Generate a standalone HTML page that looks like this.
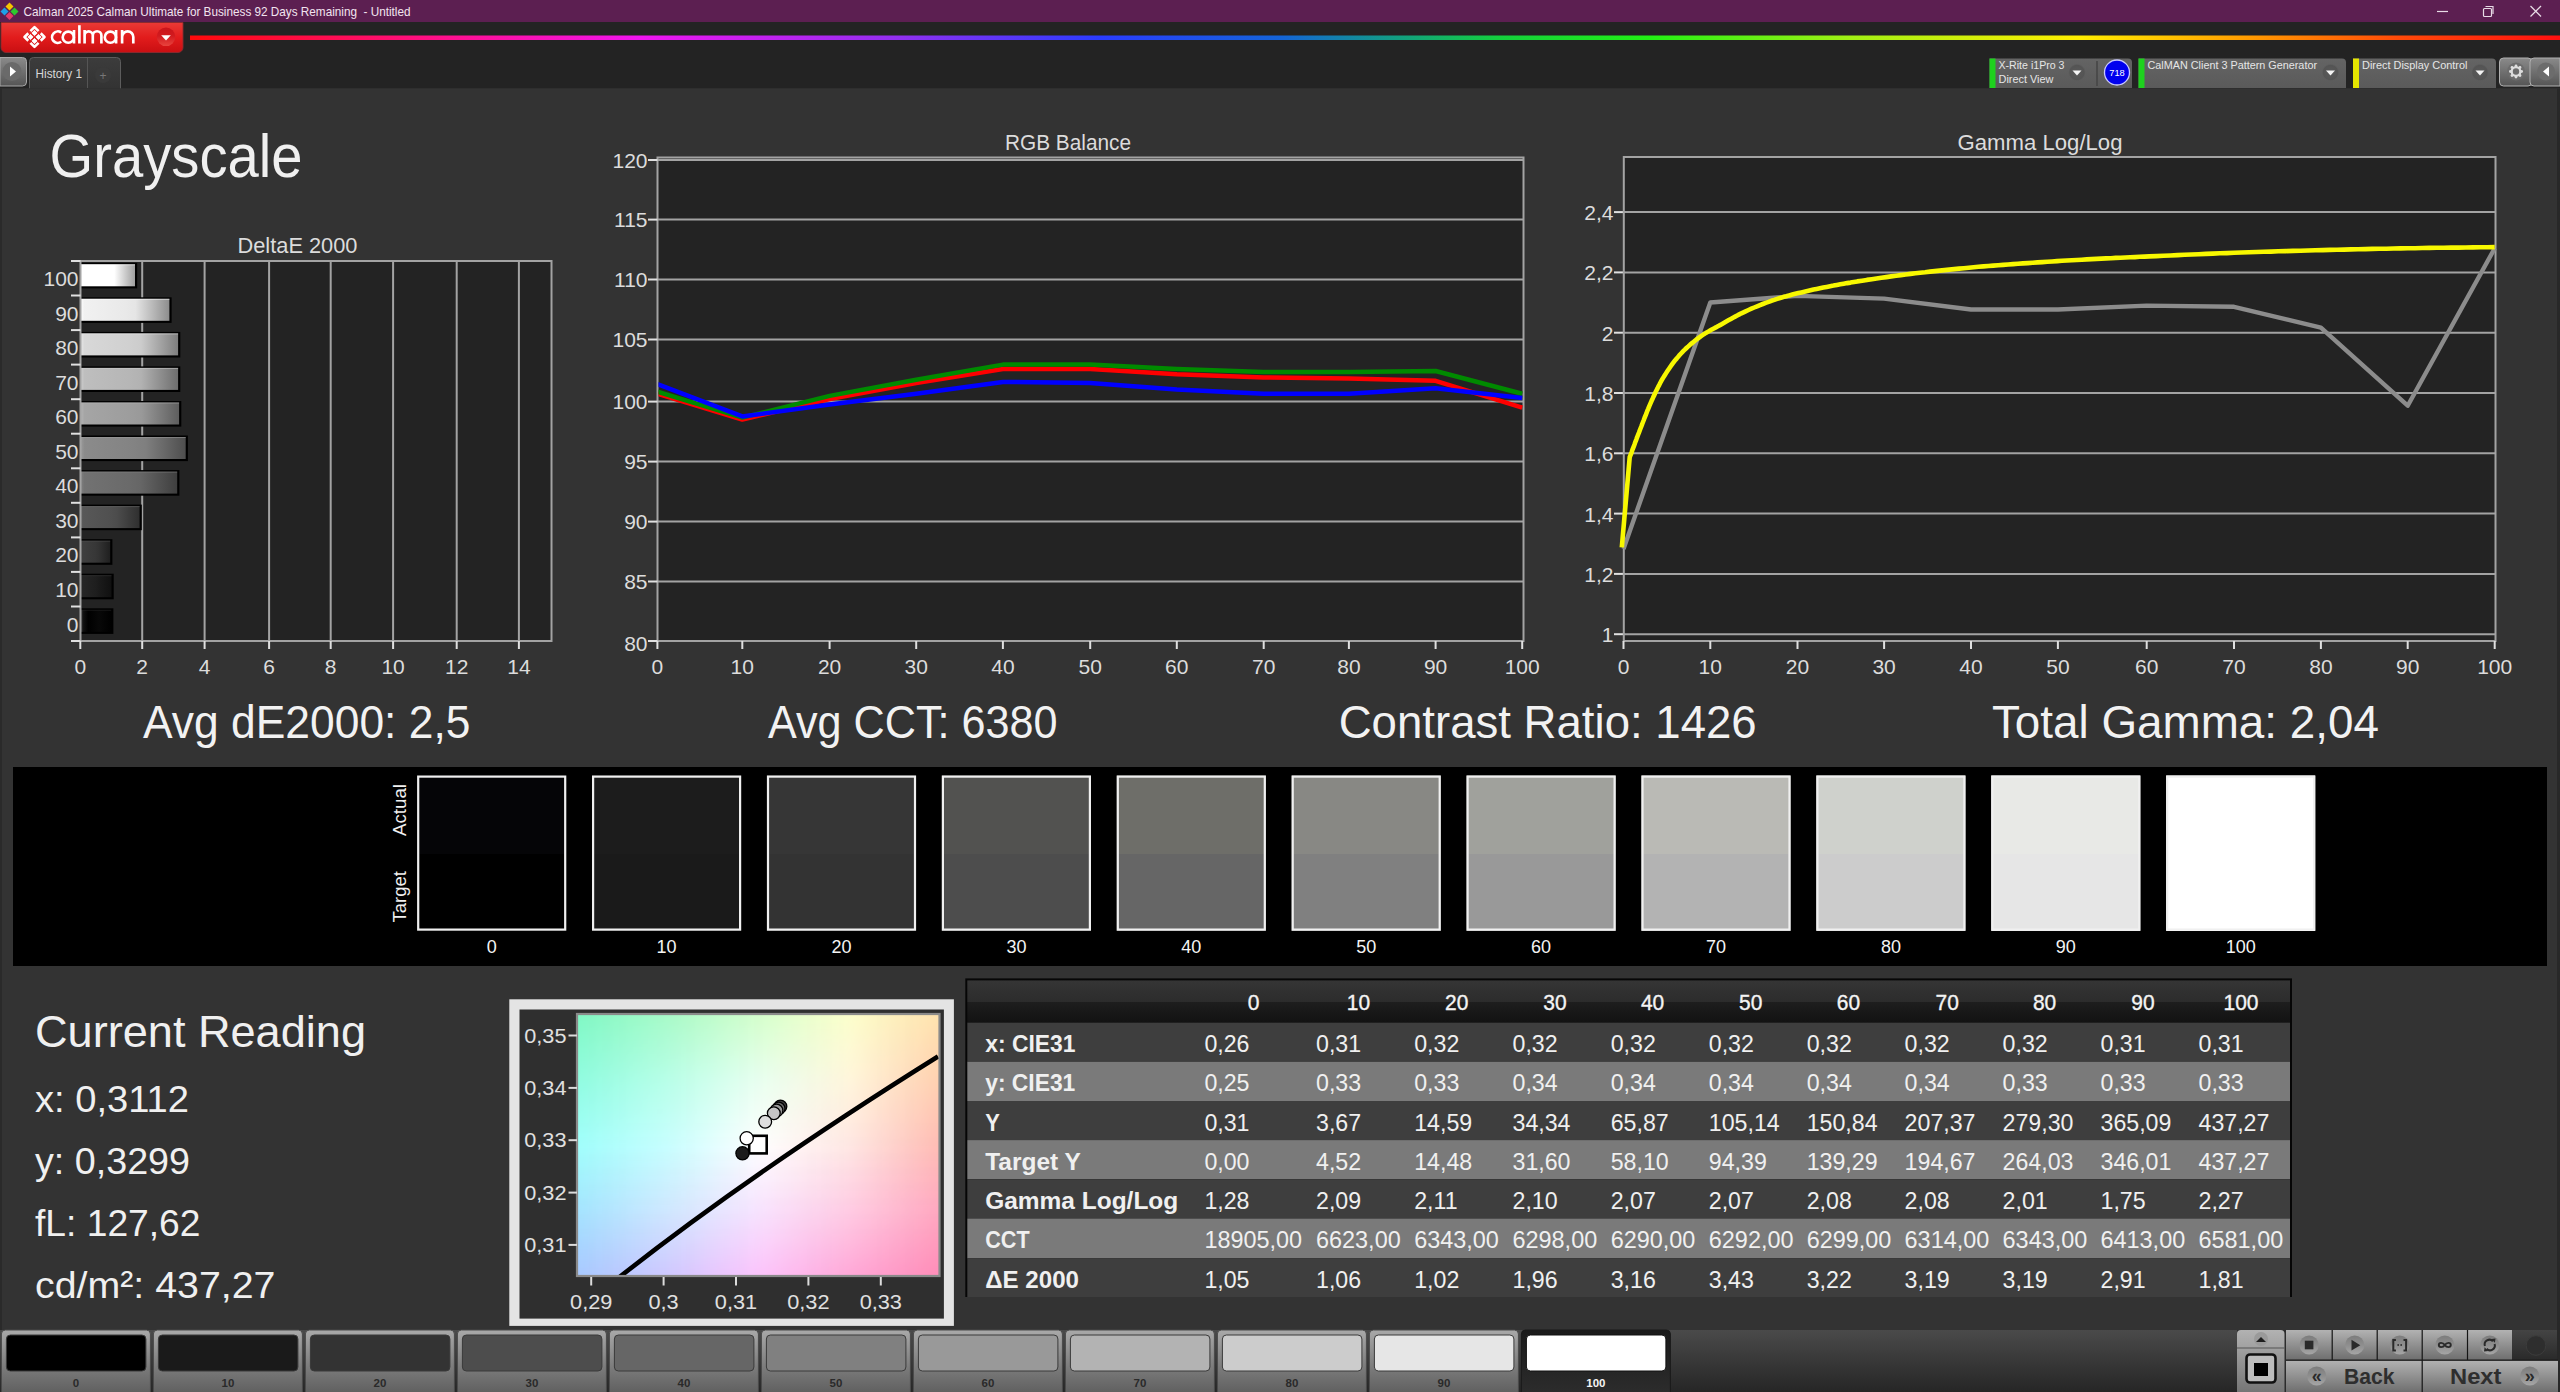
<!DOCTYPE html>
<html><head><meta charset="utf-8"><title>Calman Grayscale</title>
<style>
html,body{margin:0;padding:0;background:#333;overflow:hidden;}
body{width:2560px;height:1392px;position:relative;}
svg{position:absolute;left:0;top:0;display:block;font-family:"Liberation Sans", sans-serif;}
</style></head><body>
<svg width="2560" height="1392" viewBox="0 0 2560 1392">
<defs>
<linearGradient id="rainbow" x1="190" y1="0" x2="2560" y2="0" gradientUnits="userSpaceOnUse">
<stop offset="0" stop-color="#ff0a0a"/>
<stop offset="0.11" stop-color="#ff1090"/>
<stop offset="0.19" stop-color="#f015f0"/>
<stop offset="0.30" stop-color="#9030f0"/>
<stop offset="0.384" stop-color="#2a3cff"/>
<stop offset="0.46" stop-color="#1464d8"/>
<stop offset="0.51" stop-color="#12a080"/>
<stop offset="0.553" stop-color="#14d03c"/>
<stop offset="0.616" stop-color="#22f014"/>
<stop offset="0.70" stop-color="#a0f014"/>
<stop offset="0.797" stop-color="#ffee00"/>
<stop offset="0.87" stop-color="#ff9a00"/>
<stop offset="0.932" stop-color="#ff4a08"/>
<stop offset="1" stop-color="#ff1010"/>
</linearGradient>
<linearGradient id="redbtn" x1="0" y1="0" x2="0" y2="1">
<stop offset="0" stop-color="#ea3a36"/><stop offset="0.5" stop-color="#e21c1c"/><stop offset="1" stop-color="#c90f12"/>
</linearGradient>
<linearGradient id="rdrop" x1="0" y1="0" x2="0" y2="1"><stop offset="0" stop-color="#c8141a"/><stop offset="0.45" stop-color="#d21a1e"/><stop offset="1" stop-color="#e8443e"/></linearGradient>
<linearGradient id="gbtn" x1="0" y1="0" x2="0" y2="1">
<stop offset="0" stop-color="#8a8a8a"/><stop offset="1" stop-color="#555"/></linearGradient>
<linearGradient id="tab" x1="0" y1="0" x2="0" y2="1">
<stop offset="0" stop-color="#3c3c3c"/><stop offset="1" stop-color="#333"/></linearGradient>
<linearGradient id="dev" x1="0" y1="0" x2="0" y2="1">
<stop offset="0" stop-color="#646464"/><stop offset="1" stop-color="#5a5a5a"/></linearGradient>
<radialGradient id="drop" cx="0.5" cy="0.5" r="0.5">
<stop offset="0" stop-color="#5a5a5a"/><stop offset="0.8" stop-color="#545454"/><stop offset="1" stop-color="#5e5e5e" stop-opacity="0"/></radialGradient>
<linearGradient id="bar100" x1="0" y1="0" x2="1" y2="0"><stop offset="0.00" stop-color="#ffffff"/><stop offset="0.04" stop-color="#ffffff"/><stop offset="0.50" stop-color="#ffffff"/><stop offset="0.62" stop-color="#ffffff"/><stop offset="1.00" stop-color="#9e9e9e"/></linearGradient>
<linearGradient id="bar90" x1="0" y1="0" x2="1" y2="0"><stop offset="0.00" stop-color="#ffffff"/><stop offset="0.04" stop-color="#f1f1f1"/><stop offset="0.50" stop-color="#e9e9e9"/><stop offset="0.62" stop-color="#e5e5e5"/><stop offset="1.00" stop-color="#8d8d8d"/></linearGradient>
<linearGradient id="bar80" x1="0" y1="0" x2="1" y2="0"><stop offset="0.00" stop-color="#e8e8e8"/><stop offset="0.04" stop-color="#d8d8d8"/><stop offset="0.50" stop-color="#d0d0d0"/><stop offset="0.62" stop-color="#cccccc"/><stop offset="1.00" stop-color="#7e7e7e"/></linearGradient>
<linearGradient id="bar70" x1="0" y1="0" x2="1" y2="0"><stop offset="0.00" stop-color="#cecece"/><stop offset="0.04" stop-color="#bebebe"/><stop offset="0.50" stop-color="#b6b6b6"/><stop offset="0.62" stop-color="#b2b2b2"/><stop offset="1.00" stop-color="#6e6e6e"/></linearGradient>
<linearGradient id="bar60" x1="0" y1="0" x2="1" y2="0"><stop offset="0.00" stop-color="#b5b5b5"/><stop offset="0.04" stop-color="#a5a5a5"/><stop offset="0.50" stop-color="#9d9d9d"/><stop offset="0.62" stop-color="#999999"/><stop offset="1.00" stop-color="#5e5e5e"/></linearGradient>
<linearGradient id="bar50" x1="0" y1="0" x2="1" y2="0"><stop offset="0.00" stop-color="#9b9b9b"/><stop offset="0.04" stop-color="#8b8b8b"/><stop offset="0.50" stop-color="#838383"/><stop offset="0.62" stop-color="#7f7f7f"/><stop offset="1.00" stop-color="#4e4e4e"/></linearGradient>
<linearGradient id="bar40" x1="0" y1="0" x2="1" y2="0"><stop offset="0.00" stop-color="#828282"/><stop offset="0.04" stop-color="#727272"/><stop offset="0.50" stop-color="#6a6a6a"/><stop offset="0.62" stop-color="#666666"/><stop offset="1.00" stop-color="#3f3f3f"/></linearGradient>
<linearGradient id="bar30" x1="0" y1="0" x2="1" y2="0"><stop offset="0.00" stop-color="#686868"/><stop offset="0.04" stop-color="#585858"/><stop offset="0.50" stop-color="#505050"/><stop offset="0.62" stop-color="#4c4c4c"/><stop offset="1.00" stop-color="#2f2f2f"/></linearGradient>
<linearGradient id="bar20" x1="0" y1="0" x2="1" y2="0"><stop offset="0.00" stop-color="#4f4f4f"/><stop offset="0.04" stop-color="#3f3f3f"/><stop offset="0.50" stop-color="#373737"/><stop offset="0.62" stop-color="#333333"/><stop offset="1.00" stop-color="#1f1f1f"/></linearGradient>
<linearGradient id="bar10" x1="0" y1="0" x2="1" y2="0"><stop offset="0.00" stop-color="#363636"/><stop offset="0.04" stop-color="#262626"/><stop offset="0.50" stop-color="#1e1e1e"/><stop offset="0.62" stop-color="#1a1a1a"/><stop offset="1.00" stop-color="#101010"/></linearGradient>
<linearGradient id="bar0" x1="0" y1="0" x2="1" y2="0"><stop offset="0.00" stop-color="#3a3a3a"/><stop offset="0.10" stop-color="#101010"/><stop offset="0.25" stop-color="#000000"/><stop offset="0.60" stop-color="#080808"/><stop offset="1.00" stop-color="#000000"/></linearGradient>
<clipPath id="qclip"><rect x="658.5" y="157.5" width="865.0" height="483.5"/></clipPath>
<clipPath id="cieclip"><rect x="577.0" y="1014.0" width="362.5" height="262.0"/></clipPath>
<filter id="cblur" x="-5%" y="-5%" width="110%" height="110%"><feGaussianBlur stdDeviation="4"/></filter>
<linearGradient id="thead" x1="0" y1="0" x2="0" y2="1"><stop offset="0" stop-color="#353535"/><stop offset="0.5" stop-color="#2c2c2c"/><stop offset="0.5" stop-color="#1e1e1e"/><stop offset="1" stop-color="#121212"/></linearGradient>
<linearGradient id="bbar" x1="0" y1="0" x2="0" y2="1"><stop offset="0" stop-color="#4a4a4a"/><stop offset="1" stop-color="#262626"/></linearGradient>
<linearGradient id="bbtn" x1="0" y1="0" x2="0" y2="1"><stop offset="0" stop-color="#a9a9a9"/><stop offset="0.55" stop-color="#7a7a7a"/><stop offset="1" stop-color="#585858"/></linearGradient>
<linearGradient id="bsel" x1="0" y1="0" x2="0" y2="1"><stop offset="0" stop-color="#1a1a1a"/><stop offset="1" stop-color="#2e2e2e"/></linearGradient>
<linearGradient id="cbtn" x1="0" y1="0" x2="0" y2="1"><stop offset="0" stop-color="#b2b2b2"/><stop offset="1" stop-color="#6e6e6e"/></linearGradient>
<linearGradient id="bub" x1="0" y1="0" x2="0" y2="1"><stop offset="0" stop-color="#7c7c7c"/><stop offset="0.5" stop-color="#8e8e8e"/><stop offset="1" stop-color="#a6a6a6"/></linearGradient>
<linearGradient id="dkbar" x1="0" y1="0" x2="0" y2="1"><stop offset="0" stop-color="#444"/><stop offset="1" stop-color="#2a2a2a"/></linearGradient>
</defs>
<rect x="0.0" y="0.0" width="2560.0" height="22.0" fill="#5c1f51"/>
<path d="M9.5 2.5l4 4l-4 4l-4 -4z" fill="#f5c400"/>
<path d="M4.5 7.5l4 4l-4 4l-4 -4z" fill="#1ea0e6"/>
<path d="M14.5 7.5l4 4l-4 4l-4 -4z" fill="#2ec82e"/>
<path d="M9.5 12.0l4 4l-4 4l-4 -4z" fill="#e23a6a"/>
<text x="23.5" y="16.0" font-size="12.2" fill="#f2e4ef" textLength="387.0" lengthAdjust="spacingAndGlyphs">Calman 2025 Calman Ultimate for Business 92 Days Remaining  - Untitled</text>
<line x1="2437.0" y1="11.5" x2="2448.0" y2="11.5" stroke="#e8dce6" stroke-width="1.2"/>
<rect x="2483.5" y="8.5" width="8" height="8" fill="none" stroke="#e8dce6" stroke-width="1.2" rx="1"/>
<path d="M2485.5 6.5h7.5v7.5" fill="none" stroke="#e8dce6" stroke-width="1.2"/>
<line x1="2530.5" y1="6.0" x2="2541.0" y2="16.5" stroke="#e8dce6" stroke-width="1.3"/>
<line x1="2541.0" y1="6.0" x2="2530.5" y2="16.5" stroke="#e8dce6" stroke-width="1.3"/>
<rect x="0.0" y="22.0" width="2560.0" height="66.5" fill="#232323"/>
<rect x="190.0" y="35.5" width="2370.0" height="4.5" fill="url(#rainbow)"/>
<path d="M1 22.5h182v25a5 5 0 0 1 -5 5h-172a5 5 0 0 1 -5 -5z" fill="url(#redbtn)" stroke="#8a2a30" stroke-width="0.9"/>
<g><path d="M30.4 31.1L34.5 27.1L38.6 31.1" stroke="#fff" stroke-width="2.6" fill="none" stroke-linecap="butt" stroke-linejoin="round"/><path d="M28.3 33.3L24.5 37L28.3 40.7" stroke="#fff" stroke-width="2.6" fill="none" stroke-linecap="butt" stroke-linejoin="round"/><path d="M40.7 33.3L44.5 37L40.7 40.7" stroke="#fff" stroke-width="2.6" fill="none" stroke-linecap="butt" stroke-linejoin="round"/><path d="M30.4 42.9L34.5 46.9L38.6 42.9" stroke="#fff" stroke-width="2.6" fill="none" stroke-linecap="butt" stroke-linejoin="round"/><path d="M34.5 30.4l2.6 2.6l-2.6 2.6l-2.6 -2.6z" fill="#fff" stroke="#fff" stroke-width="0.9" stroke-linejoin="round"/><path d="M30.5 34.4l2.6 2.6l-2.6 2.6l-2.6 -2.6z" fill="#fff" stroke="#fff" stroke-width="0.9" stroke-linejoin="round"/><path d="M38.5 34.4l2.6 2.6l-2.6 2.6l-2.6 -2.6z" fill="#fff" stroke="#fff" stroke-width="0.9" stroke-linejoin="round"/><path d="M34.5 38.4l2.6 2.6l-2.6 2.6l-2.6 -2.6z" fill="#fff" stroke="#fff" stroke-width="0.9" stroke-linejoin="round"/></g>
<g><path d="M61.2 32.6A5.7 5.7 0 1 0 61.2 41.7" stroke="#fff" stroke-width="2.65" fill="none"/><circle cx="68.3" cy="37.15" r="5.6" stroke="#fff" stroke-width="2.65" fill="none"/><path d="M74 30V43.5" stroke="#fff" stroke-width="2.65" fill="none"/><path d="M79.4 25.2V43.5" stroke="#fff" stroke-width="2.65" fill="none"/><path d="M84.6 30V43.5M84.6 35.5A4.1 4.1 0 0 1 92.8 35.5V43.5M92.8 35.5A4.3 4.3 0 0 1 101.4 35.5V43.5" stroke="#fff" stroke-width="2.65" fill="none"/><circle cx="110.4" cy="37.15" r="5.6" stroke="#fff" stroke-width="2.65" fill="none"/><path d="M116.1 30V43.5" stroke="#fff" stroke-width="2.65" fill="none"/><path d="M122.1 30V43.5M122.1 37A5.6 5.6 0 0 1 133.3 37V43.5" stroke="#fff" stroke-width="2.65" fill="none"/></g>
<circle cx="166" cy="36.8" r="9.3" fill="url(#rdrop)"/>
<path d="M161.2 35.2h9.6l-4.8 5.2z" fill="#fff"/>
<path d="M0 57.5h22.5a4 4 0 0 1 4 4v20.5a4 4 0 0 1 -4 4h-22.5z" fill="url(#gbtn)" stroke="#a8a8a8" stroke-width="1"/>
<circle cx="12" cy="71.5" r="9.5" fill="#6a6a6a"/>
<path d="M10 66.5l6 5l-6 5z" fill="#fff"/>
<path d="M29.5 88.5v-27a4 4 0 0 1 4 -4h83a4 4 0 0 1 4 4v27" fill="url(#tab)" stroke="#5c5c5c" stroke-width="1"/>
<line x1="87.5" y1="58.0" x2="87.5" y2="88.0" stroke="#555" stroke-width="1.0"/>
<text x="35.5" y="78.3" font-size="12.3" fill="#d8d8d8" textLength="46.5" lengthAdjust="spacingAndGlyphs">History 1</text>
<circle cx="103" cy="75" r="8" fill="#3a3a3a"/>
<text x="103.0" y="79.5" font-size="12.0" fill="#777" text-anchor="middle">+</text>
<path d="M1989.5 88h142.5v-25.5a4 4 0 0 0 -4 -4h-138.5z" fill="url(#dev)"/>
<rect x="1989.5" y="58.5" width="6.0" height="29.5" fill="#1ed21e"/>
<text x="1998.5" y="69.2" font-size="11.3" fill="#e6e6e6" textLength="66.0" lengthAdjust="spacingAndGlyphs">X-Rite i1Pro 3</text>
<text x="1998.5" y="83.4" font-size="11.3" fill="#e6e6e6" textLength="55.0" lengthAdjust="spacingAndGlyphs">Direct View</text>
<circle cx="2077.0" cy="72.5" r="9" fill="url(#drop)"/>
<path d="M2072.5 70.5h9l-4.5 5z" fill="#f4f4f4"/>
<line x1="2097.0" y1="61.0" x2="2097.0" y2="86.0" stroke="#444" stroke-width="1.5"/>
<circle cx="2117" cy="72.5" r="12.5" fill="#0000ee" stroke="#c8c8ff" stroke-width="1.3"/>
<text x="2117.0" y="76.2" font-size="9.5" fill="#ffffff" text-anchor="middle" textLength="15.5" lengthAdjust="spacingAndGlyphs">718</text>
<path d="M2138.5 88h207.5v-25.5a4 4 0 0 0 -4 -4h-203.5z" fill="url(#dev)"/>
<rect x="2138.5" y="58.5" width="6.0" height="29.5" fill="#1ed21e"/>
<text x="2147.5" y="69.2" font-size="11.3" fill="#e6e6e6" textLength="169.5" lengthAdjust="spacingAndGlyphs">CalMAN Client 3 Pattern Generator</text>
<circle cx="2330.5" cy="72.5" r="9" fill="url(#drop)"/>
<path d="M2326.0 70.5h9l-4.5 5z" fill="#f4f4f4"/>
<path d="M2353.0 88h143.0v-25.5a4 4 0 0 0 -4 -4h-139.0z" fill="url(#dev)"/>
<rect x="2353.0" y="58.5" width="6.0" height="29.5" fill="#e6e600"/>
<text x="2362.0" y="69.2" font-size="11.3" fill="#e6e6e6" textLength="105.5" lengthAdjust="spacingAndGlyphs">Direct Display Control</text>
<circle cx="2480.0" cy="72.5" r="9" fill="url(#drop)"/>
<path d="M2475.5 70.5h9l-4.5 5z" fill="#f4f4f4"/>
<rect x="2499.5" y="58" width="32.5" height="28" rx="4" fill="url(#gbtn)" stroke="#b0b0b0" stroke-width="1"/>
<circle cx="2516" cy="71.5" r="9" fill="#6c6c6c"/>
<circle cx="2521.6" cy="71.5" r="1.4" fill="#ddd"/><circle cx="2520.0" cy="75.5" r="1.4" fill="#ddd"/><circle cx="2516.0" cy="77.1" r="1.4" fill="#ddd"/><circle cx="2512.0" cy="75.5" r="1.4" fill="#ddd"/><circle cx="2510.4" cy="71.5" r="1.4" fill="#ddd"/><circle cx="2512.0" cy="67.5" r="1.4" fill="#ddd"/><circle cx="2516.0" cy="65.9" r="1.4" fill="#ddd"/><circle cx="2520.0" cy="67.5" r="1.4" fill="#ddd"/>
<circle cx="2516" cy="71.5" r="4.3" fill="none" stroke="#ddd" stroke-width="2.2"/>
<path d="M2534 58h26v28h-26a4 4 0 0 1 -4 -4v-20a4 4 0 0 1 4 -4z" fill="url(#gbtn)" stroke="#b0b0b0" stroke-width="1"/>
<circle cx="2546" cy="71.5" r="9" fill="#6c6c6c"/>
<path d="M2549 66.5l-6 5l6 5z" fill="#fff"/>
<rect x="0.0" y="88.5" width="2560.0" height="1303.5" fill="#333333"/>
<rect x="0.0" y="88.5" width="2.0" height="1303.5" fill="#2a2a2a"/>
<rect x="2557.0" y="88.5" width="3.0" height="1303.5" fill="#282828"/>
<text x="49.5" y="177.0" font-size="62.0" fill="#f0f0f0" textLength="253.0" lengthAdjust="spacingAndGlyphs">Grayscale</text>
<text x="237.5" y="253.0" font-size="22.0" fill="#dcdcdc" textLength="120.0" lengthAdjust="spacingAndGlyphs">DeltaE 2000</text>
<rect x="80.5" y="261.0" width="471.0" height="380.0" fill="#232323"/>
<line x1="142.2" y1="261.0" x2="142.2" y2="641.0" stroke="#a3a3a3" stroke-width="2.0"/>
<line x1="204.6" y1="261.0" x2="204.6" y2="641.0" stroke="#a3a3a3" stroke-width="2.0"/>
<line x1="269.1" y1="261.0" x2="269.1" y2="641.0" stroke="#a3a3a3" stroke-width="2.0"/>
<line x1="330.7" y1="261.0" x2="330.7" y2="641.0" stroke="#a3a3a3" stroke-width="2.0"/>
<line x1="393.1" y1="261.0" x2="393.1" y2="641.0" stroke="#a3a3a3" stroke-width="2.0"/>
<line x1="456.7" y1="261.0" x2="456.7" y2="641.0" stroke="#a3a3a3" stroke-width="2.0"/>
<line x1="518.9" y1="261.0" x2="518.9" y2="641.0" stroke="#a3a3a3" stroke-width="2.0"/>
<rect x="80.5" y="262.8" width="56.7" height="25.6" fill="#000000"/>
<rect x="80.5" y="264.3" width="54.5" height="22.0" fill="url(#bar100)"/>
<rect x="80.5" y="264.3" width="54.5" height="1.0" fill="#ffffff" opacity="0.55"/>
<rect x="80.5" y="297.3" width="91.1" height="25.6" fill="#000000"/>
<rect x="80.5" y="298.8" width="88.9" height="22.0" fill="url(#bar90)"/>
<rect x="80.5" y="298.8" width="88.9" height="1.0" fill="#ffffff" opacity="0.55"/>
<rect x="80.5" y="331.9" width="99.8" height="25.6" fill="#000000"/>
<rect x="80.5" y="333.4" width="97.6" height="22.0" fill="url(#bar80)"/>
<rect x="80.5" y="333.4" width="97.6" height="1.0" fill="#eaeaea" opacity="0.55"/>
<rect x="80.5" y="366.4" width="99.8" height="25.6" fill="#000000"/>
<rect x="80.5" y="367.9" width="97.6" height="22.0" fill="url(#bar70)"/>
<rect x="80.5" y="367.9" width="97.6" height="1.0" fill="#d0d0d0" opacity="0.55"/>
<rect x="80.5" y="401.0" width="100.8" height="25.6" fill="#000000"/>
<rect x="80.5" y="402.5" width="98.6" height="22.0" fill="url(#bar60)"/>
<rect x="80.5" y="402.5" width="98.6" height="1.0" fill="#b7b7b7" opacity="0.55"/>
<rect x="80.5" y="435.5" width="107.4" height="25.6" fill="#000000"/>
<rect x="80.5" y="437.0" width="105.2" height="22.0" fill="url(#bar50)"/>
<rect x="80.5" y="437.0" width="105.2" height="1.0" fill="#9d9d9d" opacity="0.55"/>
<rect x="80.5" y="470.1" width="98.9" height="25.6" fill="#000000"/>
<rect x="80.5" y="471.6" width="96.7" height="22.0" fill="url(#bar40)"/>
<rect x="80.5" y="471.6" width="96.7" height="1.0" fill="#848484" opacity="0.55"/>
<rect x="80.5" y="504.6" width="61.3" height="25.6" fill="#000000"/>
<rect x="80.5" y="506.1" width="59.1" height="22.0" fill="url(#bar30)"/>
<rect x="80.5" y="506.1" width="59.1" height="1.0" fill="#6a6a6a" opacity="0.55"/>
<rect x="80.5" y="539.2" width="31.9" height="25.6" fill="#000000"/>
<rect x="80.5" y="540.7" width="29.7" height="22.0" fill="url(#bar20)"/>
<rect x="80.5" y="540.7" width="29.7" height="1.0" fill="#515151" opacity="0.55"/>
<rect x="80.5" y="573.7" width="33.2" height="25.6" fill="#000000"/>
<rect x="80.5" y="575.2" width="31.0" height="22.0" fill="url(#bar10)"/>
<rect x="80.5" y="575.2" width="31.0" height="1.0" fill="#383838" opacity="0.55"/>
<rect x="80.5" y="608.3" width="32.9" height="25.6" fill="#000000"/>
<rect x="80.5" y="609.8" width="30.7" height="22.0" fill="url(#bar0)"/>
<rect x="80.5" y="609.8" width="30.7" height="1.0" fill="#282828" opacity="0.55"/>
<rect x="80.5" y="261.0" width="471.0" height="380.0" fill="none" stroke="#a3a3a3" stroke-width="2"/>
<line x1="71.0" y1="261.0" x2="80.5" y2="261.0" stroke="#e0e0e0" stroke-width="2.0"/>
<line x1="71.0" y1="295.5" x2="80.5" y2="295.5" stroke="#e0e0e0" stroke-width="2.0"/>
<line x1="71.0" y1="330.1" x2="80.5" y2="330.1" stroke="#e0e0e0" stroke-width="2.0"/>
<line x1="71.0" y1="364.6" x2="80.5" y2="364.6" stroke="#e0e0e0" stroke-width="2.0"/>
<line x1="71.0" y1="399.2" x2="80.5" y2="399.2" stroke="#e0e0e0" stroke-width="2.0"/>
<line x1="71.0" y1="433.7" x2="80.5" y2="433.7" stroke="#e0e0e0" stroke-width="2.0"/>
<line x1="71.0" y1="468.3" x2="80.5" y2="468.3" stroke="#e0e0e0" stroke-width="2.0"/>
<line x1="71.0" y1="502.8" x2="80.5" y2="502.8" stroke="#e0e0e0" stroke-width="2.0"/>
<line x1="71.0" y1="537.4" x2="80.5" y2="537.4" stroke="#e0e0e0" stroke-width="2.0"/>
<line x1="71.0" y1="571.9" x2="80.5" y2="571.9" stroke="#e0e0e0" stroke-width="2.0"/>
<line x1="71.0" y1="606.5" x2="80.5" y2="606.5" stroke="#e0e0e0" stroke-width="2.0"/>
<line x1="71.0" y1="641.0" x2="80.5" y2="641.0" stroke="#e0e0e0" stroke-width="2.0"/>
<text x="78.5" y="286.1" font-size="21.0" fill="#dcdcdc" text-anchor="end">100</text>
<text x="78.5" y="320.6" font-size="21.0" fill="#dcdcdc" text-anchor="end">90</text>
<text x="78.5" y="355.2" font-size="21.0" fill="#dcdcdc" text-anchor="end">80</text>
<text x="78.5" y="389.7" font-size="21.0" fill="#dcdcdc" text-anchor="end">70</text>
<text x="78.5" y="424.3" font-size="21.0" fill="#dcdcdc" text-anchor="end">60</text>
<text x="78.5" y="458.8" font-size="21.0" fill="#dcdcdc" text-anchor="end">50</text>
<text x="78.5" y="493.3" font-size="21.0" fill="#dcdcdc" text-anchor="end">40</text>
<text x="78.5" y="527.9" font-size="21.0" fill="#dcdcdc" text-anchor="end">30</text>
<text x="78.5" y="562.4" font-size="21.0" fill="#dcdcdc" text-anchor="end">20</text>
<text x="78.5" y="597.0" font-size="21.0" fill="#dcdcdc" text-anchor="end">10</text>
<text x="78.5" y="631.5" font-size="21.0" fill="#dcdcdc" text-anchor="end">0</text>
<line x1="80.3" y1="641.0" x2="80.3" y2="649.0" stroke="#e0e0e0" stroke-width="2.0"/>
<text x="80.3" y="674.0" font-size="21.0" fill="#dcdcdc" text-anchor="middle">0</text>
<line x1="142.2" y1="641.0" x2="142.2" y2="649.0" stroke="#e0e0e0" stroke-width="2.0"/>
<text x="142.2" y="674.0" font-size="21.0" fill="#dcdcdc" text-anchor="middle">2</text>
<line x1="204.6" y1="641.0" x2="204.6" y2="649.0" stroke="#e0e0e0" stroke-width="2.0"/>
<text x="204.6" y="674.0" font-size="21.0" fill="#dcdcdc" text-anchor="middle">4</text>
<line x1="269.1" y1="641.0" x2="269.1" y2="649.0" stroke="#e0e0e0" stroke-width="2.0"/>
<text x="269.1" y="674.0" font-size="21.0" fill="#dcdcdc" text-anchor="middle">6</text>
<line x1="330.7" y1="641.0" x2="330.7" y2="649.0" stroke="#e0e0e0" stroke-width="2.0"/>
<text x="330.7" y="674.0" font-size="21.0" fill="#dcdcdc" text-anchor="middle">8</text>
<line x1="393.1" y1="641.0" x2="393.1" y2="649.0" stroke="#e0e0e0" stroke-width="2.0"/>
<text x="393.1" y="674.0" font-size="21.0" fill="#dcdcdc" text-anchor="middle">10</text>
<line x1="456.7" y1="641.0" x2="456.7" y2="649.0" stroke="#e0e0e0" stroke-width="2.0"/>
<text x="456.7" y="674.0" font-size="21.0" fill="#dcdcdc" text-anchor="middle">12</text>
<line x1="518.9" y1="641.0" x2="518.9" y2="649.0" stroke="#e0e0e0" stroke-width="2.0"/>
<text x="518.9" y="674.0" font-size="21.0" fill="#dcdcdc" text-anchor="middle">14</text>
<text x="1005.0" y="149.5" font-size="22.0" fill="#dcdcdc" textLength="126.0" lengthAdjust="spacingAndGlyphs">RGB Balance</text>
<rect x="657.5" y="157.5" width="866.0" height="483.5" fill="#232323"/>
<line x1="657.5" y1="581.5" x2="1523.5" y2="581.5" stroke="#a3a3a3" stroke-width="2.0"/>
<line x1="657.5" y1="521.6" x2="1523.5" y2="521.6" stroke="#a3a3a3" stroke-width="2.0"/>
<line x1="657.5" y1="461.6" x2="1523.5" y2="461.6" stroke="#a3a3a3" stroke-width="2.0"/>
<line x1="657.5" y1="401.6" x2="1523.5" y2="401.6" stroke="#a3a3a3" stroke-width="2.0"/>
<line x1="657.5" y1="339.5" x2="1523.5" y2="339.5" stroke="#a3a3a3" stroke-width="2.0"/>
<line x1="657.5" y1="279.5" x2="1523.5" y2="279.5" stroke="#a3a3a3" stroke-width="2.0"/>
<line x1="657.5" y1="219.6" x2="1523.5" y2="219.6" stroke="#a3a3a3" stroke-width="2.0"/>
<line x1="657.5" y1="160.0" x2="1523.5" y2="160.0" stroke="#a3a3a3" stroke-width="2.0"/>
<rect x="657.5" y="157.5" width="866.0" height="483.5" fill="none" stroke="#a3a3a3" stroke-width="2"/>
<line x1="648.0" y1="641.0" x2="657.5" y2="641.0" stroke="#e0e0e0" stroke-width="2.0"/>
<text x="647.5" y="650.5" font-size="21.0" fill="#dcdcdc" text-anchor="end">80</text>
<line x1="648.0" y1="581.5" x2="657.5" y2="581.5" stroke="#e0e0e0" stroke-width="2.0"/>
<text x="647.5" y="589.0" font-size="21.0" fill="#dcdcdc" text-anchor="end">85</text>
<line x1="648.0" y1="521.6" x2="657.5" y2="521.6" stroke="#e0e0e0" stroke-width="2.0"/>
<text x="647.5" y="529.1" font-size="21.0" fill="#dcdcdc" text-anchor="end">90</text>
<line x1="648.0" y1="461.6" x2="657.5" y2="461.6" stroke="#e0e0e0" stroke-width="2.0"/>
<text x="647.5" y="469.1" font-size="21.0" fill="#dcdcdc" text-anchor="end">95</text>
<line x1="648.0" y1="401.6" x2="657.5" y2="401.6" stroke="#e0e0e0" stroke-width="2.0"/>
<text x="647.5" y="409.1" font-size="21.0" fill="#dcdcdc" text-anchor="end">100</text>
<line x1="648.0" y1="339.5" x2="657.5" y2="339.5" stroke="#e0e0e0" stroke-width="2.0"/>
<text x="647.5" y="347.0" font-size="21.0" fill="#dcdcdc" text-anchor="end">105</text>
<line x1="648.0" y1="279.5" x2="657.5" y2="279.5" stroke="#e0e0e0" stroke-width="2.0"/>
<text x="647.5" y="287.0" font-size="21.0" fill="#dcdcdc" text-anchor="end">110</text>
<line x1="648.0" y1="219.6" x2="657.5" y2="219.6" stroke="#e0e0e0" stroke-width="2.0"/>
<text x="647.5" y="227.1" font-size="21.0" fill="#dcdcdc" text-anchor="end">115</text>
<line x1="648.0" y1="160.0" x2="657.5" y2="160.0" stroke="#e0e0e0" stroke-width="2.0"/>
<text x="647.5" y="167.5" font-size="21.0" fill="#dcdcdc" text-anchor="end">120</text>
<line x1="657.4" y1="641.0" x2="657.4" y2="649.0" stroke="#e0e0e0" stroke-width="2.0"/>
<text x="657.4" y="674.0" font-size="21.0" fill="#dcdcdc" text-anchor="middle">0</text>
<line x1="742.3" y1="641.0" x2="742.3" y2="649.0" stroke="#e0e0e0" stroke-width="2.0"/>
<text x="742.3" y="674.0" font-size="21.0" fill="#dcdcdc" text-anchor="middle">10</text>
<line x1="829.6" y1="641.0" x2="829.6" y2="649.0" stroke="#e0e0e0" stroke-width="2.0"/>
<text x="829.6" y="674.0" font-size="21.0" fill="#dcdcdc" text-anchor="middle">20</text>
<line x1="916.2" y1="641.0" x2="916.2" y2="649.0" stroke="#e0e0e0" stroke-width="2.0"/>
<text x="916.2" y="674.0" font-size="21.0" fill="#dcdcdc" text-anchor="middle">30</text>
<line x1="1002.9" y1="641.0" x2="1002.9" y2="649.0" stroke="#e0e0e0" stroke-width="2.0"/>
<text x="1002.9" y="674.0" font-size="21.0" fill="#dcdcdc" text-anchor="middle">40</text>
<line x1="1090.2" y1="641.0" x2="1090.2" y2="649.0" stroke="#e0e0e0" stroke-width="2.0"/>
<text x="1090.2" y="674.0" font-size="21.0" fill="#dcdcdc" text-anchor="middle">50</text>
<line x1="1176.8" y1="641.0" x2="1176.8" y2="649.0" stroke="#e0e0e0" stroke-width="2.0"/>
<text x="1176.8" y="674.0" font-size="21.0" fill="#dcdcdc" text-anchor="middle">60</text>
<line x1="1263.7" y1="641.0" x2="1263.7" y2="649.0" stroke="#e0e0e0" stroke-width="2.0"/>
<text x="1263.7" y="674.0" font-size="21.0" fill="#dcdcdc" text-anchor="middle">70</text>
<line x1="1348.9" y1="641.0" x2="1348.9" y2="649.0" stroke="#e0e0e0" stroke-width="2.0"/>
<text x="1348.9" y="674.0" font-size="21.0" fill="#dcdcdc" text-anchor="middle">80</text>
<line x1="1435.6" y1="641.0" x2="1435.6" y2="649.0" stroke="#e0e0e0" stroke-width="2.0"/>
<text x="1435.6" y="674.0" font-size="21.0" fill="#dcdcdc" text-anchor="middle">90</text>
<line x1="1522.2" y1="641.0" x2="1522.2" y2="649.0" stroke="#e0e0e0" stroke-width="2.0"/>
<text x="1522.2" y="674.0" font-size="21.0" fill="#dcdcdc" text-anchor="middle">100</text>
<g clip-path="url(#qclip)">
<polyline points="657.4,393.7 742.3,419.5 829.6,399.0 916.2,383.0 1002.9,369.0 1090.2,368.9 1176.8,374.3 1263.7,377.5 1348.9,378.6 1435.6,380.8 1522.2,407.7" fill="none" stroke="#ff0000" stroke-width="4.5" stroke-linejoin="round"/>
<polyline points="657.4,391.6 742.3,417.6 829.6,395.9 916.2,379.7 1002.9,364.6 1090.2,364.6 1176.8,368.9 1263.7,372.0 1348.9,372.0 1435.6,371.0 1522.2,393.7" fill="none" stroke="#008a00" stroke-width="4.5" stroke-linejoin="round"/>
<polyline points="657.4,384.2 742.3,416.4 829.6,404.5 916.2,393.7 1002.9,381.9 1090.2,382.9 1176.8,389.4 1263.7,393.7 1348.9,393.7 1435.6,388.3 1522.2,398.0" fill="none" stroke="#0000ff" stroke-width="4.5" stroke-linejoin="round"/>
</g>
<text x="1957.5" y="149.5" font-size="22.0" fill="#dcdcdc" textLength="165.0" lengthAdjust="spacingAndGlyphs">Gamma Log/Log</text>
<rect x="1623.8" y="157.0" width="871.7" height="484.0" fill="#232323"/>
<line x1="1623.8" y1="634.2" x2="2495.5" y2="634.2" stroke="#a3a3a3" stroke-width="2.0"/>
<line x1="1614.0" y1="634.2" x2="1623.8" y2="634.2" stroke="#e0e0e0" stroke-width="2.0"/>
<text x="1613.5" y="642.2" font-size="21.0" fill="#dcdcdc" text-anchor="end">1</text>
<line x1="1623.8" y1="573.9" x2="2495.5" y2="573.9" stroke="#a3a3a3" stroke-width="2.0"/>
<line x1="1614.0" y1="573.9" x2="1623.8" y2="573.9" stroke="#e0e0e0" stroke-width="2.0"/>
<text x="1613.5" y="581.9" font-size="21.0" fill="#dcdcdc" text-anchor="end">1,2</text>
<line x1="1623.8" y1="513.6" x2="2495.5" y2="513.6" stroke="#a3a3a3" stroke-width="2.0"/>
<line x1="1614.0" y1="513.6" x2="1623.8" y2="513.6" stroke="#e0e0e0" stroke-width="2.0"/>
<text x="1613.5" y="521.6" font-size="21.0" fill="#dcdcdc" text-anchor="end">1,4</text>
<line x1="1623.8" y1="453.3" x2="2495.5" y2="453.3" stroke="#a3a3a3" stroke-width="2.0"/>
<line x1="1614.0" y1="453.3" x2="1623.8" y2="453.3" stroke="#e0e0e0" stroke-width="2.0"/>
<text x="1613.5" y="461.3" font-size="21.0" fill="#dcdcdc" text-anchor="end">1,6</text>
<line x1="1623.8" y1="393.0" x2="2495.5" y2="393.0" stroke="#a3a3a3" stroke-width="2.0"/>
<line x1="1614.0" y1="393.0" x2="1623.8" y2="393.0" stroke="#e0e0e0" stroke-width="2.0"/>
<text x="1613.5" y="401.0" font-size="21.0" fill="#dcdcdc" text-anchor="end">1,8</text>
<line x1="1623.8" y1="332.7" x2="2495.5" y2="332.7" stroke="#a3a3a3" stroke-width="2.0"/>
<line x1="1614.0" y1="332.7" x2="1623.8" y2="332.7" stroke="#e0e0e0" stroke-width="2.0"/>
<text x="1613.5" y="340.7" font-size="21.0" fill="#dcdcdc" text-anchor="end">2</text>
<line x1="1623.8" y1="272.4" x2="2495.5" y2="272.4" stroke="#a3a3a3" stroke-width="2.0"/>
<line x1="1614.0" y1="272.4" x2="1623.8" y2="272.4" stroke="#e0e0e0" stroke-width="2.0"/>
<text x="1613.5" y="280.4" font-size="21.0" fill="#dcdcdc" text-anchor="end">2,2</text>
<line x1="1623.8" y1="212.1" x2="2495.5" y2="212.1" stroke="#a3a3a3" stroke-width="2.0"/>
<line x1="1614.0" y1="212.1" x2="1623.8" y2="212.1" stroke="#e0e0e0" stroke-width="2.0"/>
<text x="1613.5" y="220.1" font-size="21.0" fill="#dcdcdc" text-anchor="end">2,4</text>
<rect x="1623.8" y="157.0" width="871.7" height="484.0" fill="none" stroke="#a3a3a3" stroke-width="2"/>
<line x1="1623.5" y1="641.0" x2="1623.5" y2="649.0" stroke="#e0e0e0" stroke-width="2.0"/>
<text x="1623.5" y="674.0" font-size="21.0" fill="#dcdcdc" text-anchor="middle">0</text>
<line x1="1710.3" y1="641.0" x2="1710.3" y2="649.0" stroke="#e0e0e0" stroke-width="2.0"/>
<text x="1710.3" y="674.0" font-size="21.0" fill="#dcdcdc" text-anchor="middle">10</text>
<line x1="1797.5" y1="641.0" x2="1797.5" y2="649.0" stroke="#e0e0e0" stroke-width="2.0"/>
<text x="1797.5" y="674.0" font-size="21.0" fill="#dcdcdc" text-anchor="middle">20</text>
<line x1="1884.1" y1="641.0" x2="1884.1" y2="649.0" stroke="#e0e0e0" stroke-width="2.0"/>
<text x="1884.1" y="674.0" font-size="21.0" fill="#dcdcdc" text-anchor="middle">30</text>
<line x1="1971.0" y1="641.0" x2="1971.0" y2="649.0" stroke="#e0e0e0" stroke-width="2.0"/>
<text x="1971.0" y="674.0" font-size="21.0" fill="#dcdcdc" text-anchor="middle">40</text>
<line x1="2057.9" y1="641.0" x2="2057.9" y2="649.0" stroke="#e0e0e0" stroke-width="2.0"/>
<text x="2057.9" y="674.0" font-size="21.0" fill="#dcdcdc" text-anchor="middle">50</text>
<line x1="2146.7" y1="641.0" x2="2146.7" y2="649.0" stroke="#e0e0e0" stroke-width="2.0"/>
<text x="2146.7" y="674.0" font-size="21.0" fill="#dcdcdc" text-anchor="middle">60</text>
<line x1="2234.0" y1="641.0" x2="2234.0" y2="649.0" stroke="#e0e0e0" stroke-width="2.0"/>
<text x="2234.0" y="674.0" font-size="21.0" fill="#dcdcdc" text-anchor="middle">70</text>
<line x1="2320.9" y1="641.0" x2="2320.9" y2="649.0" stroke="#e0e0e0" stroke-width="2.0"/>
<text x="2320.9" y="674.0" font-size="21.0" fill="#dcdcdc" text-anchor="middle">80</text>
<line x1="2407.7" y1="641.0" x2="2407.7" y2="649.0" stroke="#e0e0e0" stroke-width="2.0"/>
<text x="2407.7" y="674.0" font-size="21.0" fill="#dcdcdc" text-anchor="middle">90</text>
<line x1="2494.7" y1="641.0" x2="2494.7" y2="649.0" stroke="#e0e0e0" stroke-width="2.0"/>
<text x="2494.7" y="674.0" font-size="21.0" fill="#dcdcdc" text-anchor="middle">100</text>
<polyline points="1623.5,548.9 1710.3,302.5 1797.5,295.9 1884.1,298.6 1971.0,309.5 2057.9,309.5 2146.7,305.6 2234.0,306.8 2320.9,327.6 2407.7,405.7 2494.7,248.3" fill="none" stroke="#8c8c8c" stroke-width="4.4" stroke-linejoin="round"/>
<polyline points="1621.8,547.4 1629.7,457.2 1630.4,455.4 1631.1,453.6 1631.8,451.8 1632.4,449.9 1633.1,448.1 1633.8,446.3 1634.5,444.5 1635.1,442.6 1635.8,440.8 1636.5,439.1 1637.1,437.3 1637.8,435.5 1639.0,432.5 1640.1,429.5 1641.3,426.5 1642.4,423.5 1643.6,420.5 1644.7,417.5 1645.9,414.6 1647.0,411.7 1648.2,408.9 1649.3,406.1 1650.5,403.4 1651.6,400.8 1652.6,398.7 1653.5,396.6 1654.5,394.6 1655.4,392.5 1656.4,390.5 1657.4,388.6 1658.3,386.6 1659.3,384.8 1660.2,383.0 1661.2,381.2 1662.1,379.5 1663.1,377.9 1664.6,375.5 1666.1,373.1 1667.6,370.8 1669.2,368.5 1670.7,366.3 1672.2,364.2 1673.7,362.2 1675.2,360.2 1676.8,358.4 1678.3,356.6 1679.8,354.8 1681.3,353.2 1683.0,351.4 1684.8,349.7 1686.5,348.0 1688.3,346.4 1690.0,344.8 1691.7,343.4 1693.5,341.9 1695.2,340.5 1696.9,339.2 1698.7,337.9 1700.4,336.6 1702.1,335.4 1703.7,334.4 1705.2,333.4 1706.7,332.5 1708.2,331.6 1709.7,330.7 1711.3,329.8 1712.8,329.0 1714.3,328.2 1715.8,327.4 1717.4,326.5 1718.9,325.7 1720.4,324.9 1722.5,323.7 1724.6,322.5 1726.7,321.3 1728.8,320.1 1730.9,318.9 1733.0,317.7 1735.1,316.6 1737.2,315.5 1739.3,314.4 1741.4,313.3 1743.5,312.3 1745.6,311.3 1748.5,310.0 1751.4,308.7 1754.2,307.5 1757.1,306.3 1760.0,305.1 1762.8,304.0 1765.7,302.9 1768.6,301.9 1771.4,300.8 1774.3,299.9 1777.2,298.9 1780.1,298.0 1783.1,297.1 1786.2,296.3 1789.2,295.4 1792.3,294.6 1795.3,293.8 1798.4,293.1 1801.4,292.4 1804.4,291.7 1807.5,291.0 1810.5,290.3 1813.5,289.6 1816.6,289.0 1819.9,288.3 1823.3,287.6 1826.7,286.9 1830.1,286.2 1833.5,285.6 1836.9,284.9 1840.3,284.3 1843.7,283.7 1847.1,283.1 1850.5,282.6 1853.9,282.0 1857.3,281.4 1862.1,280.7 1866.9,279.9 1871.8,279.2 1876.6,278.5 1881.4,277.8 1886.3,277.1 1891.1,276.4 1896.0,275.7 1900.8,275.1 1905.7,274.5 1910.5,273.9 1915.4,273.3 1920.2,272.7 1925.1,272.2 1929.9,271.6 1934.8,271.1 1939.6,270.6 1944.5,270.1 1949.3,269.6 1954.2,269.1 1959.1,268.6 1963.9,268.2 1968.8,267.7 1973.6,267.3 1978.5,266.8 1983.5,266.4 1988.4,266.0 1993.3,265.6 1998.2,265.2 2003.2,264.9 2008.1,264.5 2013.0,264.1 2017.9,263.8 2022.9,263.4 2027.8,263.1 2032.7,262.8 2037.6,262.4 2042.4,262.1 2047.3,261.8 2052.1,261.5 2057.0,261.1 2061.9,260.8 2066.9,260.5 2071.8,260.2 2076.8,260.0 2081.7,259.7 2086.7,259.4 2091.6,259.1 2096.5,258.9 2101.3,258.6 2106.1,258.4 2110.9,258.2 2115.7,257.9 2120.5,257.7 2125.3,257.5 2130.1,257.3 2134.9,257.1 2139.7,256.8 2144.6,256.6 2149.3,256.4 2156.4,256.1 2163.4,255.8 2170.5,255.5 2177.5,255.1 2184.6,254.8 2191.7,254.5 2198.7,254.2 2205.8,253.9 2212.8,253.6 2219.9,253.3 2226.9,253.1 2234.0,252.8 2241.4,252.5 2248.8,252.3 2256.2,252.0 2263.5,251.8 2270.9,251.6 2278.3,251.3 2285.7,251.1 2293.1,250.9 2300.5,250.7 2307.9,250.5 2315.3,250.3 2322.6,250.1 2329.7,249.9 2336.8,249.7 2343.9,249.6 2351.0,249.4 2358.1,249.3 2365.2,249.1 2372.3,248.9 2379.3,248.8 2386.4,248.7 2393.5,248.5 2400.6,248.4 2407.7,248.3 2414.9,248.2 2422.2,248.0 2429.4,247.9 2436.7,247.8 2443.9,247.7 2451.2,247.6 2458.4,247.6 2465.7,247.5 2472.9,247.4 2480.2,247.3 2487.4,247.2 2494.7,247.1" fill="none" stroke="#f8f800" stroke-width="4.6" stroke-linejoin="round"/>
<text x="143.0" y="737.8" font-size="47.0" fill="#f2f2f2" textLength="327.5" lengthAdjust="spacingAndGlyphs">Avg dE2000: 2,5</text>
<text x="768.0" y="737.8" font-size="47.0" fill="#f2f2f2" textLength="289.5" lengthAdjust="spacingAndGlyphs">Avg CCT: 6380</text>
<text x="1338.7" y="737.8" font-size="47.0" fill="#f2f2f2" textLength="418.0" lengthAdjust="spacingAndGlyphs">Contrast Ratio: 1426</text>
<text x="1991.9" y="737.8" font-size="47.0" fill="#f2f2f2" textLength="387.0" lengthAdjust="spacingAndGlyphs">Total Gamma: 2,04</text>
<rect x="13.0" y="767.0" width="2534.0" height="199.0" fill="#000000"/>
<rect x="417.2" y="775.5" width="149.0" height="78.5" fill="#050507"/>
<rect x="417.2" y="854.0" width="149.0" height="77.0" fill="#000000"/>
<rect x="418.2" y="776.6" width="147.0" height="153.0" fill="none" stroke="#f0f0f0" stroke-width="2.2"/>
<text x="491.7" y="953.0" font-size="18.0" fill="#f4f4f4" text-anchor="middle">0</text>
<rect x="592.1" y="775.5" width="149.0" height="78.5" fill="#1c1c1c"/>
<rect x="592.1" y="854.0" width="149.0" height="77.0" fill="#1a1a1a"/>
<rect x="593.1" y="776.6" width="147.0" height="153.0" fill="none" stroke="#f0f0f0" stroke-width="2.2"/>
<text x="666.6" y="953.0" font-size="18.0" fill="#f4f4f4" text-anchor="middle">10</text>
<rect x="767.0" y="775.5" width="149.0" height="78.5" fill="#363636"/>
<rect x="767.0" y="854.0" width="149.0" height="77.0" fill="#333333"/>
<rect x="768.0" y="776.6" width="147.0" height="153.0" fill="none" stroke="#f0f0f0" stroke-width="2.2"/>
<text x="841.5" y="953.0" font-size="18.0" fill="#f4f4f4" text-anchor="middle">20</text>
<rect x="941.9" y="775.5" width="149.0" height="78.5" fill="#525250"/>
<rect x="941.9" y="854.0" width="149.0" height="77.0" fill="#4d4d4d"/>
<rect x="942.9" y="776.6" width="147.0" height="153.0" fill="none" stroke="#f0f0f0" stroke-width="2.2"/>
<text x="1016.4" y="953.0" font-size="18.0" fill="#f4f4f4" text-anchor="middle">30</text>
<rect x="1116.8" y="775.5" width="149.0" height="78.5" fill="#6e6e69"/>
<rect x="1116.8" y="854.0" width="149.0" height="77.0" fill="#666666"/>
<rect x="1117.8" y="776.6" width="147.0" height="153.0" fill="none" stroke="#f0f0f0" stroke-width="2.2"/>
<text x="1191.3" y="953.0" font-size="18.0" fill="#f4f4f4" text-anchor="middle">40</text>
<rect x="1291.7" y="775.5" width="149.0" height="78.5" fill="#888884"/>
<rect x="1291.7" y="854.0" width="149.0" height="77.0" fill="#808080"/>
<rect x="1292.7" y="776.6" width="147.0" height="153.0" fill="none" stroke="#f0f0f0" stroke-width="2.2"/>
<text x="1366.2" y="953.0" font-size="18.0" fill="#f4f4f4" text-anchor="middle">50</text>
<rect x="1466.6" y="775.5" width="149.0" height="78.5" fill="#a0a19c"/>
<rect x="1466.6" y="854.0" width="149.0" height="77.0" fill="#999999"/>
<rect x="1467.6" y="776.6" width="147.0" height="153.0" fill="none" stroke="#f0f0f0" stroke-width="2.2"/>
<text x="1541.1" y="953.0" font-size="18.0" fill="#f4f4f4" text-anchor="middle">60</text>
<rect x="1641.5" y="775.5" width="149.0" height="78.5" fill="#babab5"/>
<rect x="1641.5" y="854.0" width="149.0" height="77.0" fill="#b3b3b3"/>
<rect x="1642.5" y="776.6" width="147.0" height="153.0" fill="none" stroke="#f0f0f0" stroke-width="2.2"/>
<text x="1716.0" y="953.0" font-size="18.0" fill="#f4f4f4" text-anchor="middle">70</text>
<rect x="1816.4" y="775.5" width="149.0" height="78.5" fill="#cfd1cc"/>
<rect x="1816.4" y="854.0" width="149.0" height="77.0" fill="#cccccc"/>
<rect x="1817.4" y="776.6" width="147.0" height="153.0" fill="none" stroke="#f0f0f0" stroke-width="2.2"/>
<text x="1890.9" y="953.0" font-size="18.0" fill="#f4f4f4" text-anchor="middle">80</text>
<rect x="1991.3" y="775.5" width="149.0" height="78.5" fill="#e8e9e6"/>
<rect x="1991.3" y="854.0" width="149.0" height="77.0" fill="#e6e6e6"/>
<rect x="1992.3" y="776.6" width="147.0" height="153.0" fill="none" stroke="#f0f0f0" stroke-width="2.2"/>
<text x="2065.8" y="953.0" font-size="18.0" fill="#f4f4f4" text-anchor="middle">90</text>
<rect x="2166.2" y="775.5" width="149.0" height="78.5" fill="#ffffff"/>
<rect x="2166.2" y="854.0" width="149.0" height="77.0" fill="#ffffff"/>
<rect x="2167.2" y="776.6" width="147.0" height="153.0" fill="none" stroke="#f0f0f0" stroke-width="2.2"/>
<text x="2240.7" y="953.0" font-size="18.0" fill="#f4f4f4" text-anchor="middle">100</text>
<text transform="translate(406 836) rotate(-90)" font-size="18.5" fill="#f0f0f0" textLength="52" lengthAdjust="spacingAndGlyphs">Actual</text>
<text transform="translate(406 922.5) rotate(-90)" font-size="18.5" fill="#f0f0f0" textLength="51.5" lengthAdjust="spacingAndGlyphs">Target</text>
<text x="35.0" y="1047.0" font-size="45.0" fill="#f0f0f0" textLength="331.0" lengthAdjust="spacingAndGlyphs">Current Reading</text>
<text x="35.0" y="1111.7" font-size="37.8" fill="#f0f0f0" textLength="154.0" lengthAdjust="spacingAndGlyphs">x: 0,3112</text>
<text x="35.0" y="1173.8" font-size="37.8" fill="#f0f0f0" textLength="155.0" lengthAdjust="spacingAndGlyphs">y: 0,3299</text>
<text x="35.0" y="1236.0" font-size="37.8" fill="#f0f0f0" textLength="165.5" lengthAdjust="spacingAndGlyphs">fL: 127,62</text>
<text x="35.0" y="1298.0" font-size="37.8" fill="#f0f0f0" textLength="240.5" lengthAdjust="spacingAndGlyphs">cd/m²: 437,27</text>
<rect x="509.3" y="999.3" width="444.6" height="326.6" fill="#e4e4e4"/>
<rect x="519.5" y="1009.5" width="424.4" height="309.1" fill="#2f2f2f"/>
<g clip-path="url(#cieclip)"><g filter="url(#cblur)"><rect x="569.45" y="1006.51" width="8.15" height="8.09" fill="#80f8c4"/><rect x="577.00" y="1006.51" width="8.15" height="8.09" fill="#82f8c4"/><rect x="584.55" y="1006.51" width="8.15" height="8.09" fill="#85f8c4"/><rect x="592.10" y="1006.51" width="8.15" height="8.09" fill="#88f8c5"/><rect x="599.66" y="1006.51" width="8.15" height="8.09" fill="#8cf9c5"/><rect x="607.21" y="1006.51" width="8.15" height="8.09" fill="#8ff9c6"/><rect x="614.76" y="1006.51" width="8.15" height="8.09" fill="#92f9c6"/><rect x="622.31" y="1006.51" width="8.15" height="8.09" fill="#96f9c6"/><rect x="629.86" y="1006.51" width="8.15" height="8.09" fill="#99f9c6"/><rect x="637.42" y="1006.51" width="8.15" height="8.09" fill="#9cf9c7"/><rect x="644.97" y="1006.51" width="8.15" height="8.09" fill="#a0fac7"/><rect x="652.52" y="1006.51" width="8.15" height="8.09" fill="#a3fac8"/><rect x="660.07" y="1006.51" width="8.15" height="8.09" fill="#a6fac8"/><rect x="667.62" y="1006.51" width="8.15" height="8.09" fill="#aafac8"/><rect x="675.18" y="1006.51" width="8.15" height="8.09" fill="#aefbc8"/><rect x="682.73" y="1006.51" width="8.15" height="8.09" fill="#b1fbc9"/><rect x="690.28" y="1006.51" width="8.15" height="8.09" fill="#b5fbc9"/><rect x="697.83" y="1006.51" width="8.15" height="8.09" fill="#b8fcca"/><rect x="705.39" y="1006.51" width="8.15" height="8.09" fill="#bcfcca"/><rect x="712.94" y="1006.51" width="8.15" height="8.09" fill="#c0fdca"/><rect x="720.49" y="1006.51" width="8.15" height="8.09" fill="#c4fdca"/><rect x="728.04" y="1006.51" width="8.15" height="8.09" fill="#c7fecb"/><rect x="735.59" y="1006.51" width="8.15" height="8.09" fill="#cbfecb"/><rect x="743.15" y="1006.51" width="8.15" height="8.09" fill="#cefecc"/><rect x="750.70" y="1006.51" width="8.15" height="8.09" fill="#d2ffcc"/><rect x="758.25" y="1006.51" width="8.15" height="8.09" fill="#d6ffcc"/><rect x="765.80" y="1006.51" width="8.15" height="8.09" fill="#d9ffcc"/><rect x="773.35" y="1006.51" width="8.15" height="8.09" fill="#dcffcc"/><rect x="780.91" y="1006.51" width="8.15" height="8.09" fill="#e0ffcc"/><rect x="788.46" y="1006.51" width="8.15" height="8.09" fill="#e3ffcc"/><rect x="796.01" y="1006.51" width="8.15" height="8.09" fill="#e6ffcc"/><rect x="803.56" y="1006.51" width="8.15" height="8.09" fill="#eaffcc"/><rect x="811.11" y="1006.51" width="8.15" height="8.09" fill="#edffcc"/><rect x="818.67" y="1006.51" width="8.15" height="8.09" fill="#f0ffcc"/><rect x="826.22" y="1006.51" width="8.15" height="8.09" fill="#f4ffcc"/><rect x="833.77" y="1006.51" width="8.15" height="8.09" fill="#f7ffcc"/><rect x="841.32" y="1006.51" width="8.15" height="8.09" fill="#faffcc"/><rect x="848.88" y="1006.51" width="8.15" height="8.09" fill="#fcfecb"/><rect x="856.43" y="1006.51" width="8.15" height="8.09" fill="#fcfbc8"/><rect x="863.98" y="1006.51" width="8.15" height="8.09" fill="#fdf9c6"/><rect x="871.53" y="1006.51" width="8.15" height="8.09" fill="#fdf7c3"/><rect x="879.08" y="1006.51" width="8.15" height="8.09" fill="#fdf4c1"/><rect x="886.64" y="1006.51" width="8.15" height="8.09" fill="#fdf2be"/><rect x="894.19" y="1006.51" width="8.15" height="8.09" fill="#feefbc"/><rect x="901.74" y="1006.51" width="8.15" height="8.09" fill="#feedb9"/><rect x="909.29" y="1006.51" width="8.15" height="8.09" fill="#feeab7"/><rect x="916.84" y="1006.51" width="8.15" height="8.09" fill="#fee8b4"/><rect x="924.40" y="1006.51" width="8.15" height="8.09" fill="#ffe6b2"/><rect x="931.95" y="1006.51" width="8.15" height="8.09" fill="#ffe3af"/><rect x="939.50" y="1006.51" width="8.15" height="8.09" fill="#ffe2ae"/><rect x="569.45" y="1014.00" width="8.15" height="8.09" fill="#81f8c6"/><rect x="577.00" y="1014.00" width="8.15" height="8.09" fill="#83f8c6"/><rect x="584.55" y="1014.00" width="8.15" height="8.09" fill="#86f8c6"/><rect x="592.10" y="1014.00" width="8.15" height="8.09" fill="#89f9c6"/><rect x="599.66" y="1014.00" width="8.15" height="8.09" fill="#8df9c7"/><rect x="607.21" y="1014.00" width="8.15" height="8.09" fill="#90f9c7"/><rect x="614.76" y="1014.00" width="8.15" height="8.09" fill="#93f9c8"/><rect x="622.31" y="1014.00" width="8.15" height="8.09" fill="#97f9c8"/><rect x="629.86" y="1014.00" width="8.15" height="8.09" fill="#9afac8"/><rect x="637.42" y="1014.00" width="8.15" height="8.09" fill="#9dfac9"/><rect x="644.97" y="1014.00" width="8.15" height="8.09" fill="#a1fac9"/><rect x="652.52" y="1014.00" width="8.15" height="8.09" fill="#a4fac9"/><rect x="660.07" y="1014.00" width="8.15" height="8.09" fill="#a7faca"/><rect x="667.62" y="1014.00" width="8.15" height="8.09" fill="#abfaca"/><rect x="675.18" y="1014.00" width="8.15" height="8.09" fill="#aefbca"/><rect x="682.73" y="1014.00" width="8.15" height="8.09" fill="#b2fbcb"/><rect x="690.28" y="1014.00" width="8.15" height="8.09" fill="#b6fccb"/><rect x="697.83" y="1014.00" width="8.15" height="8.09" fill="#bafccb"/><rect x="705.39" y="1014.00" width="8.15" height="8.09" fill="#bdfccc"/><rect x="712.94" y="1014.00" width="8.15" height="8.09" fill="#c1fdcc"/><rect x="720.49" y="1014.00" width="8.15" height="8.09" fill="#c5fdcc"/><rect x="728.04" y="1014.00" width="8.15" height="8.09" fill="#c8fecd"/><rect x="735.59" y="1014.00" width="8.15" height="8.09" fill="#ccfecd"/><rect x="743.15" y="1014.00" width="8.15" height="8.09" fill="#d0fece"/><rect x="750.70" y="1014.00" width="8.15" height="8.09" fill="#d3ffce"/><rect x="758.25" y="1014.00" width="8.15" height="8.09" fill="#d7ffce"/><rect x="765.80" y="1014.00" width="8.15" height="8.09" fill="#daffce"/><rect x="773.35" y="1014.00" width="8.15" height="8.09" fill="#ddffce"/><rect x="780.91" y="1014.00" width="8.15" height="8.09" fill="#e1ffce"/><rect x="788.46" y="1014.00" width="8.15" height="8.09" fill="#e4ffce"/><rect x="796.01" y="1014.00" width="8.15" height="8.09" fill="#e7ffce"/><rect x="803.56" y="1014.00" width="8.15" height="8.09" fill="#eaffcd"/><rect x="811.11" y="1014.00" width="8.15" height="8.09" fill="#eeffcd"/><rect x="818.67" y="1014.00" width="8.15" height="8.09" fill="#f1ffcd"/><rect x="826.22" y="1014.00" width="8.15" height="8.09" fill="#f4ffcd"/><rect x="833.77" y="1014.00" width="8.15" height="8.09" fill="#f7ffcd"/><rect x="841.32" y="1014.00" width="8.15" height="8.09" fill="#fbffcd"/><rect x="848.88" y="1014.00" width="8.15" height="8.09" fill="#fcfdcc"/><rect x="856.43" y="1014.00" width="8.15" height="8.09" fill="#fdfbc9"/><rect x="863.98" y="1014.00" width="8.15" height="8.09" fill="#fdf8c6"/><rect x="871.53" y="1014.00" width="8.15" height="8.09" fill="#fdf6c4"/><rect x="879.08" y="1014.00" width="8.15" height="8.09" fill="#fdf3c1"/><rect x="886.64" y="1014.00" width="8.15" height="8.09" fill="#fdf1bf"/><rect x="894.19" y="1014.00" width="8.15" height="8.09" fill="#feeebc"/><rect x="901.74" y="1014.00" width="8.15" height="8.09" fill="#feecba"/><rect x="909.29" y="1014.00" width="8.15" height="8.09" fill="#feeab7"/><rect x="916.84" y="1014.00" width="8.15" height="8.09" fill="#fee7b5"/><rect x="924.40" y="1014.00" width="8.15" height="8.09" fill="#ffe5b2"/><rect x="931.95" y="1014.00" width="8.15" height="8.09" fill="#ffe2af"/><rect x="939.50" y="1014.00" width="8.15" height="8.09" fill="#ffe1ae"/><rect x="569.45" y="1021.49" width="8.15" height="8.09" fill="#83f9c9"/><rect x="577.00" y="1021.49" width="8.15" height="8.09" fill="#84f9c9"/><rect x="584.55" y="1021.49" width="8.15" height="8.09" fill="#88f9c9"/><rect x="592.10" y="1021.49" width="8.15" height="8.09" fill="#8bf9ca"/><rect x="599.66" y="1021.49" width="8.15" height="8.09" fill="#8ef9ca"/><rect x="607.21" y="1021.49" width="8.15" height="8.09" fill="#92f9cb"/><rect x="614.76" y="1021.49" width="8.15" height="8.09" fill="#95facb"/><rect x="622.31" y="1021.49" width="8.15" height="8.09" fill="#98facb"/><rect x="629.86" y="1021.49" width="8.15" height="8.09" fill="#9cfacc"/><rect x="637.42" y="1021.49" width="8.15" height="8.09" fill="#9ffacc"/><rect x="644.97" y="1021.49" width="8.15" height="8.09" fill="#a2facd"/><rect x="652.52" y="1021.49" width="8.15" height="8.09" fill="#a6fbcd"/><rect x="660.07" y="1021.49" width="8.15" height="8.09" fill="#a9fbcd"/><rect x="667.62" y="1021.49" width="8.15" height="8.09" fill="#adfbce"/><rect x="675.18" y="1021.49" width="8.15" height="8.09" fill="#b0fbce"/><rect x="682.73" y="1021.49" width="8.15" height="8.09" fill="#b4fcce"/><rect x="690.28" y="1021.49" width="8.15" height="8.09" fill="#b8fccf"/><rect x="697.83" y="1021.49" width="8.15" height="8.09" fill="#bcfccf"/><rect x="705.39" y="1021.49" width="8.15" height="8.09" fill="#bffdd0"/><rect x="712.94" y="1021.49" width="8.15" height="8.09" fill="#c3fdd0"/><rect x="720.49" y="1021.49" width="8.15" height="8.09" fill="#c7fdd0"/><rect x="728.04" y="1021.49" width="8.15" height="8.09" fill="#cafed1"/><rect x="735.59" y="1021.49" width="8.15" height="8.09" fill="#cefed1"/><rect x="743.15" y="1021.49" width="8.15" height="8.09" fill="#d2fed2"/><rect x="750.70" y="1021.49" width="8.15" height="8.09" fill="#d6ffd2"/><rect x="758.25" y="1021.49" width="8.15" height="8.09" fill="#d9ffd2"/><rect x="765.80" y="1021.49" width="8.15" height="8.09" fill="#dcffd2"/><rect x="773.35" y="1021.49" width="8.15" height="8.09" fill="#dfffd1"/><rect x="780.91" y="1021.49" width="8.15" height="8.09" fill="#e2ffd1"/><rect x="788.46" y="1021.49" width="8.15" height="8.09" fill="#e5fed1"/><rect x="796.01" y="1021.49" width="8.15" height="8.09" fill="#e8fed1"/><rect x="803.56" y="1021.49" width="8.15" height="8.09" fill="#ecfed0"/><rect x="811.11" y="1021.49" width="8.15" height="8.09" fill="#effed0"/><rect x="818.67" y="1021.49" width="8.15" height="8.09" fill="#f2fed0"/><rect x="826.22" y="1021.49" width="8.15" height="8.09" fill="#f5fecf"/><rect x="833.77" y="1021.49" width="8.15" height="8.09" fill="#f8fecf"/><rect x="841.32" y="1021.49" width="8.15" height="8.09" fill="#fbfecf"/><rect x="848.88" y="1021.49" width="8.15" height="8.09" fill="#fdfccd"/><rect x="856.43" y="1021.49" width="8.15" height="8.09" fill="#fdfacb"/><rect x="863.98" y="1021.49" width="8.15" height="8.09" fill="#fdf7c8"/><rect x="871.53" y="1021.49" width="8.15" height="8.09" fill="#fdf5c5"/><rect x="879.08" y="1021.49" width="8.15" height="8.09" fill="#fdf2c3"/><rect x="886.64" y="1021.49" width="8.15" height="8.09" fill="#feefc0"/><rect x="894.19" y="1021.49" width="8.15" height="8.09" fill="#feedbd"/><rect x="901.74" y="1021.49" width="8.15" height="8.09" fill="#feeaba"/><rect x="909.29" y="1021.49" width="8.15" height="8.09" fill="#fee8b8"/><rect x="916.84" y="1021.49" width="8.15" height="8.09" fill="#fee5b5"/><rect x="924.40" y="1021.49" width="8.15" height="8.09" fill="#ffe3b2"/><rect x="931.95" y="1021.49" width="8.15" height="8.09" fill="#ffe0b0"/><rect x="939.50" y="1021.49" width="8.15" height="8.09" fill="#ffdfae"/><rect x="569.45" y="1028.97" width="8.15" height="8.09" fill="#85f9cc"/><rect x="577.00" y="1028.97" width="8.15" height="8.09" fill="#86f9cc"/><rect x="584.55" y="1028.97" width="8.15" height="8.09" fill="#8af9cd"/><rect x="592.10" y="1028.97" width="8.15" height="8.09" fill="#8dfacd"/><rect x="599.66" y="1028.97" width="8.15" height="8.09" fill="#90face"/><rect x="607.21" y="1028.97" width="8.15" height="8.09" fill="#94face"/><rect x="614.76" y="1028.97" width="8.15" height="8.09" fill="#97face"/><rect x="622.31" y="1028.97" width="8.15" height="8.09" fill="#9afacf"/><rect x="629.86" y="1028.97" width="8.15" height="8.09" fill="#9efbcf"/><rect x="637.42" y="1028.97" width="8.15" height="8.09" fill="#a1fbd0"/><rect x="644.97" y="1028.97" width="8.15" height="8.09" fill="#a4fbd0"/><rect x="652.52" y="1028.97" width="8.15" height="8.09" fill="#a8fbd0"/><rect x="660.07" y="1028.97" width="8.15" height="8.09" fill="#abfbd1"/><rect x="667.62" y="1028.97" width="8.15" height="8.09" fill="#aefcd1"/><rect x="675.18" y="1028.97" width="8.15" height="8.09" fill="#b2fcd2"/><rect x="682.73" y="1028.97" width="8.15" height="8.09" fill="#b6fcd2"/><rect x="690.28" y="1028.97" width="8.15" height="8.09" fill="#bafcd3"/><rect x="697.83" y="1028.97" width="8.15" height="8.09" fill="#befdd3"/><rect x="705.39" y="1028.97" width="8.15" height="8.09" fill="#c1fdd4"/><rect x="712.94" y="1028.97" width="8.15" height="8.09" fill="#c5fdd4"/><rect x="720.49" y="1028.97" width="8.15" height="8.09" fill="#c9fed4"/><rect x="728.04" y="1028.97" width="8.15" height="8.09" fill="#cdfed5"/><rect x="735.59" y="1028.97" width="8.15" height="8.09" fill="#d0fed5"/><rect x="743.15" y="1028.97" width="8.15" height="8.09" fill="#d4ffd6"/><rect x="750.70" y="1028.97" width="8.15" height="8.09" fill="#d8ffd6"/><rect x="758.25" y="1028.97" width="8.15" height="8.09" fill="#dbffd6"/><rect x="765.80" y="1028.97" width="8.15" height="8.09" fill="#deffd6"/><rect x="773.35" y="1028.97" width="8.15" height="8.09" fill="#e1fed5"/><rect x="780.91" y="1028.97" width="8.15" height="8.09" fill="#e4fed5"/><rect x="788.46" y="1028.97" width="8.15" height="8.09" fill="#e7fed4"/><rect x="796.01" y="1028.97" width="8.15" height="8.09" fill="#eafed4"/><rect x="803.56" y="1028.97" width="8.15" height="8.09" fill="#edfed3"/><rect x="811.11" y="1028.97" width="8.15" height="8.09" fill="#f0fdd3"/><rect x="818.67" y="1028.97" width="8.15" height="8.09" fill="#f3fdd2"/><rect x="826.22" y="1028.97" width="8.15" height="8.09" fill="#f6fdd2"/><rect x="833.77" y="1028.97" width="8.15" height="8.09" fill="#f8fdd1"/><rect x="841.32" y="1028.97" width="8.15" height="8.09" fill="#fbfdd1"/><rect x="848.88" y="1028.97" width="8.15" height="8.09" fill="#fdfbcf"/><rect x="856.43" y="1028.97" width="8.15" height="8.09" fill="#fdf8cc"/><rect x="863.98" y="1028.97" width="8.15" height="8.09" fill="#fdf6c9"/><rect x="871.53" y="1028.97" width="8.15" height="8.09" fill="#fdf3c7"/><rect x="879.08" y="1028.97" width="8.15" height="8.09" fill="#fef1c4"/><rect x="886.64" y="1028.97" width="8.15" height="8.09" fill="#feeec1"/><rect x="894.19" y="1028.97" width="8.15" height="8.09" fill="#feebbe"/><rect x="901.74" y="1028.97" width="8.15" height="8.09" fill="#fee9bb"/><rect x="909.29" y="1028.97" width="8.15" height="8.09" fill="#fee6b8"/><rect x="916.84" y="1028.97" width="8.15" height="8.09" fill="#ffe3b6"/><rect x="924.40" y="1028.97" width="8.15" height="8.09" fill="#ffe1b3"/><rect x="931.95" y="1028.97" width="8.15" height="8.09" fill="#ffdeb0"/><rect x="939.50" y="1028.97" width="8.15" height="8.09" fill="#ffddaf"/><rect x="569.45" y="1036.46" width="8.15" height="8.09" fill="#86facf"/><rect x="577.00" y="1036.46" width="8.15" height="8.09" fill="#88facf"/><rect x="584.55" y="1036.46" width="8.15" height="8.09" fill="#8bfad0"/><rect x="592.10" y="1036.46" width="8.15" height="8.09" fill="#8ffad0"/><rect x="599.66" y="1036.46" width="8.15" height="8.09" fill="#92fad1"/><rect x="607.21" y="1036.46" width="8.15" height="8.09" fill="#95fad1"/><rect x="614.76" y="1036.46" width="8.15" height="8.09" fill="#99fbd2"/><rect x="622.31" y="1036.46" width="8.15" height="8.09" fill="#9cfbd2"/><rect x="629.86" y="1036.46" width="8.15" height="8.09" fill="#9ffbd3"/><rect x="637.42" y="1036.46" width="8.15" height="8.09" fill="#a3fbd3"/><rect x="644.97" y="1036.46" width="8.15" height="8.09" fill="#a6fcd4"/><rect x="652.52" y="1036.46" width="8.15" height="8.09" fill="#a9fcd4"/><rect x="660.07" y="1036.46" width="8.15" height="8.09" fill="#adfcd5"/><rect x="667.62" y="1036.46" width="8.15" height="8.09" fill="#b0fcd5"/><rect x="675.18" y="1036.46" width="8.15" height="8.09" fill="#b4fcd6"/><rect x="682.73" y="1036.46" width="8.15" height="8.09" fill="#b8fdd6"/><rect x="690.28" y="1036.46" width="8.15" height="8.09" fill="#bcfdd6"/><rect x="697.83" y="1036.46" width="8.15" height="8.09" fill="#c0fdd7"/><rect x="705.39" y="1036.46" width="8.15" height="8.09" fill="#c3fdd7"/><rect x="712.94" y="1036.46" width="8.15" height="8.09" fill="#c7fed8"/><rect x="720.49" y="1036.46" width="8.15" height="8.09" fill="#cbfed8"/><rect x="728.04" y="1036.46" width="8.15" height="8.09" fill="#cffed9"/><rect x="735.59" y="1036.46" width="8.15" height="8.09" fill="#d2fed9"/><rect x="743.15" y="1036.46" width="8.15" height="8.09" fill="#d6ffda"/><rect x="750.70" y="1036.46" width="8.15" height="8.09" fill="#daffda"/><rect x="758.25" y="1036.46" width="8.15" height="8.09" fill="#ddffda"/><rect x="765.80" y="1036.46" width="8.15" height="8.09" fill="#e0ffd9"/><rect x="773.35" y="1036.46" width="8.15" height="8.09" fill="#e3fed9"/><rect x="780.91" y="1036.46" width="8.15" height="8.09" fill="#e6fed8"/><rect x="788.46" y="1036.46" width="8.15" height="8.09" fill="#e8fed7"/><rect x="796.01" y="1036.46" width="8.15" height="8.09" fill="#ebfdd7"/><rect x="803.56" y="1036.46" width="8.15" height="8.09" fill="#eefdd6"/><rect x="811.11" y="1036.46" width="8.15" height="8.09" fill="#f1fdd5"/><rect x="818.67" y="1036.46" width="8.15" height="8.09" fill="#f4fcd5"/><rect x="826.22" y="1036.46" width="8.15" height="8.09" fill="#f6fcd4"/><rect x="833.77" y="1036.46" width="8.15" height="8.09" fill="#f9fcd3"/><rect x="841.32" y="1036.46" width="8.15" height="8.09" fill="#fcfcd3"/><rect x="848.88" y="1036.46" width="8.15" height="8.09" fill="#fdfad1"/><rect x="856.43" y="1036.46" width="8.15" height="8.09" fill="#fdf7ce"/><rect x="863.98" y="1036.46" width="8.15" height="8.09" fill="#fef5cb"/><rect x="871.53" y="1036.46" width="8.15" height="8.09" fill="#fef2c8"/><rect x="879.08" y="1036.46" width="8.15" height="8.09" fill="#feefc5"/><rect x="886.64" y="1036.46" width="8.15" height="8.09" fill="#feecc2"/><rect x="894.19" y="1036.46" width="8.15" height="8.09" fill="#feeabf"/><rect x="901.74" y="1036.46" width="8.15" height="8.09" fill="#fee7bc"/><rect x="909.29" y="1036.46" width="8.15" height="8.09" fill="#fee4b9"/><rect x="916.84" y="1036.46" width="8.15" height="8.09" fill="#ffe2b6"/><rect x="924.40" y="1036.46" width="8.15" height="8.09" fill="#ffdfb3"/><rect x="931.95" y="1036.46" width="8.15" height="8.09" fill="#ffdcb0"/><rect x="939.50" y="1036.46" width="8.15" height="8.09" fill="#ffdbaf"/><rect x="569.45" y="1043.94" width="8.15" height="8.09" fill="#88fad2"/><rect x="577.00" y="1043.94" width="8.15" height="8.09" fill="#8afad3"/><rect x="584.55" y="1043.94" width="8.15" height="8.09" fill="#8dfad3"/><rect x="592.10" y="1043.94" width="8.15" height="8.09" fill="#91fbd4"/><rect x="599.66" y="1043.94" width="8.15" height="8.09" fill="#94fbd4"/><rect x="607.21" y="1043.94" width="8.15" height="8.09" fill="#97fbd5"/><rect x="614.76" y="1043.94" width="8.15" height="8.09" fill="#9bfbd5"/><rect x="622.31" y="1043.94" width="8.15" height="8.09" fill="#9efbd6"/><rect x="629.86" y="1043.94" width="8.15" height="8.09" fill="#a1fcd6"/><rect x="637.42" y="1043.94" width="8.15" height="8.09" fill="#a5fcd7"/><rect x="644.97" y="1043.94" width="8.15" height="8.09" fill="#a8fcd7"/><rect x="652.52" y="1043.94" width="8.15" height="8.09" fill="#abfcd8"/><rect x="660.07" y="1043.94" width="8.15" height="8.09" fill="#affcd8"/><rect x="667.62" y="1043.94" width="8.15" height="8.09" fill="#b2fdd9"/><rect x="675.18" y="1043.94" width="8.15" height="8.09" fill="#b6fdd9"/><rect x="682.73" y="1043.94" width="8.15" height="8.09" fill="#bafdda"/><rect x="690.28" y="1043.94" width="8.15" height="8.09" fill="#befdda"/><rect x="697.83" y="1043.94" width="8.15" height="8.09" fill="#c2fddb"/><rect x="705.39" y="1043.94" width="8.15" height="8.09" fill="#c5fedb"/><rect x="712.94" y="1043.94" width="8.15" height="8.09" fill="#c9fedc"/><rect x="720.49" y="1043.94" width="8.15" height="8.09" fill="#cdfedc"/><rect x="728.04" y="1043.94" width="8.15" height="8.09" fill="#d1fedd"/><rect x="735.59" y="1043.94" width="8.15" height="8.09" fill="#d5fedd"/><rect x="743.15" y="1043.94" width="8.15" height="8.09" fill="#d9ffde"/><rect x="750.70" y="1043.94" width="8.15" height="8.09" fill="#dcffde"/><rect x="758.25" y="1043.94" width="8.15" height="8.09" fill="#e0ffde"/><rect x="765.80" y="1043.94" width="8.15" height="8.09" fill="#e2fedd"/><rect x="773.35" y="1043.94" width="8.15" height="8.09" fill="#e5fedc"/><rect x="780.91" y="1043.94" width="8.15" height="8.09" fill="#e7fedc"/><rect x="788.46" y="1043.94" width="8.15" height="8.09" fill="#eafddb"/><rect x="796.01" y="1043.94" width="8.15" height="8.09" fill="#edfdda"/><rect x="803.56" y="1043.94" width="8.15" height="8.09" fill="#effcd9"/><rect x="811.11" y="1043.94" width="8.15" height="8.09" fill="#f2fcd8"/><rect x="818.67" y="1043.94" width="8.15" height="8.09" fill="#f4fcd7"/><rect x="826.22" y="1043.94" width="8.15" height="8.09" fill="#f7fbd6"/><rect x="833.77" y="1043.94" width="8.15" height="8.09" fill="#fafbd6"/><rect x="841.32" y="1043.94" width="8.15" height="8.09" fill="#fcfbd5"/><rect x="848.88" y="1043.94" width="8.15" height="8.09" fill="#fef9d3"/><rect x="856.43" y="1043.94" width="8.15" height="8.09" fill="#fef6d0"/><rect x="863.98" y="1043.94" width="8.15" height="8.09" fill="#fef3cc"/><rect x="871.53" y="1043.94" width="8.15" height="8.09" fill="#fef1c9"/><rect x="879.08" y="1043.94" width="8.15" height="8.09" fill="#feeec6"/><rect x="886.64" y="1043.94" width="8.15" height="8.09" fill="#feebc3"/><rect x="894.19" y="1043.94" width="8.15" height="8.09" fill="#fee8c0"/><rect x="901.74" y="1043.94" width="8.15" height="8.09" fill="#fee5bd"/><rect x="909.29" y="1043.94" width="8.15" height="8.09" fill="#ffe3ba"/><rect x="916.84" y="1043.94" width="8.15" height="8.09" fill="#ffe0b7"/><rect x="924.40" y="1043.94" width="8.15" height="8.09" fill="#ffddb4"/><rect x="931.95" y="1043.94" width="8.15" height="8.09" fill="#ffdab1"/><rect x="939.50" y="1043.94" width="8.15" height="8.09" fill="#ffd9af"/><rect x="569.45" y="1051.43" width="8.15" height="8.09" fill="#8afbd6"/><rect x="577.00" y="1051.43" width="8.15" height="8.09" fill="#8cfbd6"/><rect x="584.55" y="1051.43" width="8.15" height="8.09" fill="#8ffbd6"/><rect x="592.10" y="1051.43" width="8.15" height="8.09" fill="#92fbd7"/><rect x="599.66" y="1051.43" width="8.15" height="8.09" fill="#96fbd8"/><rect x="607.21" y="1051.43" width="8.15" height="8.09" fill="#99fcd8"/><rect x="614.76" y="1051.43" width="8.15" height="8.09" fill="#9cfcd9"/><rect x="622.31" y="1051.43" width="8.15" height="8.09" fill="#a0fcd9"/><rect x="629.86" y="1051.43" width="8.15" height="8.09" fill="#a3fcda"/><rect x="637.42" y="1051.43" width="8.15" height="8.09" fill="#a6fcda"/><rect x="644.97" y="1051.43" width="8.15" height="8.09" fill="#aafddb"/><rect x="652.52" y="1051.43" width="8.15" height="8.09" fill="#adfddb"/><rect x="660.07" y="1051.43" width="8.15" height="8.09" fill="#b0fddc"/><rect x="667.62" y="1051.43" width="8.15" height="8.09" fill="#b4fddc"/><rect x="675.18" y="1051.43" width="8.15" height="8.09" fill="#b8fddd"/><rect x="682.73" y="1051.43" width="8.15" height="8.09" fill="#bcfedd"/><rect x="690.28" y="1051.43" width="8.15" height="8.09" fill="#c0fede"/><rect x="697.83" y="1051.43" width="8.15" height="8.09" fill="#c4fedf"/><rect x="705.39" y="1051.43" width="8.15" height="8.09" fill="#c7fedf"/><rect x="712.94" y="1051.43" width="8.15" height="8.09" fill="#cbfee0"/><rect x="720.49" y="1051.43" width="8.15" height="8.09" fill="#cffee0"/><rect x="728.04" y="1051.43" width="8.15" height="8.09" fill="#d3fee1"/><rect x="735.59" y="1051.43" width="8.15" height="8.09" fill="#d7ffe1"/><rect x="743.15" y="1051.43" width="8.15" height="8.09" fill="#dbffe2"/><rect x="750.70" y="1051.43" width="8.15" height="8.09" fill="#dfffe2"/><rect x="758.25" y="1051.43" width="8.15" height="8.09" fill="#e2ffe2"/><rect x="765.80" y="1051.43" width="8.15" height="8.09" fill="#e4fee1"/><rect x="773.35" y="1051.43" width="8.15" height="8.09" fill="#e7fee0"/><rect x="780.91" y="1051.43" width="8.15" height="8.09" fill="#e9fddf"/><rect x="788.46" y="1051.43" width="8.15" height="8.09" fill="#ecfdde"/><rect x="796.01" y="1051.43" width="8.15" height="8.09" fill="#eefcdd"/><rect x="803.56" y="1051.43" width="8.15" height="8.09" fill="#f0fcdc"/><rect x="811.11" y="1051.43" width="8.15" height="8.09" fill="#f3fbdb"/><rect x="818.67" y="1051.43" width="8.15" height="8.09" fill="#f5fbda"/><rect x="826.22" y="1051.43" width="8.15" height="8.09" fill="#f8fbd9"/><rect x="833.77" y="1051.43" width="8.15" height="8.09" fill="#fafad8"/><rect x="841.32" y="1051.43" width="8.15" height="8.09" fill="#fdfad7"/><rect x="848.88" y="1051.43" width="8.15" height="8.09" fill="#fef8d4"/><rect x="856.43" y="1051.43" width="8.15" height="8.09" fill="#fef5d1"/><rect x="863.98" y="1051.43" width="8.15" height="8.09" fill="#fef2ce"/><rect x="871.53" y="1051.43" width="8.15" height="8.09" fill="#feefcb"/><rect x="879.08" y="1051.43" width="8.15" height="8.09" fill="#feecc8"/><rect x="886.64" y="1051.43" width="8.15" height="8.09" fill="#fee9c4"/><rect x="894.19" y="1051.43" width="8.15" height="8.09" fill="#fee7c1"/><rect x="901.74" y="1051.43" width="8.15" height="8.09" fill="#ffe4be"/><rect x="909.29" y="1051.43" width="8.15" height="8.09" fill="#ffe1bb"/><rect x="916.84" y="1051.43" width="8.15" height="8.09" fill="#ffdeb7"/><rect x="924.40" y="1051.43" width="8.15" height="8.09" fill="#ffdbb4"/><rect x="931.95" y="1051.43" width="8.15" height="8.09" fill="#ffd8b1"/><rect x="939.50" y="1051.43" width="8.15" height="8.09" fill="#ffd7af"/><rect x="569.45" y="1058.91" width="8.15" height="8.09" fill="#8cfbd9"/><rect x="577.00" y="1058.91" width="8.15" height="8.09" fill="#8efbd9"/><rect x="584.55" y="1058.91" width="8.15" height="8.09" fill="#91fbda"/><rect x="592.10" y="1058.91" width="8.15" height="8.09" fill="#94fcda"/><rect x="599.66" y="1058.91" width="8.15" height="8.09" fill="#98fcdb"/><rect x="607.21" y="1058.91" width="8.15" height="8.09" fill="#9bfcdb"/><rect x="614.76" y="1058.91" width="8.15" height="8.09" fill="#9efcdc"/><rect x="622.31" y="1058.91" width="8.15" height="8.09" fill="#a2fcdd"/><rect x="629.86" y="1058.91" width="8.15" height="8.09" fill="#a5fddd"/><rect x="637.42" y="1058.91" width="8.15" height="8.09" fill="#a8fdde"/><rect x="644.97" y="1058.91" width="8.15" height="8.09" fill="#acfdde"/><rect x="652.52" y="1058.91" width="8.15" height="8.09" fill="#affddf"/><rect x="660.07" y="1058.91" width="8.15" height="8.09" fill="#b2fedf"/><rect x="667.62" y="1058.91" width="8.15" height="8.09" fill="#b6fee0"/><rect x="675.18" y="1058.91" width="8.15" height="8.09" fill="#bafee1"/><rect x="682.73" y="1058.91" width="8.15" height="8.09" fill="#befee1"/><rect x="690.28" y="1058.91" width="8.15" height="8.09" fill="#c2fee2"/><rect x="697.83" y="1058.91" width="8.15" height="8.09" fill="#c6fee2"/><rect x="705.39" y="1058.91" width="8.15" height="8.09" fill="#c9fee3"/><rect x="712.94" y="1058.91" width="8.15" height="8.09" fill="#cdfee4"/><rect x="720.49" y="1058.91" width="8.15" height="8.09" fill="#d1ffe4"/><rect x="728.04" y="1058.91" width="8.15" height="8.09" fill="#d5ffe5"/><rect x="735.59" y="1058.91" width="8.15" height="8.09" fill="#d9ffe5"/><rect x="743.15" y="1058.91" width="8.15" height="8.09" fill="#ddffe6"/><rect x="750.70" y="1058.91" width="8.15" height="8.09" fill="#e1ffe6"/><rect x="758.25" y="1058.91" width="8.15" height="8.09" fill="#e4ffe6"/><rect x="765.80" y="1058.91" width="8.15" height="8.09" fill="#e6fee5"/><rect x="773.35" y="1058.91" width="8.15" height="8.09" fill="#e9fee4"/><rect x="780.91" y="1058.91" width="8.15" height="8.09" fill="#ebfde2"/><rect x="788.46" y="1058.91" width="8.15" height="8.09" fill="#edfce1"/><rect x="796.01" y="1058.91" width="8.15" height="8.09" fill="#effce0"/><rect x="803.56" y="1058.91" width="8.15" height="8.09" fill="#f2fbdf"/><rect x="811.11" y="1058.91" width="8.15" height="8.09" fill="#f4fbdd"/><rect x="818.67" y="1058.91" width="8.15" height="8.09" fill="#f6fadc"/><rect x="826.22" y="1058.91" width="8.15" height="8.09" fill="#f9fadb"/><rect x="833.77" y="1058.91" width="8.15" height="8.09" fill="#fbf9da"/><rect x="841.32" y="1058.91" width="8.15" height="8.09" fill="#fdf9d9"/><rect x="848.88" y="1058.91" width="8.15" height="8.09" fill="#fef7d6"/><rect x="856.43" y="1058.91" width="8.15" height="8.09" fill="#fef4d3"/><rect x="863.98" y="1058.91" width="8.15" height="8.09" fill="#fef1cf"/><rect x="871.53" y="1058.91" width="8.15" height="8.09" fill="#feeecc"/><rect x="879.08" y="1058.91" width="8.15" height="8.09" fill="#ffebc9"/><rect x="886.64" y="1058.91" width="8.15" height="8.09" fill="#ffe8c5"/><rect x="894.19" y="1058.91" width="8.15" height="8.09" fill="#ffe5c2"/><rect x="901.74" y="1058.91" width="8.15" height="8.09" fill="#ffe2bf"/><rect x="909.29" y="1058.91" width="8.15" height="8.09" fill="#ffdfbb"/><rect x="916.84" y="1058.91" width="8.15" height="8.09" fill="#ffdcb8"/><rect x="924.40" y="1058.91" width="8.15" height="8.09" fill="#ffd9b5"/><rect x="931.95" y="1058.91" width="8.15" height="8.09" fill="#ffd6b1"/><rect x="939.50" y="1058.91" width="8.15" height="8.09" fill="#ffd5af"/><rect x="569.45" y="1066.40" width="8.15" height="8.09" fill="#8efbdc"/><rect x="577.00" y="1066.40" width="8.15" height="8.09" fill="#8ffcdc"/><rect x="584.55" y="1066.40" width="8.15" height="8.09" fill="#93fcdd"/><rect x="592.10" y="1066.40" width="8.15" height="8.09" fill="#96fcde"/><rect x="599.66" y="1066.40" width="8.15" height="8.09" fill="#99fcde"/><rect x="607.21" y="1066.40" width="8.15" height="8.09" fill="#9dfcdf"/><rect x="614.76" y="1066.40" width="8.15" height="8.09" fill="#a0fddf"/><rect x="622.31" y="1066.40" width="8.15" height="8.09" fill="#a3fde0"/><rect x="629.86" y="1066.40" width="8.15" height="8.09" fill="#a7fde1"/><rect x="637.42" y="1066.40" width="8.15" height="8.09" fill="#aafde1"/><rect x="644.97" y="1066.40" width="8.15" height="8.09" fill="#adfee2"/><rect x="652.52" y="1066.40" width="8.15" height="8.09" fill="#b1fee2"/><rect x="660.07" y="1066.40" width="8.15" height="8.09" fill="#b4fee3"/><rect x="667.62" y="1066.40" width="8.15" height="8.09" fill="#b8fee4"/><rect x="675.18" y="1066.40" width="8.15" height="8.09" fill="#bcfee4"/><rect x="682.73" y="1066.40" width="8.15" height="8.09" fill="#c0fee5"/><rect x="690.28" y="1066.40" width="8.15" height="8.09" fill="#c4fee6"/><rect x="697.83" y="1066.40" width="8.15" height="8.09" fill="#c8ffe6"/><rect x="705.39" y="1066.40" width="8.15" height="8.09" fill="#cbffe7"/><rect x="712.94" y="1066.40" width="8.15" height="8.09" fill="#cfffe7"/><rect x="720.49" y="1066.40" width="8.15" height="8.09" fill="#d3ffe8"/><rect x="728.04" y="1066.40" width="8.15" height="8.09" fill="#d7ffe9"/><rect x="735.59" y="1066.40" width="8.15" height="8.09" fill="#dbffe9"/><rect x="743.15" y="1066.40" width="8.15" height="8.09" fill="#dfffea"/><rect x="750.70" y="1066.40" width="8.15" height="8.09" fill="#e3ffeb"/><rect x="758.25" y="1066.40" width="8.15" height="8.09" fill="#e6ffea"/><rect x="765.80" y="1066.40" width="8.15" height="8.09" fill="#e8fee9"/><rect x="773.35" y="1066.40" width="8.15" height="8.09" fill="#eafde7"/><rect x="780.91" y="1066.40" width="8.15" height="8.09" fill="#edfde6"/><rect x="788.46" y="1066.40" width="8.15" height="8.09" fill="#effce4"/><rect x="796.01" y="1066.40" width="8.15" height="8.09" fill="#f1fbe3"/><rect x="803.56" y="1066.40" width="8.15" height="8.09" fill="#f3fbe2"/><rect x="811.11" y="1066.40" width="8.15" height="8.09" fill="#f5fae0"/><rect x="818.67" y="1066.40" width="8.15" height="8.09" fill="#f7fadf"/><rect x="826.22" y="1066.40" width="8.15" height="8.09" fill="#f9f9dd"/><rect x="833.77" y="1066.40" width="8.15" height="8.09" fill="#fbf8dc"/><rect x="841.32" y="1066.40" width="8.15" height="8.09" fill="#fef8da"/><rect x="848.88" y="1066.40" width="8.15" height="8.09" fill="#fff6d8"/><rect x="856.43" y="1066.40" width="8.15" height="8.09" fill="#fff3d4"/><rect x="863.98" y="1066.40" width="8.15" height="8.09" fill="#fff0d1"/><rect x="871.53" y="1066.40" width="8.15" height="8.09" fill="#ffedcd"/><rect x="879.08" y="1066.40" width="8.15" height="8.09" fill="#ffeaca"/><rect x="886.64" y="1066.40" width="8.15" height="8.09" fill="#ffe6c6"/><rect x="894.19" y="1066.40" width="8.15" height="8.09" fill="#ffe3c3"/><rect x="901.74" y="1066.40" width="8.15" height="8.09" fill="#ffe0bf"/><rect x="909.29" y="1066.40" width="8.15" height="8.09" fill="#ffddbc"/><rect x="916.84" y="1066.40" width="8.15" height="8.09" fill="#ffdab8"/><rect x="924.40" y="1066.40" width="8.15" height="8.09" fill="#ffd7b5"/><rect x="931.95" y="1066.40" width="8.15" height="8.09" fill="#ffd4b1"/><rect x="939.50" y="1066.40" width="8.15" height="8.09" fill="#ffd3b0"/><rect x="569.45" y="1073.89" width="8.15" height="8.09" fill="#90fcdf"/><rect x="577.00" y="1073.89" width="8.15" height="8.09" fill="#91fce0"/><rect x="584.55" y="1073.89" width="8.15" height="8.09" fill="#95fce0"/><rect x="592.10" y="1073.89" width="8.15" height="8.09" fill="#98fde1"/><rect x="599.66" y="1073.89" width="8.15" height="8.09" fill="#9bfde1"/><rect x="607.21" y="1073.89" width="8.15" height="8.09" fill="#9ffde2"/><rect x="614.76" y="1073.89" width="8.15" height="8.09" fill="#a2fde3"/><rect x="622.31" y="1073.89" width="8.15" height="8.09" fill="#a5fde3"/><rect x="629.86" y="1073.89" width="8.15" height="8.09" fill="#a9fee4"/><rect x="637.42" y="1073.89" width="8.15" height="8.09" fill="#acfee5"/><rect x="644.97" y="1073.89" width="8.15" height="8.09" fill="#affee5"/><rect x="652.52" y="1073.89" width="8.15" height="8.09" fill="#b3fee6"/><rect x="660.07" y="1073.89" width="8.15" height="8.09" fill="#b6ffe7"/><rect x="667.62" y="1073.89" width="8.15" height="8.09" fill="#baffe7"/><rect x="675.18" y="1073.89" width="8.15" height="8.09" fill="#beffe8"/><rect x="682.73" y="1073.89" width="8.15" height="8.09" fill="#c2ffe9"/><rect x="690.28" y="1073.89" width="8.15" height="8.09" fill="#c6ffe9"/><rect x="697.83" y="1073.89" width="8.15" height="8.09" fill="#caffea"/><rect x="705.39" y="1073.89" width="8.15" height="8.09" fill="#cdffeb"/><rect x="712.94" y="1073.89" width="8.15" height="8.09" fill="#d1ffeb"/><rect x="720.49" y="1073.89" width="8.15" height="8.09" fill="#d5ffec"/><rect x="728.04" y="1073.89" width="8.15" height="8.09" fill="#d9ffed"/><rect x="735.59" y="1073.89" width="8.15" height="8.09" fill="#ddffed"/><rect x="743.15" y="1073.89" width="8.15" height="8.09" fill="#e1ffee"/><rect x="750.70" y="1073.89" width="8.15" height="8.09" fill="#e5ffef"/><rect x="758.25" y="1073.89" width="8.15" height="8.09" fill="#e8ffee"/><rect x="765.80" y="1073.89" width="8.15" height="8.09" fill="#eafeed"/><rect x="773.35" y="1073.89" width="8.15" height="8.09" fill="#ecfdeb"/><rect x="780.91" y="1073.89" width="8.15" height="8.09" fill="#eefce9"/><rect x="788.46" y="1073.89" width="8.15" height="8.09" fill="#f0fce8"/><rect x="796.01" y="1073.89" width="8.15" height="8.09" fill="#f2fbe6"/><rect x="803.56" y="1073.89" width="8.15" height="8.09" fill="#f4fae4"/><rect x="811.11" y="1073.89" width="8.15" height="8.09" fill="#f6fae3"/><rect x="818.67" y="1073.89" width="8.15" height="8.09" fill="#f8f9e1"/><rect x="826.22" y="1073.89" width="8.15" height="8.09" fill="#faf8e0"/><rect x="833.77" y="1073.89" width="8.15" height="8.09" fill="#fcf7de"/><rect x="841.32" y="1073.89" width="8.15" height="8.09" fill="#fef7dc"/><rect x="848.88" y="1073.89" width="8.15" height="8.09" fill="#fff5da"/><rect x="856.43" y="1073.89" width="8.15" height="8.09" fill="#fff2d6"/><rect x="863.98" y="1073.89" width="8.15" height="8.09" fill="#ffeed2"/><rect x="871.53" y="1073.89" width="8.15" height="8.09" fill="#ffebcf"/><rect x="879.08" y="1073.89" width="8.15" height="8.09" fill="#ffe8cb"/><rect x="886.64" y="1073.89" width="8.15" height="8.09" fill="#ffe5c8"/><rect x="894.19" y="1073.89" width="8.15" height="8.09" fill="#ffe2c4"/><rect x="901.74" y="1073.89" width="8.15" height="8.09" fill="#ffdfc0"/><rect x="909.29" y="1073.89" width="8.15" height="8.09" fill="#ffdcbd"/><rect x="916.84" y="1073.89" width="8.15" height="8.09" fill="#ffd8b9"/><rect x="924.40" y="1073.89" width="8.15" height="8.09" fill="#ffd5b5"/><rect x="931.95" y="1073.89" width="8.15" height="8.09" fill="#ffd2b2"/><rect x="939.50" y="1073.89" width="8.15" height="8.09" fill="#ffd1b0"/><rect x="569.45" y="1081.37" width="8.15" height="8.09" fill="#91fce2"/><rect x="577.00" y="1081.37" width="8.15" height="8.09" fill="#93fce3"/><rect x="584.55" y="1081.37" width="8.15" height="8.09" fill="#96fde3"/><rect x="592.10" y="1081.37" width="8.15" height="8.09" fill="#9afde4"/><rect x="599.66" y="1081.37" width="8.15" height="8.09" fill="#9dfde5"/><rect x="607.21" y="1081.37" width="8.15" height="8.09" fill="#a0fde5"/><rect x="614.76" y="1081.37" width="8.15" height="8.09" fill="#a4fee6"/><rect x="622.31" y="1081.37" width="8.15" height="8.09" fill="#a7fee7"/><rect x="629.86" y="1081.37" width="8.15" height="8.09" fill="#aafee7"/><rect x="637.42" y="1081.37" width="8.15" height="8.09" fill="#aefee8"/><rect x="644.97" y="1081.37" width="8.15" height="8.09" fill="#b1fee8"/><rect x="652.52" y="1081.37" width="8.15" height="8.09" fill="#b4ffe9"/><rect x="660.07" y="1081.37" width="8.15" height="8.09" fill="#b8ffea"/><rect x="667.62" y="1081.37" width="8.15" height="8.09" fill="#bbffea"/><rect x="675.18" y="1081.37" width="8.15" height="8.09" fill="#bfffeb"/><rect x="682.73" y="1081.37" width="8.15" height="8.09" fill="#c3ffeb"/><rect x="690.28" y="1081.37" width="8.15" height="8.09" fill="#c8ffec"/><rect x="697.83" y="1081.37" width="8.15" height="8.09" fill="#ccffed"/><rect x="705.39" y="1081.37" width="8.15" height="8.09" fill="#d0ffed"/><rect x="712.94" y="1081.37" width="8.15" height="8.09" fill="#d4ffee"/><rect x="720.49" y="1081.37" width="8.15" height="8.09" fill="#d8ffef"/><rect x="728.04" y="1081.37" width="8.15" height="8.09" fill="#dcffef"/><rect x="735.59" y="1081.37" width="8.15" height="8.09" fill="#e0fff0"/><rect x="743.15" y="1081.37" width="8.15" height="8.09" fill="#e4fff0"/><rect x="750.70" y="1081.37" width="8.15" height="8.09" fill="#e8fff1"/><rect x="758.25" y="1081.37" width="8.15" height="8.09" fill="#ebfff0"/><rect x="765.80" y="1081.37" width="8.15" height="8.09" fill="#edfeef"/><rect x="773.35" y="1081.37" width="8.15" height="8.09" fill="#eefded"/><rect x="780.91" y="1081.37" width="8.15" height="8.09" fill="#f0fceb"/><rect x="788.46" y="1081.37" width="8.15" height="8.09" fill="#f2fbea"/><rect x="796.01" y="1081.37" width="8.15" height="8.09" fill="#f4fae8"/><rect x="803.56" y="1081.37" width="8.15" height="8.09" fill="#f5f9e6"/><rect x="811.11" y="1081.37" width="8.15" height="8.09" fill="#f7f9e4"/><rect x="818.67" y="1081.37" width="8.15" height="8.09" fill="#f9f8e3"/><rect x="826.22" y="1081.37" width="8.15" height="8.09" fill="#fbf7e1"/><rect x="833.77" y="1081.37" width="8.15" height="8.09" fill="#fcf6df"/><rect x="841.32" y="1081.37" width="8.15" height="8.09" fill="#fef5de"/><rect x="848.88" y="1081.37" width="8.15" height="8.09" fill="#fff3db"/><rect x="856.43" y="1081.37" width="8.15" height="8.09" fill="#fff0d7"/><rect x="863.98" y="1081.37" width="8.15" height="8.09" fill="#ffedd3"/><rect x="871.53" y="1081.37" width="8.15" height="8.09" fill="#ffead0"/><rect x="879.08" y="1081.37" width="8.15" height="8.09" fill="#ffe6cc"/><rect x="886.64" y="1081.37" width="8.15" height="8.09" fill="#ffe3c8"/><rect x="894.19" y="1081.37" width="8.15" height="8.09" fill="#ffe0c5"/><rect x="901.74" y="1081.37" width="8.15" height="8.09" fill="#ffddc1"/><rect x="909.29" y="1081.37" width="8.15" height="8.09" fill="#ffdabd"/><rect x="916.84" y="1081.37" width="8.15" height="8.09" fill="#ffd6ba"/><rect x="924.40" y="1081.37" width="8.15" height="8.09" fill="#ffd3b6"/><rect x="931.95" y="1081.37" width="8.15" height="8.09" fill="#ffd0b2"/><rect x="939.50" y="1081.37" width="8.15" height="8.09" fill="#ffceb0"/><rect x="569.45" y="1088.86" width="8.15" height="8.09" fill="#93fde6"/><rect x="577.00" y="1088.86" width="8.15" height="8.09" fill="#95fde6"/><rect x="584.55" y="1088.86" width="8.15" height="8.09" fill="#98fde6"/><rect x="592.10" y="1088.86" width="8.15" height="8.09" fill="#9cfde7"/><rect x="599.66" y="1088.86" width="8.15" height="8.09" fill="#9ffde8"/><rect x="607.21" y="1088.86" width="8.15" height="8.09" fill="#a2fee8"/><rect x="614.76" y="1088.86" width="8.15" height="8.09" fill="#a6fee9"/><rect x="622.31" y="1088.86" width="8.15" height="8.09" fill="#a9fee9"/><rect x="629.86" y="1088.86" width="8.15" height="8.09" fill="#acfeea"/><rect x="637.42" y="1088.86" width="8.15" height="8.09" fill="#b0feeb"/><rect x="644.97" y="1088.86" width="8.15" height="8.09" fill="#b3feeb"/><rect x="652.52" y="1088.86" width="8.15" height="8.09" fill="#b6ffec"/><rect x="660.07" y="1088.86" width="8.15" height="8.09" fill="#baffec"/><rect x="667.62" y="1088.86" width="8.15" height="8.09" fill="#bdffed"/><rect x="675.18" y="1088.86" width="8.15" height="8.09" fill="#c1ffed"/><rect x="682.73" y="1088.86" width="8.15" height="8.09" fill="#c5ffee"/><rect x="690.28" y="1088.86" width="8.15" height="8.09" fill="#caffee"/><rect x="697.83" y="1088.86" width="8.15" height="8.09" fill="#ceffef"/><rect x="705.39" y="1088.86" width="8.15" height="8.09" fill="#d2fff0"/><rect x="712.94" y="1088.86" width="8.15" height="8.09" fill="#d6fff0"/><rect x="720.49" y="1088.86" width="8.15" height="8.09" fill="#dafff1"/><rect x="728.04" y="1088.86" width="8.15" height="8.09" fill="#defff1"/><rect x="735.59" y="1088.86" width="8.15" height="8.09" fill="#e2fff2"/><rect x="743.15" y="1088.86" width="8.15" height="8.09" fill="#e6fff2"/><rect x="750.70" y="1088.86" width="8.15" height="8.09" fill="#ebfff3"/><rect x="758.25" y="1088.86" width="8.15" height="8.09" fill="#edfff2"/><rect x="765.80" y="1088.86" width="8.15" height="8.09" fill="#effef0"/><rect x="773.35" y="1088.86" width="8.15" height="8.09" fill="#f0fdef"/><rect x="780.91" y="1088.86" width="8.15" height="8.09" fill="#f2fced"/><rect x="788.46" y="1088.86" width="8.15" height="8.09" fill="#f4fbeb"/><rect x="796.01" y="1088.86" width="8.15" height="8.09" fill="#f5fae9"/><rect x="803.56" y="1088.86" width="8.15" height="8.09" fill="#f7f9e7"/><rect x="811.11" y="1088.86" width="8.15" height="8.09" fill="#f8f8e6"/><rect x="818.67" y="1088.86" width="8.15" height="8.09" fill="#faf7e4"/><rect x="826.22" y="1088.86" width="8.15" height="8.09" fill="#fbf6e2"/><rect x="833.77" y="1088.86" width="8.15" height="8.09" fill="#fdf5e0"/><rect x="841.32" y="1088.86" width="8.15" height="8.09" fill="#fef4de"/><rect x="848.88" y="1088.86" width="8.15" height="8.09" fill="#fff2dc"/><rect x="856.43" y="1088.86" width="8.15" height="8.09" fill="#ffeed8"/><rect x="863.98" y="1088.86" width="8.15" height="8.09" fill="#ffebd4"/><rect x="871.53" y="1088.86" width="8.15" height="8.09" fill="#ffe8d1"/><rect x="879.08" y="1088.86" width="8.15" height="8.09" fill="#ffe4cd"/><rect x="886.64" y="1088.86" width="8.15" height="8.09" fill="#ffe1c9"/><rect x="894.19" y="1088.86" width="8.15" height="8.09" fill="#ffdec5"/><rect x="901.74" y="1088.86" width="8.15" height="8.09" fill="#ffdbc2"/><rect x="909.29" y="1088.86" width="8.15" height="8.09" fill="#ffd7be"/><rect x="916.84" y="1088.86" width="8.15" height="8.09" fill="#ffd4ba"/><rect x="924.40" y="1088.86" width="8.15" height="8.09" fill="#ffd1b6"/><rect x="931.95" y="1088.86" width="8.15" height="8.09" fill="#ffceb3"/><rect x="939.50" y="1088.86" width="8.15" height="8.09" fill="#ffccb1"/><rect x="569.45" y="1096.34" width="8.15" height="8.09" fill="#95fde9"/><rect x="577.00" y="1096.34" width="8.15" height="8.09" fill="#97fde9"/><rect x="584.55" y="1096.34" width="8.15" height="8.09" fill="#9afdea"/><rect x="592.10" y="1096.34" width="8.15" height="8.09" fill="#9dfdea"/><rect x="599.66" y="1096.34" width="8.15" height="8.09" fill="#a1feeb"/><rect x="607.21" y="1096.34" width="8.15" height="8.09" fill="#a4feeb"/><rect x="614.76" y="1096.34" width="8.15" height="8.09" fill="#a7feec"/><rect x="622.31" y="1096.34" width="8.15" height="8.09" fill="#abfeec"/><rect x="629.86" y="1096.34" width="8.15" height="8.09" fill="#aefeed"/><rect x="637.42" y="1096.34" width="8.15" height="8.09" fill="#b1feed"/><rect x="644.97" y="1096.34" width="8.15" height="8.09" fill="#b5ffee"/><rect x="652.52" y="1096.34" width="8.15" height="8.09" fill="#b8ffee"/><rect x="660.07" y="1096.34" width="8.15" height="8.09" fill="#bbffef"/><rect x="667.62" y="1096.34" width="8.15" height="8.09" fill="#bfffef"/><rect x="675.18" y="1096.34" width="8.15" height="8.09" fill="#c3fff0"/><rect x="682.73" y="1096.34" width="8.15" height="8.09" fill="#c7fff0"/><rect x="690.28" y="1096.34" width="8.15" height="8.09" fill="#ccfff1"/><rect x="697.83" y="1096.34" width="8.15" height="8.09" fill="#d0fff1"/><rect x="705.39" y="1096.34" width="8.15" height="8.09" fill="#d4fff2"/><rect x="712.94" y="1096.34" width="8.15" height="8.09" fill="#d8fff2"/><rect x="720.49" y="1096.34" width="8.15" height="8.09" fill="#dcfff3"/><rect x="728.04" y="1096.34" width="8.15" height="8.09" fill="#e1fff3"/><rect x="735.59" y="1096.34" width="8.15" height="8.09" fill="#e5fff4"/><rect x="743.15" y="1096.34" width="8.15" height="8.09" fill="#e9fff4"/><rect x="750.70" y="1096.34" width="8.15" height="8.09" fill="#edfff4"/><rect x="758.25" y="1096.34" width="8.15" height="8.09" fill="#f0fef4"/><rect x="765.80" y="1096.34" width="8.15" height="8.09" fill="#f1fdf2"/><rect x="773.35" y="1096.34" width="8.15" height="8.09" fill="#f3fcf0"/><rect x="780.91" y="1096.34" width="8.15" height="8.09" fill="#f4fbee"/><rect x="788.46" y="1096.34" width="8.15" height="8.09" fill="#f5faec"/><rect x="796.01" y="1096.34" width="8.15" height="8.09" fill="#f6f9eb"/><rect x="803.56" y="1096.34" width="8.15" height="8.09" fill="#f8f8e9"/><rect x="811.11" y="1096.34" width="8.15" height="8.09" fill="#f9f7e7"/><rect x="818.67" y="1096.34" width="8.15" height="8.09" fill="#faf6e5"/><rect x="826.22" y="1096.34" width="8.15" height="8.09" fill="#fcf4e3"/><rect x="833.77" y="1096.34" width="8.15" height="8.09" fill="#fdf3e1"/><rect x="841.32" y="1096.34" width="8.15" height="8.09" fill="#fef2df"/><rect x="848.88" y="1096.34" width="8.15" height="8.09" fill="#fff0dd"/><rect x="856.43" y="1096.34" width="8.15" height="8.09" fill="#ffedd9"/><rect x="863.98" y="1096.34" width="8.15" height="8.09" fill="#ffe9d5"/><rect x="871.53" y="1096.34" width="8.15" height="8.09" fill="#ffe6d1"/><rect x="879.08" y="1096.34" width="8.15" height="8.09" fill="#ffe3ce"/><rect x="886.64" y="1096.34" width="8.15" height="8.09" fill="#ffdfca"/><rect x="894.19" y="1096.34" width="8.15" height="8.09" fill="#ffdcc6"/><rect x="901.74" y="1096.34" width="8.15" height="8.09" fill="#ffd9c2"/><rect x="909.29" y="1096.34" width="8.15" height="8.09" fill="#ffd5be"/><rect x="916.84" y="1096.34" width="8.15" height="8.09" fill="#ffd2bb"/><rect x="924.40" y="1096.34" width="8.15" height="8.09" fill="#ffcfb7"/><rect x="931.95" y="1096.34" width="8.15" height="8.09" fill="#ffcbb3"/><rect x="939.50" y="1096.34" width="8.15" height="8.09" fill="#ffcab1"/><rect x="569.45" y="1103.83" width="8.15" height="8.09" fill="#97fdec"/><rect x="577.00" y="1103.83" width="8.15" height="8.09" fill="#99fdec"/><rect x="584.55" y="1103.83" width="8.15" height="8.09" fill="#9cfeed"/><rect x="592.10" y="1103.83" width="8.15" height="8.09" fill="#9ffeed"/><rect x="599.66" y="1103.83" width="8.15" height="8.09" fill="#a3feee"/><rect x="607.21" y="1103.83" width="8.15" height="8.09" fill="#a6feee"/><rect x="614.76" y="1103.83" width="8.15" height="8.09" fill="#a9feef"/><rect x="622.31" y="1103.83" width="8.15" height="8.09" fill="#adfeef"/><rect x="629.86" y="1103.83" width="8.15" height="8.09" fill="#b0fef0"/><rect x="637.42" y="1103.83" width="8.15" height="8.09" fill="#b3fef0"/><rect x="644.97" y="1103.83" width="8.15" height="8.09" fill="#b7fff1"/><rect x="652.52" y="1103.83" width="8.15" height="8.09" fill="#bafff1"/><rect x="660.07" y="1103.83" width="8.15" height="8.09" fill="#bdfff2"/><rect x="667.62" y="1103.83" width="8.15" height="8.09" fill="#c1fff2"/><rect x="675.18" y="1103.83" width="8.15" height="8.09" fill="#c5fff2"/><rect x="682.73" y="1103.83" width="8.15" height="8.09" fill="#c9fff3"/><rect x="690.28" y="1103.83" width="8.15" height="8.09" fill="#cefff3"/><rect x="697.83" y="1103.83" width="8.15" height="8.09" fill="#d2fff4"/><rect x="705.39" y="1103.83" width="8.15" height="8.09" fill="#d6fff4"/><rect x="712.94" y="1103.83" width="8.15" height="8.09" fill="#dafff4"/><rect x="720.49" y="1103.83" width="8.15" height="8.09" fill="#dffff5"/><rect x="728.04" y="1103.83" width="8.15" height="8.09" fill="#e3fff5"/><rect x="735.59" y="1103.83" width="8.15" height="8.09" fill="#e7fff5"/><rect x="743.15" y="1103.83" width="8.15" height="8.09" fill="#ebfff6"/><rect x="750.70" y="1103.83" width="8.15" height="8.09" fill="#f0fff6"/><rect x="758.25" y="1103.83" width="8.15" height="8.09" fill="#f2fef5"/><rect x="765.80" y="1103.83" width="8.15" height="8.09" fill="#f4fdf4"/><rect x="773.35" y="1103.83" width="8.15" height="8.09" fill="#f5fcf2"/><rect x="780.91" y="1103.83" width="8.15" height="8.09" fill="#f6fbf0"/><rect x="788.46" y="1103.83" width="8.15" height="8.09" fill="#f7f9ee"/><rect x="796.01" y="1103.83" width="8.15" height="8.09" fill="#f8f8ec"/><rect x="803.56" y="1103.83" width="8.15" height="8.09" fill="#f9f7ea"/><rect x="811.11" y="1103.83" width="8.15" height="8.09" fill="#faf6e8"/><rect x="818.67" y="1103.83" width="8.15" height="8.09" fill="#fbf4e6"/><rect x="826.22" y="1103.83" width="8.15" height="8.09" fill="#fcf3e4"/><rect x="833.77" y="1103.83" width="8.15" height="8.09" fill="#fdf2e2"/><rect x="841.32" y="1103.83" width="8.15" height="8.09" fill="#fef1e0"/><rect x="848.88" y="1103.83" width="8.15" height="8.09" fill="#ffeede"/><rect x="856.43" y="1103.83" width="8.15" height="8.09" fill="#ffebda"/><rect x="863.98" y="1103.83" width="8.15" height="8.09" fill="#ffe8d6"/><rect x="871.53" y="1103.83" width="8.15" height="8.09" fill="#ffe4d2"/><rect x="879.08" y="1103.83" width="8.15" height="8.09" fill="#ffe1ce"/><rect x="886.64" y="1103.83" width="8.15" height="8.09" fill="#ffddca"/><rect x="894.19" y="1103.83" width="8.15" height="8.09" fill="#ffdac7"/><rect x="901.74" y="1103.83" width="8.15" height="8.09" fill="#ffd7c3"/><rect x="909.29" y="1103.83" width="8.15" height="8.09" fill="#ffd3bf"/><rect x="916.84" y="1103.83" width="8.15" height="8.09" fill="#ffd0bb"/><rect x="924.40" y="1103.83" width="8.15" height="8.09" fill="#ffccb7"/><rect x="931.95" y="1103.83" width="8.15" height="8.09" fill="#ffc9b4"/><rect x="939.50" y="1103.83" width="8.15" height="8.09" fill="#ffc7b2"/><rect x="569.45" y="1111.31" width="8.15" height="8.09" fill="#99feef"/><rect x="577.00" y="1111.31" width="8.15" height="8.09" fill="#9afeef"/><rect x="584.55" y="1111.31" width="8.15" height="8.09" fill="#9efef0"/><rect x="592.10" y="1111.31" width="8.15" height="8.09" fill="#a1fef0"/><rect x="599.66" y="1111.31" width="8.15" height="8.09" fill="#a4fef1"/><rect x="607.21" y="1111.31" width="8.15" height="8.09" fill="#a8fef1"/><rect x="614.76" y="1111.31" width="8.15" height="8.09" fill="#abfef2"/><rect x="622.31" y="1111.31" width="8.15" height="8.09" fill="#aefef2"/><rect x="629.86" y="1111.31" width="8.15" height="8.09" fill="#b2fef3"/><rect x="637.42" y="1111.31" width="8.15" height="8.09" fill="#b5fff3"/><rect x="644.97" y="1111.31" width="8.15" height="8.09" fill="#b8fff3"/><rect x="652.52" y="1111.31" width="8.15" height="8.09" fill="#bcfff4"/><rect x="660.07" y="1111.31" width="8.15" height="8.09" fill="#bffff4"/><rect x="667.62" y="1111.31" width="8.15" height="8.09" fill="#c3fff5"/><rect x="675.18" y="1111.31" width="8.15" height="8.09" fill="#c7fff5"/><rect x="682.73" y="1111.31" width="8.15" height="8.09" fill="#cbfff5"/><rect x="690.28" y="1111.31" width="8.15" height="8.09" fill="#d0fff6"/><rect x="697.83" y="1111.31" width="8.15" height="8.09" fill="#d4fff6"/><rect x="705.39" y="1111.31" width="8.15" height="8.09" fill="#d8fff6"/><rect x="712.94" y="1111.31" width="8.15" height="8.09" fill="#ddfff6"/><rect x="720.49" y="1111.31" width="8.15" height="8.09" fill="#e1fff7"/><rect x="728.04" y="1111.31" width="8.15" height="8.09" fill="#e5fff7"/><rect x="735.59" y="1111.31" width="8.15" height="8.09" fill="#eafff7"/><rect x="743.15" y="1111.31" width="8.15" height="8.09" fill="#eefff8"/><rect x="750.70" y="1111.31" width="8.15" height="8.09" fill="#f2fff8"/><rect x="758.25" y="1111.31" width="8.15" height="8.09" fill="#f5fef7"/><rect x="765.80" y="1111.31" width="8.15" height="8.09" fill="#f6fdf5"/><rect x="773.35" y="1111.31" width="8.15" height="8.09" fill="#f7fcf3"/><rect x="780.91" y="1111.31" width="8.15" height="8.09" fill="#f8faf1"/><rect x="788.46" y="1111.31" width="8.15" height="8.09" fill="#f8f9ef"/><rect x="796.01" y="1111.31" width="8.15" height="8.09" fill="#f9f7ed"/><rect x="803.56" y="1111.31" width="8.15" height="8.09" fill="#faf6eb"/><rect x="811.11" y="1111.31" width="8.15" height="8.09" fill="#fbf5e9"/><rect x="818.67" y="1111.31" width="8.15" height="8.09" fill="#fcf3e7"/><rect x="826.22" y="1111.31" width="8.15" height="8.09" fill="#fdf2e5"/><rect x="833.77" y="1111.31" width="8.15" height="8.09" fill="#fef0e3"/><rect x="841.32" y="1111.31" width="8.15" height="8.09" fill="#ffefe1"/><rect x="848.88" y="1111.31" width="8.15" height="8.09" fill="#ffedde"/><rect x="856.43" y="1111.31" width="8.15" height="8.09" fill="#ffe9db"/><rect x="863.98" y="1111.31" width="8.15" height="8.09" fill="#ffe6d7"/><rect x="871.53" y="1111.31" width="8.15" height="8.09" fill="#ffe2d3"/><rect x="879.08" y="1111.31" width="8.15" height="8.09" fill="#ffdfcf"/><rect x="886.64" y="1111.31" width="8.15" height="8.09" fill="#ffdbcb"/><rect x="894.19" y="1111.31" width="8.15" height="8.09" fill="#ffd8c7"/><rect x="901.74" y="1111.31" width="8.15" height="8.09" fill="#ffd5c3"/><rect x="909.29" y="1111.31" width="8.15" height="8.09" fill="#ffd1c0"/><rect x="916.84" y="1111.31" width="8.15" height="8.09" fill="#ffcebc"/><rect x="924.40" y="1111.31" width="8.15" height="8.09" fill="#ffcab8"/><rect x="931.95" y="1111.31" width="8.15" height="8.09" fill="#ffc7b4"/><rect x="939.50" y="1111.31" width="8.15" height="8.09" fill="#ffc5b2"/><rect x="569.45" y="1118.80" width="8.15" height="8.09" fill="#9bfef2"/><rect x="577.00" y="1118.80" width="8.15" height="8.09" fill="#9cfef3"/><rect x="584.55" y="1118.80" width="8.15" height="8.09" fill="#a0fef3"/><rect x="592.10" y="1118.80" width="8.15" height="8.09" fill="#a3fef3"/><rect x="599.66" y="1118.80" width="8.15" height="8.09" fill="#a6fef4"/><rect x="607.21" y="1118.80" width="8.15" height="8.09" fill="#aafef4"/><rect x="614.76" y="1118.80" width="8.15" height="8.09" fill="#adfef5"/><rect x="622.31" y="1118.80" width="8.15" height="8.09" fill="#b0fff5"/><rect x="629.86" y="1118.80" width="8.15" height="8.09" fill="#b4fff5"/><rect x="637.42" y="1118.80" width="8.15" height="8.09" fill="#b7fff6"/><rect x="644.97" y="1118.80" width="8.15" height="8.09" fill="#bafff6"/><rect x="652.52" y="1118.80" width="8.15" height="8.09" fill="#befff7"/><rect x="660.07" y="1118.80" width="8.15" height="8.09" fill="#c1fff7"/><rect x="667.62" y="1118.80" width="8.15" height="8.09" fill="#c5fff7"/><rect x="675.18" y="1118.80" width="8.15" height="8.09" fill="#c9fff7"/><rect x="682.73" y="1118.80" width="8.15" height="8.09" fill="#cdfff8"/><rect x="690.28" y="1118.80" width="8.15" height="8.09" fill="#d2fff8"/><rect x="697.83" y="1118.80" width="8.15" height="8.09" fill="#d6fff8"/><rect x="705.39" y="1118.80" width="8.15" height="8.09" fill="#dbfff8"/><rect x="712.94" y="1118.80" width="8.15" height="8.09" fill="#dffff9"/><rect x="720.49" y="1118.80" width="8.15" height="8.09" fill="#e3fff9"/><rect x="728.04" y="1118.80" width="8.15" height="8.09" fill="#e8fff9"/><rect x="735.59" y="1118.80" width="8.15" height="8.09" fill="#ecfff9"/><rect x="743.15" y="1118.80" width="8.15" height="8.09" fill="#f1fffa"/><rect x="750.70" y="1118.80" width="8.15" height="8.09" fill="#f5fffa"/><rect x="758.25" y="1118.80" width="8.15" height="8.09" fill="#f7fef9"/><rect x="765.80" y="1118.80" width="8.15" height="8.09" fill="#f8fdf7"/><rect x="773.35" y="1118.80" width="8.15" height="8.09" fill="#f9fbf5"/><rect x="780.91" y="1118.80" width="8.15" height="8.09" fill="#f9faf3"/><rect x="788.46" y="1118.80" width="8.15" height="8.09" fill="#faf8f1"/><rect x="796.01" y="1118.80" width="8.15" height="8.09" fill="#fbf7ef"/><rect x="803.56" y="1118.80" width="8.15" height="8.09" fill="#fbf5ed"/><rect x="811.11" y="1118.80" width="8.15" height="8.09" fill="#fcf4ea"/><rect x="818.67" y="1118.80" width="8.15" height="8.09" fill="#fdf2e8"/><rect x="826.22" y="1118.80" width="8.15" height="8.09" fill="#fdf1e6"/><rect x="833.77" y="1118.80" width="8.15" height="8.09" fill="#feefe4"/><rect x="841.32" y="1118.80" width="8.15" height="8.09" fill="#ffeee2"/><rect x="848.88" y="1118.80" width="8.15" height="8.09" fill="#ffebdf"/><rect x="856.43" y="1118.80" width="8.15" height="8.09" fill="#ffe8db"/><rect x="863.98" y="1118.80" width="8.15" height="8.09" fill="#ffe4d8"/><rect x="871.53" y="1118.80" width="8.15" height="8.09" fill="#ffe1d4"/><rect x="879.08" y="1118.80" width="8.15" height="8.09" fill="#ffddd0"/><rect x="886.64" y="1118.80" width="8.15" height="8.09" fill="#ffdacc"/><rect x="894.19" y="1118.80" width="8.15" height="8.09" fill="#ffd6c8"/><rect x="901.74" y="1118.80" width="8.15" height="8.09" fill="#ffd3c4"/><rect x="909.29" y="1118.80" width="8.15" height="8.09" fill="#ffcfc0"/><rect x="916.84" y="1118.80" width="8.15" height="8.09" fill="#ffccbc"/><rect x="924.40" y="1118.80" width="8.15" height="8.09" fill="#ffc8b8"/><rect x="931.95" y="1118.80" width="8.15" height="8.09" fill="#ffc5b5"/><rect x="939.50" y="1118.80" width="8.15" height="8.09" fill="#ffc3b3"/><rect x="569.45" y="1126.29" width="8.15" height="8.09" fill="#9cfef6"/><rect x="577.00" y="1126.29" width="8.15" height="8.09" fill="#9efef6"/><rect x="584.55" y="1126.29" width="8.15" height="8.09" fill="#a1fef6"/><rect x="592.10" y="1126.29" width="8.15" height="8.09" fill="#a5fef6"/><rect x="599.66" y="1126.29" width="8.15" height="8.09" fill="#a8fff7"/><rect x="607.21" y="1126.29" width="8.15" height="8.09" fill="#abfff7"/><rect x="614.76" y="1126.29" width="8.15" height="8.09" fill="#affff7"/><rect x="622.31" y="1126.29" width="8.15" height="8.09" fill="#b2fff8"/><rect x="629.86" y="1126.29" width="8.15" height="8.09" fill="#b5fff8"/><rect x="637.42" y="1126.29" width="8.15" height="8.09" fill="#b9fff9"/><rect x="644.97" y="1126.29" width="8.15" height="8.09" fill="#bcfff9"/><rect x="652.52" y="1126.29" width="8.15" height="8.09" fill="#bffff9"/><rect x="660.07" y="1126.29" width="8.15" height="8.09" fill="#c3fffa"/><rect x="667.62" y="1126.29" width="8.15" height="8.09" fill="#c7fffa"/><rect x="675.18" y="1126.29" width="8.15" height="8.09" fill="#cbfffa"/><rect x="682.73" y="1126.29" width="8.15" height="8.09" fill="#cffffa"/><rect x="690.28" y="1126.29" width="8.15" height="8.09" fill="#d4fffa"/><rect x="697.83" y="1126.29" width="8.15" height="8.09" fill="#d8fffa"/><rect x="705.39" y="1126.29" width="8.15" height="8.09" fill="#ddfffb"/><rect x="712.94" y="1126.29" width="8.15" height="8.09" fill="#e1fffb"/><rect x="720.49" y="1126.29" width="8.15" height="8.09" fill="#e6fffb"/><rect x="728.04" y="1126.29" width="8.15" height="8.09" fill="#eafffb"/><rect x="735.59" y="1126.29" width="8.15" height="8.09" fill="#effffb"/><rect x="743.15" y="1126.29" width="8.15" height="8.09" fill="#f3fffb"/><rect x="750.70" y="1126.29" width="8.15" height="8.09" fill="#f8fffb"/><rect x="758.25" y="1126.29" width="8.15" height="8.09" fill="#fafefb"/><rect x="765.80" y="1126.29" width="8.15" height="8.09" fill="#fafdf8"/><rect x="773.35" y="1126.29" width="8.15" height="8.09" fill="#fbfbf6"/><rect x="780.91" y="1126.29" width="8.15" height="8.09" fill="#fbf9f4"/><rect x="788.46" y="1126.29" width="8.15" height="8.09" fill="#fcf8f2"/><rect x="796.01" y="1126.29" width="8.15" height="8.09" fill="#fcf6f0"/><rect x="803.56" y="1126.29" width="8.15" height="8.09" fill="#fdf4ee"/><rect x="811.11" y="1126.29" width="8.15" height="8.09" fill="#fdf3ec"/><rect x="818.67" y="1126.29" width="8.15" height="8.09" fill="#fdf1ea"/><rect x="826.22" y="1126.29" width="8.15" height="8.09" fill="#feefe7"/><rect x="833.77" y="1126.29" width="8.15" height="8.09" fill="#feeee5"/><rect x="841.32" y="1126.29" width="8.15" height="8.09" fill="#ffece3"/><rect x="848.88" y="1126.29" width="8.15" height="8.09" fill="#ffe9e0"/><rect x="856.43" y="1126.29" width="8.15" height="8.09" fill="#ffe6dc"/><rect x="863.98" y="1126.29" width="8.15" height="8.09" fill="#ffe2d8"/><rect x="871.53" y="1126.29" width="8.15" height="8.09" fill="#ffdfd4"/><rect x="879.08" y="1126.29" width="8.15" height="8.09" fill="#ffdbd1"/><rect x="886.64" y="1126.29" width="8.15" height="8.09" fill="#ffd8cd"/><rect x="894.19" y="1126.29" width="8.15" height="8.09" fill="#ffd4c9"/><rect x="901.74" y="1126.29" width="8.15" height="8.09" fill="#ffd1c5"/><rect x="909.29" y="1126.29" width="8.15" height="8.09" fill="#ffcdc1"/><rect x="916.84" y="1126.29" width="8.15" height="8.09" fill="#ffc9bd"/><rect x="924.40" y="1126.29" width="8.15" height="8.09" fill="#ffc6b9"/><rect x="931.95" y="1126.29" width="8.15" height="8.09" fill="#ffc2b5"/><rect x="939.50" y="1126.29" width="8.15" height="8.09" fill="#ffc1b3"/><rect x="569.45" y="1133.77" width="8.15" height="8.09" fill="#9efff9"/><rect x="577.00" y="1133.77" width="8.15" height="8.09" fill="#a0fff9"/><rect x="584.55" y="1133.77" width="8.15" height="8.09" fill="#a3fff9"/><rect x="592.10" y="1133.77" width="8.15" height="8.09" fill="#a7fffa"/><rect x="599.66" y="1133.77" width="8.15" height="8.09" fill="#aafffa"/><rect x="607.21" y="1133.77" width="8.15" height="8.09" fill="#adfffa"/><rect x="614.76" y="1133.77" width="8.15" height="8.09" fill="#b1fffa"/><rect x="622.31" y="1133.77" width="8.15" height="8.09" fill="#b4fffb"/><rect x="629.86" y="1133.77" width="8.15" height="8.09" fill="#b7fffb"/><rect x="637.42" y="1133.77" width="8.15" height="8.09" fill="#bbfffb"/><rect x="644.97" y="1133.77" width="8.15" height="8.09" fill="#befffc"/><rect x="652.52" y="1133.77" width="8.15" height="8.09" fill="#c1fffc"/><rect x="660.07" y="1133.77" width="8.15" height="8.09" fill="#c5fffc"/><rect x="667.62" y="1133.77" width="8.15" height="8.09" fill="#c8fffc"/><rect x="675.18" y="1133.77" width="8.15" height="8.09" fill="#cdfffc"/><rect x="682.73" y="1133.77" width="8.15" height="8.09" fill="#d1fffd"/><rect x="690.28" y="1133.77" width="8.15" height="8.09" fill="#d6fffd"/><rect x="697.83" y="1133.77" width="8.15" height="8.09" fill="#dafffd"/><rect x="705.39" y="1133.77" width="8.15" height="8.09" fill="#dffffd"/><rect x="712.94" y="1133.77" width="8.15" height="8.09" fill="#e4fffd"/><rect x="720.49" y="1133.77" width="8.15" height="8.09" fill="#e8fffd"/><rect x="728.04" y="1133.77" width="8.15" height="8.09" fill="#edfffd"/><rect x="735.59" y="1133.77" width="8.15" height="8.09" fill="#f1fffd"/><rect x="743.15" y="1133.77" width="8.15" height="8.09" fill="#f6fffd"/><rect x="750.70" y="1133.77" width="8.15" height="8.09" fill="#fafffd"/><rect x="758.25" y="1133.77" width="8.15" height="8.09" fill="#fcfefc"/><rect x="765.80" y="1133.77" width="8.15" height="8.09" fill="#fdfcfa"/><rect x="773.35" y="1133.77" width="8.15" height="8.09" fill="#fdfbf8"/><rect x="780.91" y="1133.77" width="8.15" height="8.09" fill="#fdf9f6"/><rect x="788.46" y="1133.77" width="8.15" height="8.09" fill="#fdf7f3"/><rect x="796.01" y="1133.77" width="8.15" height="8.09" fill="#fef5f1"/><rect x="803.56" y="1133.77" width="8.15" height="8.09" fill="#fef3ef"/><rect x="811.11" y="1133.77" width="8.15" height="8.09" fill="#fef2ed"/><rect x="818.67" y="1133.77" width="8.15" height="8.09" fill="#fef0eb"/><rect x="826.22" y="1133.77" width="8.15" height="8.09" fill="#feeee9"/><rect x="833.77" y="1133.77" width="8.15" height="8.09" fill="#ffece6"/><rect x="841.32" y="1133.77" width="8.15" height="8.09" fill="#ffeae4"/><rect x="848.88" y="1133.77" width="8.15" height="8.09" fill="#ffe8e1"/><rect x="856.43" y="1133.77" width="8.15" height="8.09" fill="#ffe4dd"/><rect x="863.98" y="1133.77" width="8.15" height="8.09" fill="#ffe1d9"/><rect x="871.53" y="1133.77" width="8.15" height="8.09" fill="#ffddd5"/><rect x="879.08" y="1133.77" width="8.15" height="8.09" fill="#ffd9d1"/><rect x="886.64" y="1133.77" width="8.15" height="8.09" fill="#ffd6cd"/><rect x="894.19" y="1133.77" width="8.15" height="8.09" fill="#ffd2c9"/><rect x="901.74" y="1133.77" width="8.15" height="8.09" fill="#ffcfc5"/><rect x="909.29" y="1133.77" width="8.15" height="8.09" fill="#ffcbc1"/><rect x="916.84" y="1133.77" width="8.15" height="8.09" fill="#ffc7bd"/><rect x="924.40" y="1133.77" width="8.15" height="8.09" fill="#ffc4b9"/><rect x="931.95" y="1133.77" width="8.15" height="8.09" fill="#ffc0b6"/><rect x="939.50" y="1133.77" width="8.15" height="8.09" fill="#ffbeb4"/><rect x="569.45" y="1141.26" width="8.15" height="8.09" fill="#a0fffc"/><rect x="577.00" y="1141.26" width="8.15" height="8.09" fill="#a2fffc"/><rect x="584.55" y="1141.26" width="8.15" height="8.09" fill="#a5fffc"/><rect x="592.10" y="1141.26" width="8.15" height="8.09" fill="#a8fffd"/><rect x="599.66" y="1141.26" width="8.15" height="8.09" fill="#acfffd"/><rect x="607.21" y="1141.26" width="8.15" height="8.09" fill="#affffd"/><rect x="614.76" y="1141.26" width="8.15" height="8.09" fill="#b2fffd"/><rect x="622.31" y="1141.26" width="8.15" height="8.09" fill="#b6fffe"/><rect x="629.86" y="1141.26" width="8.15" height="8.09" fill="#b9fffe"/><rect x="637.42" y="1141.26" width="8.15" height="8.09" fill="#bcfffe"/><rect x="644.97" y="1141.26" width="8.15" height="8.09" fill="#c0fffe"/><rect x="652.52" y="1141.26" width="8.15" height="8.09" fill="#c3ffff"/><rect x="660.07" y="1141.26" width="8.15" height="8.09" fill="#c6ffff"/><rect x="667.62" y="1141.26" width="8.15" height="8.09" fill="#caffff"/><rect x="675.18" y="1141.26" width="8.15" height="8.09" fill="#cfffff"/><rect x="682.73" y="1141.26" width="8.15" height="8.09" fill="#d3ffff"/><rect x="690.28" y="1141.26" width="8.15" height="8.09" fill="#d8ffff"/><rect x="697.83" y="1141.26" width="8.15" height="8.09" fill="#ddffff"/><rect x="705.39" y="1141.26" width="8.15" height="8.09" fill="#e1ffff"/><rect x="712.94" y="1141.26" width="8.15" height="8.09" fill="#e6ffff"/><rect x="720.49" y="1141.26" width="8.15" height="8.09" fill="#eaffff"/><rect x="728.04" y="1141.26" width="8.15" height="8.09" fill="#efffff"/><rect x="735.59" y="1141.26" width="8.15" height="8.09" fill="#f4ffff"/><rect x="743.15" y="1141.26" width="8.15" height="8.09" fill="#f8ffff"/><rect x="750.70" y="1141.26" width="8.15" height="8.09" fill="#fdffff"/><rect x="758.25" y="1141.26" width="8.15" height="8.09" fill="#fffefe"/><rect x="765.80" y="1141.26" width="8.15" height="8.09" fill="#fffcfc"/><rect x="773.35" y="1141.26" width="8.15" height="8.09" fill="#fffaf9"/><rect x="780.91" y="1141.26" width="8.15" height="8.09" fill="#fff8f7"/><rect x="788.46" y="1141.26" width="8.15" height="8.09" fill="#fff6f5"/><rect x="796.01" y="1141.26" width="8.15" height="8.09" fill="#fff4f3"/><rect x="803.56" y="1141.26" width="8.15" height="8.09" fill="#fff3f0"/><rect x="811.11" y="1141.26" width="8.15" height="8.09" fill="#fff1ee"/><rect x="818.67" y="1141.26" width="8.15" height="8.09" fill="#ffefec"/><rect x="826.22" y="1141.26" width="8.15" height="8.09" fill="#ffedea"/><rect x="833.77" y="1141.26" width="8.15" height="8.09" fill="#ffebe7"/><rect x="841.32" y="1141.26" width="8.15" height="8.09" fill="#ffe9e5"/><rect x="848.88" y="1141.26" width="8.15" height="8.09" fill="#ffe6e2"/><rect x="856.43" y="1141.26" width="8.15" height="8.09" fill="#ffe2de"/><rect x="863.98" y="1141.26" width="8.15" height="8.09" fill="#ffdfda"/><rect x="871.53" y="1141.26" width="8.15" height="8.09" fill="#ffdbd6"/><rect x="879.08" y="1141.26" width="8.15" height="8.09" fill="#ffd8d2"/><rect x="886.64" y="1141.26" width="8.15" height="8.09" fill="#ffd4ce"/><rect x="894.19" y="1141.26" width="8.15" height="8.09" fill="#ffd0ca"/><rect x="901.74" y="1141.26" width="8.15" height="8.09" fill="#ffccc6"/><rect x="909.29" y="1141.26" width="8.15" height="8.09" fill="#ffc9c2"/><rect x="916.84" y="1141.26" width="8.15" height="8.09" fill="#ffc5be"/><rect x="924.40" y="1141.26" width="8.15" height="8.09" fill="#ffc2ba"/><rect x="931.95" y="1141.26" width="8.15" height="8.09" fill="#ffbeb6"/><rect x="939.50" y="1141.26" width="8.15" height="8.09" fill="#ffbcb4"/><rect x="569.45" y="1148.74" width="8.15" height="8.09" fill="#a0fcfc"/><rect x="577.00" y="1148.74" width="8.15" height="8.09" fill="#a2fcfc"/><rect x="584.55" y="1148.74" width="8.15" height="8.09" fill="#a6fcfd"/><rect x="592.10" y="1148.74" width="8.15" height="8.09" fill="#a9fcfd"/><rect x="599.66" y="1148.74" width="8.15" height="8.09" fill="#acfcfd"/><rect x="607.21" y="1148.74" width="8.15" height="8.09" fill="#b0fcfd"/><rect x="614.76" y="1148.74" width="8.15" height="8.09" fill="#b3fcfe"/><rect x="622.31" y="1148.74" width="8.15" height="8.09" fill="#b6fcfe"/><rect x="629.86" y="1148.74" width="8.15" height="8.09" fill="#bafcfe"/><rect x="637.42" y="1148.74" width="8.15" height="8.09" fill="#bdfcfe"/><rect x="644.97" y="1148.74" width="8.15" height="8.09" fill="#c0fcfe"/><rect x="652.52" y="1148.74" width="8.15" height="8.09" fill="#c4fcff"/><rect x="660.07" y="1148.74" width="8.15" height="8.09" fill="#c7fcff"/><rect x="667.62" y="1148.74" width="8.15" height="8.09" fill="#cbfcff"/><rect x="675.18" y="1148.74" width="8.15" height="8.09" fill="#d0fcff"/><rect x="682.73" y="1148.74" width="8.15" height="8.09" fill="#d4fcff"/><rect x="690.28" y="1148.74" width="8.15" height="8.09" fill="#d8fcff"/><rect x="697.83" y="1148.74" width="8.15" height="8.09" fill="#ddfcff"/><rect x="705.39" y="1148.74" width="8.15" height="8.09" fill="#e1fcff"/><rect x="712.94" y="1148.74" width="8.15" height="8.09" fill="#e6fcff"/><rect x="720.49" y="1148.74" width="8.15" height="8.09" fill="#eafcff"/><rect x="728.04" y="1148.74" width="8.15" height="8.09" fill="#effcff"/><rect x="735.59" y="1148.74" width="8.15" height="8.09" fill="#f3fcff"/><rect x="743.15" y="1148.74" width="8.15" height="8.09" fill="#f8fcff"/><rect x="750.70" y="1148.74" width="8.15" height="8.09" fill="#fcfcff"/><rect x="758.25" y="1148.74" width="8.15" height="8.09" fill="#fefbfe"/><rect x="765.80" y="1148.74" width="8.15" height="8.09" fill="#fef9fc"/><rect x="773.35" y="1148.74" width="8.15" height="8.09" fill="#fef7f9"/><rect x="780.91" y="1148.74" width="8.15" height="8.09" fill="#fef5f7"/><rect x="788.46" y="1148.74" width="8.15" height="8.09" fill="#fef3f5"/><rect x="796.01" y="1148.74" width="8.15" height="8.09" fill="#fff1f3"/><rect x="803.56" y="1148.74" width="8.15" height="8.09" fill="#ffeff0"/><rect x="811.11" y="1148.74" width="8.15" height="8.09" fill="#ffedee"/><rect x="818.67" y="1148.74" width="8.15" height="8.09" fill="#ffecec"/><rect x="826.22" y="1148.74" width="8.15" height="8.09" fill="#ffeaea"/><rect x="833.77" y="1148.74" width="8.15" height="8.09" fill="#ffe8e7"/><rect x="841.32" y="1148.74" width="8.15" height="8.09" fill="#ffe6e5"/><rect x="848.88" y="1148.74" width="8.15" height="8.09" fill="#ffe3e2"/><rect x="856.43" y="1148.74" width="8.15" height="8.09" fill="#ffdfde"/><rect x="863.98" y="1148.74" width="8.15" height="8.09" fill="#ffdcda"/><rect x="871.53" y="1148.74" width="8.15" height="8.09" fill="#ffd8d6"/><rect x="879.08" y="1148.74" width="8.15" height="8.09" fill="#ffd5d3"/><rect x="886.64" y="1148.74" width="8.15" height="8.09" fill="#ffd1cf"/><rect x="894.19" y="1148.74" width="8.15" height="8.09" fill="#ffcdcb"/><rect x="901.74" y="1148.74" width="8.15" height="8.09" fill="#ffcac7"/><rect x="909.29" y="1148.74" width="8.15" height="8.09" fill="#ffc6c3"/><rect x="916.84" y="1148.74" width="8.15" height="8.09" fill="#ffc3bf"/><rect x="924.40" y="1148.74" width="8.15" height="8.09" fill="#ffbfbb"/><rect x="931.95" y="1148.74" width="8.15" height="8.09" fill="#ffbcb7"/><rect x="939.50" y="1148.74" width="8.15" height="8.09" fill="#ffbab5"/><rect x="569.45" y="1156.23" width="8.15" height="8.09" fill="#a1f9fd"/><rect x="577.00" y="1156.23" width="8.15" height="8.09" fill="#a3f9fd"/><rect x="584.55" y="1156.23" width="8.15" height="8.09" fill="#a6f9fd"/><rect x="592.10" y="1156.23" width="8.15" height="8.09" fill="#a9f9fd"/><rect x="599.66" y="1156.23" width="8.15" height="8.09" fill="#adf9fd"/><rect x="607.21" y="1156.23" width="8.15" height="8.09" fill="#b0f9fe"/><rect x="614.76" y="1156.23" width="8.15" height="8.09" fill="#b4f9fe"/><rect x="622.31" y="1156.23" width="8.15" height="8.09" fill="#b7f9fe"/><rect x="629.86" y="1156.23" width="8.15" height="8.09" fill="#baf9fe"/><rect x="637.42" y="1156.23" width="8.15" height="8.09" fill="#bef9fe"/><rect x="644.97" y="1156.23" width="8.15" height="8.09" fill="#c1faff"/><rect x="652.52" y="1156.23" width="8.15" height="8.09" fill="#c5faff"/><rect x="660.07" y="1156.23" width="8.15" height="8.09" fill="#c8faff"/><rect x="667.62" y="1156.23" width="8.15" height="8.09" fill="#ccfaff"/><rect x="675.18" y="1156.23" width="8.15" height="8.09" fill="#d0faff"/><rect x="682.73" y="1156.23" width="8.15" height="8.09" fill="#d5faff"/><rect x="690.28" y="1156.23" width="8.15" height="8.09" fill="#d9f9ff"/><rect x="697.83" y="1156.23" width="8.15" height="8.09" fill="#ddf9ff"/><rect x="705.39" y="1156.23" width="8.15" height="8.09" fill="#e1f9ff"/><rect x="712.94" y="1156.23" width="8.15" height="8.09" fill="#e6f9ff"/><rect x="720.49" y="1156.23" width="8.15" height="8.09" fill="#eaf9ff"/><rect x="728.04" y="1156.23" width="8.15" height="8.09" fill="#eef9ff"/><rect x="735.59" y="1156.23" width="8.15" height="8.09" fill="#f3f9ff"/><rect x="743.15" y="1156.23" width="8.15" height="8.09" fill="#f7f9ff"/><rect x="750.70" y="1156.23" width="8.15" height="8.09" fill="#fbf9ff"/><rect x="758.25" y="1156.23" width="8.15" height="8.09" fill="#fdf8fe"/><rect x="765.80" y="1156.23" width="8.15" height="8.09" fill="#fef6fc"/><rect x="773.35" y="1156.23" width="8.15" height="8.09" fill="#fef4f9"/><rect x="780.91" y="1156.23" width="8.15" height="8.09" fill="#fef2f7"/><rect x="788.46" y="1156.23" width="8.15" height="8.09" fill="#fef0f5"/><rect x="796.01" y="1156.23" width="8.15" height="8.09" fill="#feeef3"/><rect x="803.56" y="1156.23" width="8.15" height="8.09" fill="#feecf0"/><rect x="811.11" y="1156.23" width="8.15" height="8.09" fill="#feeaee"/><rect x="818.67" y="1156.23" width="8.15" height="8.09" fill="#ffe8ec"/><rect x="826.22" y="1156.23" width="8.15" height="8.09" fill="#ffe6ea"/><rect x="833.77" y="1156.23" width="8.15" height="8.09" fill="#ffe5e7"/><rect x="841.32" y="1156.23" width="8.15" height="8.09" fill="#ffe3e5"/><rect x="848.88" y="1156.23" width="8.15" height="8.09" fill="#ffe0e2"/><rect x="856.43" y="1156.23" width="8.15" height="8.09" fill="#ffdcde"/><rect x="863.98" y="1156.23" width="8.15" height="8.09" fill="#ffd9db"/><rect x="871.53" y="1156.23" width="8.15" height="8.09" fill="#ffd5d7"/><rect x="879.08" y="1156.23" width="8.15" height="8.09" fill="#ffd2d3"/><rect x="886.64" y="1156.23" width="8.15" height="8.09" fill="#ffcecf"/><rect x="894.19" y="1156.23" width="8.15" height="8.09" fill="#ffcbcb"/><rect x="901.74" y="1156.23" width="8.15" height="8.09" fill="#ffc7c8"/><rect x="909.29" y="1156.23" width="8.15" height="8.09" fill="#ffc4c4"/><rect x="916.84" y="1156.23" width="8.15" height="8.09" fill="#ffc0c0"/><rect x="924.40" y="1156.23" width="8.15" height="8.09" fill="#ffbdbc"/><rect x="931.95" y="1156.23" width="8.15" height="8.09" fill="#ffb9b9"/><rect x="939.50" y="1156.23" width="8.15" height="8.09" fill="#ffb7b7"/><rect x="569.45" y="1163.71" width="8.15" height="8.09" fill="#a1f6fd"/><rect x="577.00" y="1163.71" width="8.15" height="8.09" fill="#a3f6fd"/><rect x="584.55" y="1163.71" width="8.15" height="8.09" fill="#a7f6fd"/><rect x="592.10" y="1163.71" width="8.15" height="8.09" fill="#aaf6fd"/><rect x="599.66" y="1163.71" width="8.15" height="8.09" fill="#adf6fe"/><rect x="607.21" y="1163.71" width="8.15" height="8.09" fill="#b1f6fe"/><rect x="614.76" y="1163.71" width="8.15" height="8.09" fill="#b4f6fe"/><rect x="622.31" y="1163.71" width="8.15" height="8.09" fill="#b8f6fe"/><rect x="629.86" y="1163.71" width="8.15" height="8.09" fill="#bbf7fe"/><rect x="637.42" y="1163.71" width="8.15" height="8.09" fill="#bff7fe"/><rect x="644.97" y="1163.71" width="8.15" height="8.09" fill="#c2f7ff"/><rect x="652.52" y="1163.71" width="8.15" height="8.09" fill="#c6f7ff"/><rect x="660.07" y="1163.71" width="8.15" height="8.09" fill="#c9f7ff"/><rect x="667.62" y="1163.71" width="8.15" height="8.09" fill="#cdf7ff"/><rect x="675.18" y="1163.71" width="8.15" height="8.09" fill="#d1f7ff"/><rect x="682.73" y="1163.71" width="8.15" height="8.09" fill="#d5f7ff"/><rect x="690.28" y="1163.71" width="8.15" height="8.09" fill="#d9f7ff"/><rect x="697.83" y="1163.71" width="8.15" height="8.09" fill="#ddf7ff"/><rect x="705.39" y="1163.71" width="8.15" height="8.09" fill="#e2f6ff"/><rect x="712.94" y="1163.71" width="8.15" height="8.09" fill="#e6f6ff"/><rect x="720.49" y="1163.71" width="8.15" height="8.09" fill="#eaf6ff"/><rect x="728.04" y="1163.71" width="8.15" height="8.09" fill="#eef6ff"/><rect x="735.59" y="1163.71" width="8.15" height="8.09" fill="#f2f6ff"/><rect x="743.15" y="1163.71" width="8.15" height="8.09" fill="#f6f6ff"/><rect x="750.70" y="1163.71" width="8.15" height="8.09" fill="#fbf6ff"/><rect x="758.25" y="1163.71" width="8.15" height="8.09" fill="#fdf5fe"/><rect x="765.80" y="1163.71" width="8.15" height="8.09" fill="#fdf3fc"/><rect x="773.35" y="1163.71" width="8.15" height="8.09" fill="#fdf1f9"/><rect x="780.91" y="1163.71" width="8.15" height="8.09" fill="#fdeff7"/><rect x="788.46" y="1163.71" width="8.15" height="8.09" fill="#feedf5"/><rect x="796.01" y="1163.71" width="8.15" height="8.09" fill="#feebf3"/><rect x="803.56" y="1163.71" width="8.15" height="8.09" fill="#fee9f0"/><rect x="811.11" y="1163.71" width="8.15" height="8.09" fill="#fee7ee"/><rect x="818.67" y="1163.71" width="8.15" height="8.09" fill="#fee5ec"/><rect x="826.22" y="1163.71" width="8.15" height="8.09" fill="#fee3ea"/><rect x="833.77" y="1163.71" width="8.15" height="8.09" fill="#ffe1e7"/><rect x="841.32" y="1163.71" width="8.15" height="8.09" fill="#ffdfe5"/><rect x="848.88" y="1163.71" width="8.15" height="8.09" fill="#ffdde2"/><rect x="856.43" y="1163.71" width="8.15" height="8.09" fill="#ffd9df"/><rect x="863.98" y="1163.71" width="8.15" height="8.09" fill="#ffd6db"/><rect x="871.53" y="1163.71" width="8.15" height="8.09" fill="#ffd2d7"/><rect x="879.08" y="1163.71" width="8.15" height="8.09" fill="#ffcfd4"/><rect x="886.64" y="1163.71" width="8.15" height="8.09" fill="#ffcbd0"/><rect x="894.19" y="1163.71" width="8.15" height="8.09" fill="#ffc8cc"/><rect x="901.74" y="1163.71" width="8.15" height="8.09" fill="#ffc5c9"/><rect x="909.29" y="1163.71" width="8.15" height="8.09" fill="#ffc1c5"/><rect x="916.84" y="1163.71" width="8.15" height="8.09" fill="#ffbec1"/><rect x="924.40" y="1163.71" width="8.15" height="8.09" fill="#ffbabe"/><rect x="931.95" y="1163.71" width="8.15" height="8.09" fill="#ffb7ba"/><rect x="939.50" y="1163.71" width="8.15" height="8.09" fill="#ffb5b8"/><rect x="569.45" y="1171.20" width="8.15" height="8.09" fill="#a2f3fd"/><rect x="577.00" y="1171.20" width="8.15" height="8.09" fill="#a4f3fd"/><rect x="584.55" y="1171.20" width="8.15" height="8.09" fill="#a7f3fe"/><rect x="592.10" y="1171.20" width="8.15" height="8.09" fill="#abf3fe"/><rect x="599.66" y="1171.20" width="8.15" height="8.09" fill="#aef3fe"/><rect x="607.21" y="1171.20" width="8.15" height="8.09" fill="#b2f3fe"/><rect x="614.76" y="1171.20" width="8.15" height="8.09" fill="#b5f3fe"/><rect x="622.31" y="1171.20" width="8.15" height="8.09" fill="#b8f4fe"/><rect x="629.86" y="1171.20" width="8.15" height="8.09" fill="#bcf4fe"/><rect x="637.42" y="1171.20" width="8.15" height="8.09" fill="#bff4ff"/><rect x="644.97" y="1171.20" width="8.15" height="8.09" fill="#c3f4ff"/><rect x="652.52" y="1171.20" width="8.15" height="8.09" fill="#c6f4ff"/><rect x="660.07" y="1171.20" width="8.15" height="8.09" fill="#caf4ff"/><rect x="667.62" y="1171.20" width="8.15" height="8.09" fill="#cef4ff"/><rect x="675.18" y="1171.20" width="8.15" height="8.09" fill="#d2f4ff"/><rect x="682.73" y="1171.20" width="8.15" height="8.09" fill="#d6f4ff"/><rect x="690.28" y="1171.20" width="8.15" height="8.09" fill="#daf4ff"/><rect x="697.83" y="1171.20" width="8.15" height="8.09" fill="#def4ff"/><rect x="705.39" y="1171.20" width="8.15" height="8.09" fill="#e2f4ff"/><rect x="712.94" y="1171.20" width="8.15" height="8.09" fill="#e6f3ff"/><rect x="720.49" y="1171.20" width="8.15" height="8.09" fill="#eaf3ff"/><rect x="728.04" y="1171.20" width="8.15" height="8.09" fill="#eef3ff"/><rect x="735.59" y="1171.20" width="8.15" height="8.09" fill="#f2f3ff"/><rect x="743.15" y="1171.20" width="8.15" height="8.09" fill="#f6f3ff"/><rect x="750.70" y="1171.20" width="8.15" height="8.09" fill="#faf3ff"/><rect x="758.25" y="1171.20" width="8.15" height="8.09" fill="#fcf2fe"/><rect x="765.80" y="1171.20" width="8.15" height="8.09" fill="#fcf0fc"/><rect x="773.35" y="1171.20" width="8.15" height="8.09" fill="#fceef9"/><rect x="780.91" y="1171.20" width="8.15" height="8.09" fill="#fdecf7"/><rect x="788.46" y="1171.20" width="8.15" height="8.09" fill="#fdeaf5"/><rect x="796.01" y="1171.20" width="8.15" height="8.09" fill="#fde8f3"/><rect x="803.56" y="1171.20" width="8.15" height="8.09" fill="#fee6f0"/><rect x="811.11" y="1171.20" width="8.15" height="8.09" fill="#fee4ee"/><rect x="818.67" y="1171.20" width="8.15" height="8.09" fill="#fee2ec"/><rect x="826.22" y="1171.20" width="8.15" height="8.09" fill="#fee0ea"/><rect x="833.77" y="1171.20" width="8.15" height="8.09" fill="#ffdee7"/><rect x="841.32" y="1171.20" width="8.15" height="8.09" fill="#ffdce5"/><rect x="848.88" y="1171.20" width="8.15" height="8.09" fill="#ffdae2"/><rect x="856.43" y="1171.20" width="8.15" height="8.09" fill="#ffd6df"/><rect x="863.98" y="1171.20" width="8.15" height="8.09" fill="#ffd3db"/><rect x="871.53" y="1171.20" width="8.15" height="8.09" fill="#ffcfd8"/><rect x="879.08" y="1171.20" width="8.15" height="8.09" fill="#ffccd4"/><rect x="886.64" y="1171.20" width="8.15" height="8.09" fill="#ffc9d1"/><rect x="894.19" y="1171.20" width="8.15" height="8.09" fill="#ffc5cd"/><rect x="901.74" y="1171.20" width="8.15" height="8.09" fill="#ffc2c9"/><rect x="909.29" y="1171.20" width="8.15" height="8.09" fill="#ffbfc6"/><rect x="916.84" y="1171.20" width="8.15" height="8.09" fill="#ffbbc2"/><rect x="924.40" y="1171.20" width="8.15" height="8.09" fill="#ffb8bf"/><rect x="931.95" y="1171.20" width="8.15" height="8.09" fill="#ffb5bb"/><rect x="939.50" y="1171.20" width="8.15" height="8.09" fill="#ffb3b9"/><rect x="569.45" y="1178.69" width="8.15" height="8.09" fill="#a2f0fe"/><rect x="577.00" y="1178.69" width="8.15" height="8.09" fill="#a4f0fe"/><rect x="584.55" y="1178.69" width="8.15" height="8.09" fill="#a8f0fe"/><rect x="592.10" y="1178.69" width="8.15" height="8.09" fill="#abf0fe"/><rect x="599.66" y="1178.69" width="8.15" height="8.09" fill="#aff0fe"/><rect x="607.21" y="1178.69" width="8.15" height="8.09" fill="#b2f0fe"/><rect x="614.76" y="1178.69" width="8.15" height="8.09" fill="#b6f1fe"/><rect x="622.31" y="1178.69" width="8.15" height="8.09" fill="#b9f1fe"/><rect x="629.86" y="1178.69" width="8.15" height="8.09" fill="#bdf1ff"/><rect x="637.42" y="1178.69" width="8.15" height="8.09" fill="#c0f1ff"/><rect x="644.97" y="1178.69" width="8.15" height="8.09" fill="#c4f1ff"/><rect x="652.52" y="1178.69" width="8.15" height="8.09" fill="#c7f2ff"/><rect x="660.07" y="1178.69" width="8.15" height="8.09" fill="#cbf2ff"/><rect x="667.62" y="1178.69" width="8.15" height="8.09" fill="#cff2ff"/><rect x="675.18" y="1178.69" width="8.15" height="8.09" fill="#d2f2ff"/><rect x="682.73" y="1178.69" width="8.15" height="8.09" fill="#d6f1ff"/><rect x="690.28" y="1178.69" width="8.15" height="8.09" fill="#daf1ff"/><rect x="697.83" y="1178.69" width="8.15" height="8.09" fill="#def1ff"/><rect x="705.39" y="1178.69" width="8.15" height="8.09" fill="#e2f1ff"/><rect x="712.94" y="1178.69" width="8.15" height="8.09" fill="#e6f1ff"/><rect x="720.49" y="1178.69" width="8.15" height="8.09" fill="#eaf0ff"/><rect x="728.04" y="1178.69" width="8.15" height="8.09" fill="#edf0ff"/><rect x="735.59" y="1178.69" width="8.15" height="8.09" fill="#f1f0ff"/><rect x="743.15" y="1178.69" width="8.15" height="8.09" fill="#f5f0ff"/><rect x="750.70" y="1178.69" width="8.15" height="8.09" fill="#f9f0ff"/><rect x="758.25" y="1178.69" width="8.15" height="8.09" fill="#fbeffe"/><rect x="765.80" y="1178.69" width="8.15" height="8.09" fill="#fcedfc"/><rect x="773.35" y="1178.69" width="8.15" height="8.09" fill="#fcebf9"/><rect x="780.91" y="1178.69" width="8.15" height="8.09" fill="#fce9f7"/><rect x="788.46" y="1178.69" width="8.15" height="8.09" fill="#fce7f5"/><rect x="796.01" y="1178.69" width="8.15" height="8.09" fill="#fde5f3"/><rect x="803.56" y="1178.69" width="8.15" height="8.09" fill="#fde3f0"/><rect x="811.11" y="1178.69" width="8.15" height="8.09" fill="#fee1ee"/><rect x="818.67" y="1178.69" width="8.15" height="8.09" fill="#fedfec"/><rect x="826.22" y="1178.69" width="8.15" height="8.09" fill="#feddea"/><rect x="833.77" y="1178.69" width="8.15" height="8.09" fill="#fedbe7"/><rect x="841.32" y="1178.69" width="8.15" height="8.09" fill="#ffd9e5"/><rect x="848.88" y="1178.69" width="8.15" height="8.09" fill="#ffd6e2"/><rect x="856.43" y="1178.69" width="8.15" height="8.09" fill="#ffd3df"/><rect x="863.98" y="1178.69" width="8.15" height="8.09" fill="#ffd0db"/><rect x="871.53" y="1178.69" width="8.15" height="8.09" fill="#ffccd8"/><rect x="879.08" y="1178.69" width="8.15" height="8.09" fill="#ffc9d5"/><rect x="886.64" y="1178.69" width="8.15" height="8.09" fill="#ffc6d1"/><rect x="894.19" y="1178.69" width="8.15" height="8.09" fill="#ffc3ce"/><rect x="901.74" y="1178.69" width="8.15" height="8.09" fill="#ffbfca"/><rect x="909.29" y="1178.69" width="8.15" height="8.09" fill="#ffbcc7"/><rect x="916.84" y="1178.69" width="8.15" height="8.09" fill="#ffb9c3"/><rect x="924.40" y="1178.69" width="8.15" height="8.09" fill="#ffb6c0"/><rect x="931.95" y="1178.69" width="8.15" height="8.09" fill="#ffb2bd"/><rect x="939.50" y="1178.69" width="8.15" height="8.09" fill="#ffb1bb"/><rect x="569.45" y="1186.17" width="8.15" height="8.09" fill="#a3ecfe"/><rect x="577.00" y="1186.17" width="8.15" height="8.09" fill="#a5edfe"/><rect x="584.55" y="1186.17" width="8.15" height="8.09" fill="#a8edfe"/><rect x="592.10" y="1186.17" width="8.15" height="8.09" fill="#acedfe"/><rect x="599.66" y="1186.17" width="8.15" height="8.09" fill="#afedfe"/><rect x="607.21" y="1186.17" width="8.15" height="8.09" fill="#b3eefe"/><rect x="614.76" y="1186.17" width="8.15" height="8.09" fill="#b6eefe"/><rect x="622.31" y="1186.17" width="8.15" height="8.09" fill="#baeeff"/><rect x="629.86" y="1186.17" width="8.15" height="8.09" fill="#bdeeff"/><rect x="637.42" y="1186.17" width="8.15" height="8.09" fill="#c1eeff"/><rect x="644.97" y="1186.17" width="8.15" height="8.09" fill="#c5efff"/><rect x="652.52" y="1186.17" width="8.15" height="8.09" fill="#c8efff"/><rect x="660.07" y="1186.17" width="8.15" height="8.09" fill="#ccefff"/><rect x="667.62" y="1186.17" width="8.15" height="8.09" fill="#cfefff"/><rect x="675.18" y="1186.17" width="8.15" height="8.09" fill="#d3efff"/><rect x="682.73" y="1186.17" width="8.15" height="8.09" fill="#d7efff"/><rect x="690.28" y="1186.17" width="8.15" height="8.09" fill="#dbeeff"/><rect x="697.83" y="1186.17" width="8.15" height="8.09" fill="#deeeff"/><rect x="705.39" y="1186.17" width="8.15" height="8.09" fill="#e2eeff"/><rect x="712.94" y="1186.17" width="8.15" height="8.09" fill="#e6eeff"/><rect x="720.49" y="1186.17" width="8.15" height="8.09" fill="#e9eeff"/><rect x="728.04" y="1186.17" width="8.15" height="8.09" fill="#ededff"/><rect x="735.59" y="1186.17" width="8.15" height="8.09" fill="#f1edff"/><rect x="743.15" y="1186.17" width="8.15" height="8.09" fill="#f5edff"/><rect x="750.70" y="1186.17" width="8.15" height="8.09" fill="#f8edff"/><rect x="758.25" y="1186.17" width="8.15" height="8.09" fill="#faebfe"/><rect x="765.80" y="1186.17" width="8.15" height="8.09" fill="#fbeafc"/><rect x="773.35" y="1186.17" width="8.15" height="8.09" fill="#fbe8f9"/><rect x="780.91" y="1186.17" width="8.15" height="8.09" fill="#fce6f7"/><rect x="788.46" y="1186.17" width="8.15" height="8.09" fill="#fce4f5"/><rect x="796.01" y="1186.17" width="8.15" height="8.09" fill="#fce2f3"/><rect x="803.56" y="1186.17" width="8.15" height="8.09" fill="#fde0f0"/><rect x="811.11" y="1186.17" width="8.15" height="8.09" fill="#fddeee"/><rect x="818.67" y="1186.17" width="8.15" height="8.09" fill="#fedcec"/><rect x="826.22" y="1186.17" width="8.15" height="8.09" fill="#fedaea"/><rect x="833.77" y="1186.17" width="8.15" height="8.09" fill="#fed8e7"/><rect x="841.32" y="1186.17" width="8.15" height="8.09" fill="#ffd6e5"/><rect x="848.88" y="1186.17" width="8.15" height="8.09" fill="#ffd3e2"/><rect x="856.43" y="1186.17" width="8.15" height="8.09" fill="#ffd0df"/><rect x="863.98" y="1186.17" width="8.15" height="8.09" fill="#ffcddc"/><rect x="871.53" y="1186.17" width="8.15" height="8.09" fill="#ffcad8"/><rect x="879.08" y="1186.17" width="8.15" height="8.09" fill="#ffc6d5"/><rect x="886.64" y="1186.17" width="8.15" height="8.09" fill="#ffc3d2"/><rect x="894.19" y="1186.17" width="8.15" height="8.09" fill="#ffc0ce"/><rect x="901.74" y="1186.17" width="8.15" height="8.09" fill="#ffbdcb"/><rect x="909.29" y="1186.17" width="8.15" height="8.09" fill="#ffbac8"/><rect x="916.84" y="1186.17" width="8.15" height="8.09" fill="#ffb6c5"/><rect x="924.40" y="1186.17" width="8.15" height="8.09" fill="#ffb3c1"/><rect x="931.95" y="1186.17" width="8.15" height="8.09" fill="#ffb0be"/><rect x="939.50" y="1186.17" width="8.15" height="8.09" fill="#ffaebc"/><rect x="569.45" y="1193.66" width="8.15" height="8.09" fill="#a3e9fe"/><rect x="577.00" y="1193.66" width="8.15" height="8.09" fill="#a5eafe"/><rect x="584.55" y="1193.66" width="8.15" height="8.09" fill="#a9eafe"/><rect x="592.10" y="1193.66" width="8.15" height="8.09" fill="#aceaff"/><rect x="599.66" y="1193.66" width="8.15" height="8.09" fill="#b0eaff"/><rect x="607.21" y="1193.66" width="8.15" height="8.09" fill="#b3ebff"/><rect x="614.76" y="1193.66" width="8.15" height="8.09" fill="#b7ebff"/><rect x="622.31" y="1193.66" width="8.15" height="8.09" fill="#bbebff"/><rect x="629.86" y="1193.66" width="8.15" height="8.09" fill="#beebff"/><rect x="637.42" y="1193.66" width="8.15" height="8.09" fill="#c2ecff"/><rect x="644.97" y="1193.66" width="8.15" height="8.09" fill="#c5ecff"/><rect x="652.52" y="1193.66" width="8.15" height="8.09" fill="#c9ecff"/><rect x="660.07" y="1193.66" width="8.15" height="8.09" fill="#cdecff"/><rect x="667.62" y="1193.66" width="8.15" height="8.09" fill="#d0ecff"/><rect x="675.18" y="1193.66" width="8.15" height="8.09" fill="#d4ecff"/><rect x="682.73" y="1193.66" width="8.15" height="8.09" fill="#d7ecff"/><rect x="690.28" y="1193.66" width="8.15" height="8.09" fill="#dbecff"/><rect x="697.83" y="1193.66" width="8.15" height="8.09" fill="#dfebff"/><rect x="705.39" y="1193.66" width="8.15" height="8.09" fill="#e2ebff"/><rect x="712.94" y="1193.66" width="8.15" height="8.09" fill="#e6ebff"/><rect x="720.49" y="1193.66" width="8.15" height="8.09" fill="#e9ebff"/><rect x="728.04" y="1193.66" width="8.15" height="8.09" fill="#edeaff"/><rect x="735.59" y="1193.66" width="8.15" height="8.09" fill="#f0eaff"/><rect x="743.15" y="1193.66" width="8.15" height="8.09" fill="#f4eaff"/><rect x="750.70" y="1193.66" width="8.15" height="8.09" fill="#f8eaff"/><rect x="758.25" y="1193.66" width="8.15" height="8.09" fill="#fae8fe"/><rect x="765.80" y="1193.66" width="8.15" height="8.09" fill="#fae6fc"/><rect x="773.35" y="1193.66" width="8.15" height="8.09" fill="#fbe4f9"/><rect x="780.91" y="1193.66" width="8.15" height="8.09" fill="#fbe2f7"/><rect x="788.46" y="1193.66" width="8.15" height="8.09" fill="#fce0f5"/><rect x="796.01" y="1193.66" width="8.15" height="8.09" fill="#fcdef3"/><rect x="803.56" y="1193.66" width="8.15" height="8.09" fill="#fcddf0"/><rect x="811.11" y="1193.66" width="8.15" height="8.09" fill="#fddbee"/><rect x="818.67" y="1193.66" width="8.15" height="8.09" fill="#fdd9ec"/><rect x="826.22" y="1193.66" width="8.15" height="8.09" fill="#fed7ea"/><rect x="833.77" y="1193.66" width="8.15" height="8.09" fill="#fed5e7"/><rect x="841.32" y="1193.66" width="8.15" height="8.09" fill="#ffd3e5"/><rect x="848.88" y="1193.66" width="8.15" height="8.09" fill="#ffd0e2"/><rect x="856.43" y="1193.66" width="8.15" height="8.09" fill="#ffcddf"/><rect x="863.98" y="1193.66" width="8.15" height="8.09" fill="#ffcadc"/><rect x="871.53" y="1193.66" width="8.15" height="8.09" fill="#ffc7d9"/><rect x="879.08" y="1193.66" width="8.15" height="8.09" fill="#ffc4d6"/><rect x="886.64" y="1193.66" width="8.15" height="8.09" fill="#ffc0d2"/><rect x="894.19" y="1193.66" width="8.15" height="8.09" fill="#ffbdcf"/><rect x="901.74" y="1193.66" width="8.15" height="8.09" fill="#ffbacc"/><rect x="909.29" y="1193.66" width="8.15" height="8.09" fill="#ffb7c9"/><rect x="916.84" y="1193.66" width="8.15" height="8.09" fill="#ffb4c6"/><rect x="924.40" y="1193.66" width="8.15" height="8.09" fill="#ffb1c2"/><rect x="931.95" y="1193.66" width="8.15" height="8.09" fill="#ffaebf"/><rect x="939.50" y="1193.66" width="8.15" height="8.09" fill="#ffacbe"/><rect x="569.45" y="1201.14" width="8.15" height="8.09" fill="#a4e6ff"/><rect x="577.00" y="1201.14" width="8.15" height="8.09" fill="#a5e6ff"/><rect x="584.55" y="1201.14" width="8.15" height="8.09" fill="#a9e7ff"/><rect x="592.10" y="1201.14" width="8.15" height="8.09" fill="#ade7ff"/><rect x="599.66" y="1201.14" width="8.15" height="8.09" fill="#b0e7ff"/><rect x="607.21" y="1201.14" width="8.15" height="8.09" fill="#b4e8ff"/><rect x="614.76" y="1201.14" width="8.15" height="8.09" fill="#b8e8ff"/><rect x="622.31" y="1201.14" width="8.15" height="8.09" fill="#bbe8ff"/><rect x="629.86" y="1201.14" width="8.15" height="8.09" fill="#bfe9ff"/><rect x="637.42" y="1201.14" width="8.15" height="8.09" fill="#c3e9ff"/><rect x="644.97" y="1201.14" width="8.15" height="8.09" fill="#c6e9ff"/><rect x="652.52" y="1201.14" width="8.15" height="8.09" fill="#caeaff"/><rect x="660.07" y="1201.14" width="8.15" height="8.09" fill="#cdeaff"/><rect x="667.62" y="1201.14" width="8.15" height="8.09" fill="#d1eaff"/><rect x="675.18" y="1201.14" width="8.15" height="8.09" fill="#d4eaff"/><rect x="682.73" y="1201.14" width="8.15" height="8.09" fill="#d8e9ff"/><rect x="690.28" y="1201.14" width="8.15" height="8.09" fill="#dbe9ff"/><rect x="697.83" y="1201.14" width="8.15" height="8.09" fill="#dfe9ff"/><rect x="705.39" y="1201.14" width="8.15" height="8.09" fill="#e2e8ff"/><rect x="712.94" y="1201.14" width="8.15" height="8.09" fill="#e6e8ff"/><rect x="720.49" y="1201.14" width="8.15" height="8.09" fill="#e9e8ff"/><rect x="728.04" y="1201.14" width="8.15" height="8.09" fill="#ede7ff"/><rect x="735.59" y="1201.14" width="8.15" height="8.09" fill="#f0e7ff"/><rect x="743.15" y="1201.14" width="8.15" height="8.09" fill="#f3e7ff"/><rect x="750.70" y="1201.14" width="8.15" height="8.09" fill="#f7e6ff"/><rect x="758.25" y="1201.14" width="8.15" height="8.09" fill="#f9e5fe"/><rect x="765.80" y="1201.14" width="8.15" height="8.09" fill="#f9e3fc"/><rect x="773.35" y="1201.14" width="8.15" height="8.09" fill="#fae1f9"/><rect x="780.91" y="1201.14" width="8.15" height="8.09" fill="#fadff7"/><rect x="788.46" y="1201.14" width="8.15" height="8.09" fill="#fbddf5"/><rect x="796.01" y="1201.14" width="8.15" height="8.09" fill="#fcdbf3"/><rect x="803.56" y="1201.14" width="8.15" height="8.09" fill="#fcd9f0"/><rect x="811.11" y="1201.14" width="8.15" height="8.09" fill="#fdd7ee"/><rect x="818.67" y="1201.14" width="8.15" height="8.09" fill="#fdd5ec"/><rect x="826.22" y="1201.14" width="8.15" height="8.09" fill="#fed3ea"/><rect x="833.77" y="1201.14" width="8.15" height="8.09" fill="#fed1e7"/><rect x="841.32" y="1201.14" width="8.15" height="8.09" fill="#ffcfe5"/><rect x="848.88" y="1201.14" width="8.15" height="8.09" fill="#ffcde2"/><rect x="856.43" y="1201.14" width="8.15" height="8.09" fill="#ffcadf"/><rect x="863.98" y="1201.14" width="8.15" height="8.09" fill="#ffc7dc"/><rect x="871.53" y="1201.14" width="8.15" height="8.09" fill="#ffc4d9"/><rect x="879.08" y="1201.14" width="8.15" height="8.09" fill="#ffc1d6"/><rect x="886.64" y="1201.14" width="8.15" height="8.09" fill="#ffbed3"/><rect x="894.19" y="1201.14" width="8.15" height="8.09" fill="#ffbbd0"/><rect x="901.74" y="1201.14" width="8.15" height="8.09" fill="#ffb7cd"/><rect x="909.29" y="1201.14" width="8.15" height="8.09" fill="#ffb4ca"/><rect x="916.84" y="1201.14" width="8.15" height="8.09" fill="#ffb1c7"/><rect x="924.40" y="1201.14" width="8.15" height="8.09" fill="#ffaec4"/><rect x="931.95" y="1201.14" width="8.15" height="8.09" fill="#ffabc1"/><rect x="939.50" y="1201.14" width="8.15" height="8.09" fill="#ffaabf"/><rect x="569.45" y="1208.63" width="8.15" height="8.09" fill="#a4e3ff"/><rect x="577.00" y="1208.63" width="8.15" height="8.09" fill="#a6e3ff"/><rect x="584.55" y="1208.63" width="8.15" height="8.09" fill="#aae4ff"/><rect x="592.10" y="1208.63" width="8.15" height="8.09" fill="#ade4ff"/><rect x="599.66" y="1208.63" width="8.15" height="8.09" fill="#b1e4ff"/><rect x="607.21" y="1208.63" width="8.15" height="8.09" fill="#b5e5ff"/><rect x="614.76" y="1208.63" width="8.15" height="8.09" fill="#b8e5ff"/><rect x="622.31" y="1208.63" width="8.15" height="8.09" fill="#bce5ff"/><rect x="629.86" y="1208.63" width="8.15" height="8.09" fill="#c0e6ff"/><rect x="637.42" y="1208.63" width="8.15" height="8.09" fill="#c3e6ff"/><rect x="644.97" y="1208.63" width="8.15" height="8.09" fill="#c7e6ff"/><rect x="652.52" y="1208.63" width="8.15" height="8.09" fill="#cbe7ff"/><rect x="660.07" y="1208.63" width="8.15" height="8.09" fill="#cee7ff"/><rect x="667.62" y="1208.63" width="8.15" height="8.09" fill="#d2e7ff"/><rect x="675.18" y="1208.63" width="8.15" height="8.09" fill="#d5e7ff"/><rect x="682.73" y="1208.63" width="8.15" height="8.09" fill="#d8e6ff"/><rect x="690.28" y="1208.63" width="8.15" height="8.09" fill="#dce6ff"/><rect x="697.83" y="1208.63" width="8.15" height="8.09" fill="#dfe6ff"/><rect x="705.39" y="1208.63" width="8.15" height="8.09" fill="#e2e5ff"/><rect x="712.94" y="1208.63" width="8.15" height="8.09" fill="#e6e5ff"/><rect x="720.49" y="1208.63" width="8.15" height="8.09" fill="#e9e5ff"/><rect x="728.04" y="1208.63" width="8.15" height="8.09" fill="#ece4ff"/><rect x="735.59" y="1208.63" width="8.15" height="8.09" fill="#f0e4ff"/><rect x="743.15" y="1208.63" width="8.15" height="8.09" fill="#f3e4ff"/><rect x="750.70" y="1208.63" width="8.15" height="8.09" fill="#f6e3ff"/><rect x="758.25" y="1208.63" width="8.15" height="8.09" fill="#f8e2fe"/><rect x="765.80" y="1208.63" width="8.15" height="8.09" fill="#f9e0fc"/><rect x="773.35" y="1208.63" width="8.15" height="8.09" fill="#fadef9"/><rect x="780.91" y="1208.63" width="8.15" height="8.09" fill="#fadcf7"/><rect x="788.46" y="1208.63" width="8.15" height="8.09" fill="#fbdaf5"/><rect x="796.01" y="1208.63" width="8.15" height="8.09" fill="#fbd8f2"/><rect x="803.56" y="1208.63" width="8.15" height="8.09" fill="#fcd6f0"/><rect x="811.11" y="1208.63" width="8.15" height="8.09" fill="#fcd4ee"/><rect x="818.67" y="1208.63" width="8.15" height="8.09" fill="#fdd2ec"/><rect x="826.22" y="1208.63" width="8.15" height="8.09" fill="#fed0e9"/><rect x="833.77" y="1208.63" width="8.15" height="8.09" fill="#fecee7"/><rect x="841.32" y="1208.63" width="8.15" height="8.09" fill="#ffcce5"/><rect x="848.88" y="1208.63" width="8.15" height="8.09" fill="#ffc9e2"/><rect x="856.43" y="1208.63" width="8.15" height="8.09" fill="#ffc6df"/><rect x="863.98" y="1208.63" width="8.15" height="8.09" fill="#ffc4dc"/><rect x="871.53" y="1208.63" width="8.15" height="8.09" fill="#ffc1d9"/><rect x="879.08" y="1208.63" width="8.15" height="8.09" fill="#ffbed6"/><rect x="886.64" y="1208.63" width="8.15" height="8.09" fill="#ffbbd3"/><rect x="894.19" y="1208.63" width="8.15" height="8.09" fill="#ffb8d0"/><rect x="901.74" y="1208.63" width="8.15" height="8.09" fill="#ffb5cd"/><rect x="909.29" y="1208.63" width="8.15" height="8.09" fill="#ffb2ca"/><rect x="916.84" y="1208.63" width="8.15" height="8.09" fill="#ffafc7"/><rect x="924.40" y="1208.63" width="8.15" height="8.09" fill="#ffacc4"/><rect x="931.95" y="1208.63" width="8.15" height="8.09" fill="#ffa9c1"/><rect x="939.50" y="1208.63" width="8.15" height="8.09" fill="#ffa7c0"/><rect x="569.45" y="1216.11" width="8.15" height="8.09" fill="#a5e0ff"/><rect x="577.00" y="1216.11" width="8.15" height="8.09" fill="#a6e0ff"/><rect x="584.55" y="1216.11" width="8.15" height="8.09" fill="#aae0ff"/><rect x="592.10" y="1216.11" width="8.15" height="8.09" fill="#aee1ff"/><rect x="599.66" y="1216.11" width="8.15" height="8.09" fill="#b1e1ff"/><rect x="607.21" y="1216.11" width="8.15" height="8.09" fill="#b5e1ff"/><rect x="614.76" y="1216.11" width="8.15" height="8.09" fill="#b8e2ff"/><rect x="622.31" y="1216.11" width="8.15" height="8.09" fill="#bce2ff"/><rect x="629.86" y="1216.11" width="8.15" height="8.09" fill="#c0e2ff"/><rect x="637.42" y="1216.11" width="8.15" height="8.09" fill="#c3e2ff"/><rect x="644.97" y="1216.11" width="8.15" height="8.09" fill="#c7e3ff"/><rect x="652.52" y="1216.11" width="8.15" height="8.09" fill="#cbe3ff"/><rect x="660.07" y="1216.11" width="8.15" height="8.09" fill="#cee3ff"/><rect x="667.62" y="1216.11" width="8.15" height="8.09" fill="#d2e3ff"/><rect x="675.18" y="1216.11" width="8.15" height="8.09" fill="#d5e3ff"/><rect x="682.73" y="1216.11" width="8.15" height="8.09" fill="#d8e3ff"/><rect x="690.28" y="1216.11" width="8.15" height="8.09" fill="#dce2ff"/><rect x="697.83" y="1216.11" width="8.15" height="8.09" fill="#dfe2ff"/><rect x="705.39" y="1216.11" width="8.15" height="8.09" fill="#e3e2ff"/><rect x="712.94" y="1216.11" width="8.15" height="8.09" fill="#e6e1ff"/><rect x="720.49" y="1216.11" width="8.15" height="8.09" fill="#e9e1ff"/><rect x="728.04" y="1216.11" width="8.15" height="8.09" fill="#ede1ff"/><rect x="735.59" y="1216.11" width="8.15" height="8.09" fill="#f0e0ff"/><rect x="743.15" y="1216.11" width="8.15" height="8.09" fill="#f4e0ff"/><rect x="750.70" y="1216.11" width="8.15" height="8.09" fill="#f7e0ff"/><rect x="758.25" y="1216.11" width="8.15" height="8.09" fill="#f9defd"/><rect x="765.80" y="1216.11" width="8.15" height="8.09" fill="#f9dcfb"/><rect x="773.35" y="1216.11" width="8.15" height="8.09" fill="#fadaf9"/><rect x="780.91" y="1216.11" width="8.15" height="8.09" fill="#fad8f6"/><rect x="788.46" y="1216.11" width="8.15" height="8.09" fill="#fbd6f4"/><rect x="796.01" y="1216.11" width="8.15" height="8.09" fill="#fcd4f2"/><rect x="803.56" y="1216.11" width="8.15" height="8.09" fill="#fcd2ef"/><rect x="811.11" y="1216.11" width="8.15" height="8.09" fill="#fdd0ed"/><rect x="818.67" y="1216.11" width="8.15" height="8.09" fill="#fdceeb"/><rect x="826.22" y="1216.11" width="8.15" height="8.09" fill="#fecce8"/><rect x="833.77" y="1216.11" width="8.15" height="8.09" fill="#fecae6"/><rect x="841.32" y="1216.11" width="8.15" height="8.09" fill="#ffc8e3"/><rect x="848.88" y="1216.11" width="8.15" height="8.09" fill="#ffc5e1"/><rect x="856.43" y="1216.11" width="8.15" height="8.09" fill="#ffc2de"/><rect x="863.98" y="1216.11" width="8.15" height="8.09" fill="#ffc0db"/><rect x="871.53" y="1216.11" width="8.15" height="8.09" fill="#ffbdd8"/><rect x="879.08" y="1216.11" width="8.15" height="8.09" fill="#ffbad5"/><rect x="886.64" y="1216.11" width="8.15" height="8.09" fill="#ffb7d2"/><rect x="894.19" y="1216.11" width="8.15" height="8.09" fill="#ffb4cf"/><rect x="901.74" y="1216.11" width="8.15" height="8.09" fill="#ffb1cc"/><rect x="909.29" y="1216.11" width="8.15" height="8.09" fill="#ffaec9"/><rect x="916.84" y="1216.11" width="8.15" height="8.09" fill="#ffabc6"/><rect x="924.40" y="1216.11" width="8.15" height="8.09" fill="#ffa8c3"/><rect x="931.95" y="1216.11" width="8.15" height="8.09" fill="#ffa5c0"/><rect x="939.50" y="1216.11" width="8.15" height="8.09" fill="#ffa4bf"/><rect x="569.45" y="1223.60" width="8.15" height="8.09" fill="#a5ddff"/><rect x="577.00" y="1223.60" width="8.15" height="8.09" fill="#a7ddff"/><rect x="584.55" y="1223.60" width="8.15" height="8.09" fill="#aaddff"/><rect x="592.10" y="1223.60" width="8.15" height="8.09" fill="#aeddff"/><rect x="599.66" y="1223.60" width="8.15" height="8.09" fill="#b2deff"/><rect x="607.21" y="1223.60" width="8.15" height="8.09" fill="#b5deff"/><rect x="614.76" y="1223.60" width="8.15" height="8.09" fill="#b9deff"/><rect x="622.31" y="1223.60" width="8.15" height="8.09" fill="#bcdeff"/><rect x="629.86" y="1223.60" width="8.15" height="8.09" fill="#c0dfff"/><rect x="637.42" y="1223.60" width="8.15" height="8.09" fill="#c3dfff"/><rect x="644.97" y="1223.60" width="8.15" height="8.09" fill="#c7dfff"/><rect x="652.52" y="1223.60" width="8.15" height="8.09" fill="#cbdfff"/><rect x="660.07" y="1223.60" width="8.15" height="8.09" fill="#cee0ff"/><rect x="667.62" y="1223.60" width="8.15" height="8.09" fill="#d2e0ff"/><rect x="675.18" y="1223.60" width="8.15" height="8.09" fill="#d5dfff"/><rect x="682.73" y="1223.60" width="8.15" height="8.09" fill="#d9dfff"/><rect x="690.28" y="1223.60" width="8.15" height="8.09" fill="#dcdfff"/><rect x="697.83" y="1223.60" width="8.15" height="8.09" fill="#dfdeff"/><rect x="705.39" y="1223.60" width="8.15" height="8.09" fill="#e3deff"/><rect x="712.94" y="1223.60" width="8.15" height="8.09" fill="#e6deff"/><rect x="720.49" y="1223.60" width="8.15" height="8.09" fill="#eaddff"/><rect x="728.04" y="1223.60" width="8.15" height="8.09" fill="#edddfe"/><rect x="735.59" y="1223.60" width="8.15" height="8.09" fill="#f0ddfe"/><rect x="743.15" y="1223.60" width="8.15" height="8.09" fill="#f4dcfe"/><rect x="750.70" y="1223.60" width="8.15" height="8.09" fill="#f7dcfe"/><rect x="758.25" y="1223.60" width="8.15" height="8.09" fill="#f9dbfd"/><rect x="765.80" y="1223.60" width="8.15" height="8.09" fill="#fad9fb"/><rect x="773.35" y="1223.60" width="8.15" height="8.09" fill="#fad7f8"/><rect x="780.91" y="1223.60" width="8.15" height="8.09" fill="#fbd4f6"/><rect x="788.46" y="1223.60" width="8.15" height="8.09" fill="#fbd2f3"/><rect x="796.01" y="1223.60" width="8.15" height="8.09" fill="#fcd0f1"/><rect x="803.56" y="1223.60" width="8.15" height="8.09" fill="#fcceee"/><rect x="811.11" y="1223.60" width="8.15" height="8.09" fill="#fdccec"/><rect x="818.67" y="1223.60" width="8.15" height="8.09" fill="#fdcae9"/><rect x="826.22" y="1223.60" width="8.15" height="8.09" fill="#fec8e7"/><rect x="833.77" y="1223.60" width="8.15" height="8.09" fill="#fec6e5"/><rect x="841.32" y="1223.60" width="8.15" height="8.09" fill="#ffc4e2"/><rect x="848.88" y="1223.60" width="8.15" height="8.09" fill="#ffc1df"/><rect x="856.43" y="1223.60" width="8.15" height="8.09" fill="#ffbedd"/><rect x="863.98" y="1223.60" width="8.15" height="8.09" fill="#ffbcda"/><rect x="871.53" y="1223.60" width="8.15" height="8.09" fill="#ffb9d7"/><rect x="879.08" y="1223.60" width="8.15" height="8.09" fill="#ffb6d4"/><rect x="886.64" y="1223.60" width="8.15" height="8.09" fill="#ffb3d1"/><rect x="894.19" y="1223.60" width="8.15" height="8.09" fill="#ffb0ce"/><rect x="901.74" y="1223.60" width="8.15" height="8.09" fill="#ffaecb"/><rect x="909.29" y="1223.60" width="8.15" height="8.09" fill="#ffabc8"/><rect x="916.84" y="1223.60" width="8.15" height="8.09" fill="#ffa8c5"/><rect x="924.40" y="1223.60" width="8.15" height="8.09" fill="#ffa5c2"/><rect x="931.95" y="1223.60" width="8.15" height="8.09" fill="#ffa2bf"/><rect x="939.50" y="1223.60" width="8.15" height="8.09" fill="#ffa1be"/><rect x="569.45" y="1231.09" width="8.15" height="8.09" fill="#a5daff"/><rect x="577.00" y="1231.09" width="8.15" height="8.09" fill="#a7daff"/><rect x="584.55" y="1231.09" width="8.15" height="8.09" fill="#abdaff"/><rect x="592.10" y="1231.09" width="8.15" height="8.09" fill="#aedaff"/><rect x="599.66" y="1231.09" width="8.15" height="8.09" fill="#b2daff"/><rect x="607.21" y="1231.09" width="8.15" height="8.09" fill="#b5dbff"/><rect x="614.76" y="1231.09" width="8.15" height="8.09" fill="#b9dbff"/><rect x="622.31" y="1231.09" width="8.15" height="8.09" fill="#bddbff"/><rect x="629.86" y="1231.09" width="8.15" height="8.09" fill="#c0dbff"/><rect x="637.42" y="1231.09" width="8.15" height="8.09" fill="#c4dbff"/><rect x="644.97" y="1231.09" width="8.15" height="8.09" fill="#c7dcff"/><rect x="652.52" y="1231.09" width="8.15" height="8.09" fill="#cbdcff"/><rect x="660.07" y="1231.09" width="8.15" height="8.09" fill="#cedcff"/><rect x="667.62" y="1231.09" width="8.15" height="8.09" fill="#d2dcff"/><rect x="675.18" y="1231.09" width="8.15" height="8.09" fill="#d5dcff"/><rect x="682.73" y="1231.09" width="8.15" height="8.09" fill="#d9dbff"/><rect x="690.28" y="1231.09" width="8.15" height="8.09" fill="#dcdbff"/><rect x="697.83" y="1231.09" width="8.15" height="8.09" fill="#e0dbff"/><rect x="705.39" y="1231.09" width="8.15" height="8.09" fill="#e3dafe"/><rect x="712.94" y="1231.09" width="8.15" height="8.09" fill="#e6dafe"/><rect x="720.49" y="1231.09" width="8.15" height="8.09" fill="#eadafe"/><rect x="728.04" y="1231.09" width="8.15" height="8.09" fill="#edd9fe"/><rect x="735.59" y="1231.09" width="8.15" height="8.09" fill="#f1d9fe"/><rect x="743.15" y="1231.09" width="8.15" height="8.09" fill="#f4d9fe"/><rect x="750.70" y="1231.09" width="8.15" height="8.09" fill="#f8d8fe"/><rect x="758.25" y="1231.09" width="8.15" height="8.09" fill="#fad7fd"/><rect x="765.80" y="1231.09" width="8.15" height="8.09" fill="#fad5fa"/><rect x="773.35" y="1231.09" width="8.15" height="8.09" fill="#fbd3f8"/><rect x="780.91" y="1231.09" width="8.15" height="8.09" fill="#fbd1f5"/><rect x="788.46" y="1231.09" width="8.15" height="8.09" fill="#fccff3"/><rect x="796.01" y="1231.09" width="8.15" height="8.09" fill="#fcccf0"/><rect x="803.56" y="1231.09" width="8.15" height="8.09" fill="#fccaed"/><rect x="811.11" y="1231.09" width="8.15" height="8.09" fill="#fdc8eb"/><rect x="818.67" y="1231.09" width="8.15" height="8.09" fill="#fdc6e8"/><rect x="826.22" y="1231.09" width="8.15" height="8.09" fill="#fec4e6"/><rect x="833.77" y="1231.09" width="8.15" height="8.09" fill="#fec2e3"/><rect x="841.32" y="1231.09" width="8.15" height="8.09" fill="#ffc0e1"/><rect x="848.88" y="1231.09" width="8.15" height="8.09" fill="#ffbdde"/><rect x="856.43" y="1231.09" width="8.15" height="8.09" fill="#ffbadb"/><rect x="863.98" y="1231.09" width="8.15" height="8.09" fill="#ffb8d8"/><rect x="871.53" y="1231.09" width="8.15" height="8.09" fill="#ffb5d5"/><rect x="879.08" y="1231.09" width="8.15" height="8.09" fill="#ffb2d3"/><rect x="886.64" y="1231.09" width="8.15" height="8.09" fill="#ffafd0"/><rect x="894.19" y="1231.09" width="8.15" height="8.09" fill="#ffadcd"/><rect x="901.74" y="1231.09" width="8.15" height="8.09" fill="#ffaaca"/><rect x="909.29" y="1231.09" width="8.15" height="8.09" fill="#ffa7c7"/><rect x="916.84" y="1231.09" width="8.15" height="8.09" fill="#ffa4c4"/><rect x="924.40" y="1231.09" width="8.15" height="8.09" fill="#ffa2c1"/><rect x="931.95" y="1231.09" width="8.15" height="8.09" fill="#ff9fbe"/><rect x="939.50" y="1231.09" width="8.15" height="8.09" fill="#ff9ebd"/><rect x="569.45" y="1238.57" width="8.15" height="8.09" fill="#a6d6ff"/><rect x="577.00" y="1238.57" width="8.15" height="8.09" fill="#a8d6ff"/><rect x="584.55" y="1238.57" width="8.15" height="8.09" fill="#abd7ff"/><rect x="592.10" y="1238.57" width="8.15" height="8.09" fill="#afd7ff"/><rect x="599.66" y="1238.57" width="8.15" height="8.09" fill="#b2d7ff"/><rect x="607.21" y="1238.57" width="8.15" height="8.09" fill="#b6d7ff"/><rect x="614.76" y="1238.57" width="8.15" height="8.09" fill="#b9d7ff"/><rect x="622.31" y="1238.57" width="8.15" height="8.09" fill="#bdd8ff"/><rect x="629.86" y="1238.57" width="8.15" height="8.09" fill="#c0d8ff"/><rect x="637.42" y="1238.57" width="8.15" height="8.09" fill="#c4d8ff"/><rect x="644.97" y="1238.57" width="8.15" height="8.09" fill="#c7d8ff"/><rect x="652.52" y="1238.57" width="8.15" height="8.09" fill="#cbd8ff"/><rect x="660.07" y="1238.57" width="8.15" height="8.09" fill="#ced8ff"/><rect x="667.62" y="1238.57" width="8.15" height="8.09" fill="#d2d8ff"/><rect x="675.18" y="1238.57" width="8.15" height="8.09" fill="#d5d8ff"/><rect x="682.73" y="1238.57" width="8.15" height="8.09" fill="#d9d8ff"/><rect x="690.28" y="1238.57" width="8.15" height="8.09" fill="#dcd7ff"/><rect x="697.83" y="1238.57" width="8.15" height="8.09" fill="#e0d7fe"/><rect x="705.39" y="1238.57" width="8.15" height="8.09" fill="#e3d7fe"/><rect x="712.94" y="1238.57" width="8.15" height="8.09" fill="#e7d6fe"/><rect x="720.49" y="1238.57" width="8.15" height="8.09" fill="#ead6fe"/><rect x="728.04" y="1238.57" width="8.15" height="8.09" fill="#eed6fe"/><rect x="735.59" y="1238.57" width="8.15" height="8.09" fill="#f1d5fe"/><rect x="743.15" y="1238.57" width="8.15" height="8.09" fill="#f5d5fe"/><rect x="750.70" y="1238.57" width="8.15" height="8.09" fill="#f8d5fe"/><rect x="758.25" y="1238.57" width="8.15" height="8.09" fill="#fad3fc"/><rect x="765.80" y="1238.57" width="8.15" height="8.09" fill="#fbd1fa"/><rect x="773.35" y="1238.57" width="8.15" height="8.09" fill="#fbcff7"/><rect x="780.91" y="1238.57" width="8.15" height="8.09" fill="#fbcdf4"/><rect x="788.46" y="1238.57" width="8.15" height="8.09" fill="#fccbf2"/><rect x="796.01" y="1238.57" width="8.15" height="8.09" fill="#fcc9ef"/><rect x="803.56" y="1238.57" width="8.15" height="8.09" fill="#fdc6ed"/><rect x="811.11" y="1238.57" width="8.15" height="8.09" fill="#fdc4ea"/><rect x="818.67" y="1238.57" width="8.15" height="8.09" fill="#fec2e7"/><rect x="826.22" y="1238.57" width="8.15" height="8.09" fill="#fec0e5"/><rect x="833.77" y="1238.57" width="8.15" height="8.09" fill="#febee2"/><rect x="841.32" y="1238.57" width="8.15" height="8.09" fill="#ffbcdf"/><rect x="848.88" y="1238.57" width="8.15" height="8.09" fill="#ffb9dd"/><rect x="856.43" y="1238.57" width="8.15" height="8.09" fill="#ffb6da"/><rect x="863.98" y="1238.57" width="8.15" height="8.09" fill="#ffb4d7"/><rect x="871.53" y="1238.57" width="8.15" height="8.09" fill="#ffb1d4"/><rect x="879.08" y="1238.57" width="8.15" height="8.09" fill="#ffaed1"/><rect x="886.64" y="1238.57" width="8.15" height="8.09" fill="#ffaccf"/><rect x="894.19" y="1238.57" width="8.15" height="8.09" fill="#ffa9cc"/><rect x="901.74" y="1238.57" width="8.15" height="8.09" fill="#ffa6c9"/><rect x="909.29" y="1238.57" width="8.15" height="8.09" fill="#ffa4c6"/><rect x="916.84" y="1238.57" width="8.15" height="8.09" fill="#ffa1c3"/><rect x="924.40" y="1238.57" width="8.15" height="8.09" fill="#ff9ec0"/><rect x="931.95" y="1238.57" width="8.15" height="8.09" fill="#ff9cbe"/><rect x="939.50" y="1238.57" width="8.15" height="8.09" fill="#ff9abc"/><rect x="569.45" y="1246.06" width="8.15" height="8.09" fill="#a6d3ff"/><rect x="577.00" y="1246.06" width="8.15" height="8.09" fill="#a8d3ff"/><rect x="584.55" y="1246.06" width="8.15" height="8.09" fill="#acd3ff"/><rect x="592.10" y="1246.06" width="8.15" height="8.09" fill="#afd4ff"/><rect x="599.66" y="1246.06" width="8.15" height="8.09" fill="#b3d4ff"/><rect x="607.21" y="1246.06" width="8.15" height="8.09" fill="#b6d4ff"/><rect x="614.76" y="1246.06" width="8.15" height="8.09" fill="#b9d4ff"/><rect x="622.31" y="1246.06" width="8.15" height="8.09" fill="#bdd4ff"/><rect x="629.86" y="1246.06" width="8.15" height="8.09" fill="#c0d4ff"/><rect x="637.42" y="1246.06" width="8.15" height="8.09" fill="#c4d4ff"/><rect x="644.97" y="1246.06" width="8.15" height="8.09" fill="#c7d4ff"/><rect x="652.52" y="1246.06" width="8.15" height="8.09" fill="#cbd5ff"/><rect x="660.07" y="1246.06" width="8.15" height="8.09" fill="#ced5ff"/><rect x="667.62" y="1246.06" width="8.15" height="8.09" fill="#d2d5ff"/><rect x="675.18" y="1246.06" width="8.15" height="8.09" fill="#d5d4ff"/><rect x="682.73" y="1246.06" width="8.15" height="8.09" fill="#d9d4ff"/><rect x="690.28" y="1246.06" width="8.15" height="8.09" fill="#dcd4fe"/><rect x="697.83" y="1246.06" width="8.15" height="8.09" fill="#e0d3fe"/><rect x="705.39" y="1246.06" width="8.15" height="8.09" fill="#e3d3fe"/><rect x="712.94" y="1246.06" width="8.15" height="8.09" fill="#e7d3fe"/><rect x="720.49" y="1246.06" width="8.15" height="8.09" fill="#ead2fe"/><rect x="728.04" y="1246.06" width="8.15" height="8.09" fill="#eed2fe"/><rect x="735.59" y="1246.06" width="8.15" height="8.09" fill="#f2d2fe"/><rect x="743.15" y="1246.06" width="8.15" height="8.09" fill="#f5d1fd"/><rect x="750.70" y="1246.06" width="8.15" height="8.09" fill="#f9d1fd"/><rect x="758.25" y="1246.06" width="8.15" height="8.09" fill="#fbd0fc"/><rect x="765.80" y="1246.06" width="8.15" height="8.09" fill="#fbcef9"/><rect x="773.35" y="1246.06" width="8.15" height="8.09" fill="#fbcbf6"/><rect x="780.91" y="1246.06" width="8.15" height="8.09" fill="#fcc9f4"/><rect x="788.46" y="1246.06" width="8.15" height="8.09" fill="#fcc7f1"/><rect x="796.01" y="1246.06" width="8.15" height="8.09" fill="#fdc5ee"/><rect x="803.56" y="1246.06" width="8.15" height="8.09" fill="#fdc2ec"/><rect x="811.11" y="1246.06" width="8.15" height="8.09" fill="#fdc0e9"/><rect x="818.67" y="1246.06" width="8.15" height="8.09" fill="#febee6"/><rect x="826.22" y="1246.06" width="8.15" height="8.09" fill="#febce4"/><rect x="833.77" y="1246.06" width="8.15" height="8.09" fill="#febae1"/><rect x="841.32" y="1246.06" width="8.15" height="8.09" fill="#ffb8de"/><rect x="848.88" y="1246.06" width="8.15" height="8.09" fill="#ffb5db"/><rect x="856.43" y="1246.06" width="8.15" height="8.09" fill="#ffb2d9"/><rect x="863.98" y="1246.06" width="8.15" height="8.09" fill="#ffb0d6"/><rect x="871.53" y="1246.06" width="8.15" height="8.09" fill="#ffadd3"/><rect x="879.08" y="1246.06" width="8.15" height="8.09" fill="#ffabd0"/><rect x="886.64" y="1246.06" width="8.15" height="8.09" fill="#ffa8cd"/><rect x="894.19" y="1246.06" width="8.15" height="8.09" fill="#ffa6cb"/><rect x="901.74" y="1246.06" width="8.15" height="8.09" fill="#ffa3c8"/><rect x="909.29" y="1246.06" width="8.15" height="8.09" fill="#ffa0c5"/><rect x="916.84" y="1246.06" width="8.15" height="8.09" fill="#ff9ec2"/><rect x="924.40" y="1246.06" width="8.15" height="8.09" fill="#ff9bbf"/><rect x="931.95" y="1246.06" width="8.15" height="8.09" fill="#ff98bd"/><rect x="939.50" y="1246.06" width="8.15" height="8.09" fill="#ff97bb"/><rect x="569.45" y="1253.54" width="8.15" height="8.09" fill="#a7d0ff"/><rect x="577.00" y="1253.54" width="8.15" height="8.09" fill="#a9d0ff"/><rect x="584.55" y="1253.54" width="8.15" height="8.09" fill="#acd0ff"/><rect x="592.10" y="1253.54" width="8.15" height="8.09" fill="#afd0ff"/><rect x="599.66" y="1253.54" width="8.15" height="8.09" fill="#b3d0ff"/><rect x="607.21" y="1253.54" width="8.15" height="8.09" fill="#b6d0ff"/><rect x="614.76" y="1253.54" width="8.15" height="8.09" fill="#bad1ff"/><rect x="622.31" y="1253.54" width="8.15" height="8.09" fill="#bdd1ff"/><rect x="629.86" y="1253.54" width="8.15" height="8.09" fill="#c1d1ff"/><rect x="637.42" y="1253.54" width="8.15" height="8.09" fill="#c4d1ff"/><rect x="644.97" y="1253.54" width="8.15" height="8.09" fill="#c7d1ff"/><rect x="652.52" y="1253.54" width="8.15" height="8.09" fill="#cbd1ff"/><rect x="660.07" y="1253.54" width="8.15" height="8.09" fill="#ced1ff"/><rect x="667.62" y="1253.54" width="8.15" height="8.09" fill="#d2d1ff"/><rect x="675.18" y="1253.54" width="8.15" height="8.09" fill="#d5d1ff"/><rect x="682.73" y="1253.54" width="8.15" height="8.09" fill="#d9d0ff"/><rect x="690.28" y="1253.54" width="8.15" height="8.09" fill="#dcd0fe"/><rect x="697.83" y="1253.54" width="8.15" height="8.09" fill="#e0d0fe"/><rect x="705.39" y="1253.54" width="8.15" height="8.09" fill="#e4cffe"/><rect x="712.94" y="1253.54" width="8.15" height="8.09" fill="#e7cffe"/><rect x="720.49" y="1253.54" width="8.15" height="8.09" fill="#ebcffe"/><rect x="728.04" y="1253.54" width="8.15" height="8.09" fill="#eecefd"/><rect x="735.59" y="1253.54" width="8.15" height="8.09" fill="#f2cefd"/><rect x="743.15" y="1253.54" width="8.15" height="8.09" fill="#f6cefd"/><rect x="750.70" y="1253.54" width="8.15" height="8.09" fill="#f9cdfd"/><rect x="758.25" y="1253.54" width="8.15" height="8.09" fill="#fbccfb"/><rect x="765.80" y="1253.54" width="8.15" height="8.09" fill="#fbcaf9"/><rect x="773.35" y="1253.54" width="8.15" height="8.09" fill="#fcc8f6"/><rect x="780.91" y="1253.54" width="8.15" height="8.09" fill="#fcc5f3"/><rect x="788.46" y="1253.54" width="8.15" height="8.09" fill="#fcc3f0"/><rect x="796.01" y="1253.54" width="8.15" height="8.09" fill="#fdc1ee"/><rect x="803.56" y="1253.54" width="8.15" height="8.09" fill="#fdbfeb"/><rect x="811.11" y="1253.54" width="8.15" height="8.09" fill="#fdbce8"/><rect x="818.67" y="1253.54" width="8.15" height="8.09" fill="#febae5"/><rect x="826.22" y="1253.54" width="8.15" height="8.09" fill="#feb8e2"/><rect x="833.77" y="1253.54" width="8.15" height="8.09" fill="#feb6e0"/><rect x="841.32" y="1253.54" width="8.15" height="8.09" fill="#ffb3dd"/><rect x="848.88" y="1253.54" width="8.15" height="8.09" fill="#ffb1da"/><rect x="856.43" y="1253.54" width="8.15" height="8.09" fill="#ffaed7"/><rect x="863.98" y="1253.54" width="8.15" height="8.09" fill="#ffacd5"/><rect x="871.53" y="1253.54" width="8.15" height="8.09" fill="#ffa9d2"/><rect x="879.08" y="1253.54" width="8.15" height="8.09" fill="#ffa7cf"/><rect x="886.64" y="1253.54" width="8.15" height="8.09" fill="#ffa4cc"/><rect x="894.19" y="1253.54" width="8.15" height="8.09" fill="#ffa2c9"/><rect x="901.74" y="1253.54" width="8.15" height="8.09" fill="#ff9fc7"/><rect x="909.29" y="1253.54" width="8.15" height="8.09" fill="#ff9dc4"/><rect x="916.84" y="1253.54" width="8.15" height="8.09" fill="#ff9ac1"/><rect x="924.40" y="1253.54" width="8.15" height="8.09" fill="#ff98be"/><rect x="931.95" y="1253.54" width="8.15" height="8.09" fill="#ff95bc"/><rect x="939.50" y="1253.54" width="8.15" height="8.09" fill="#ff94ba"/><rect x="569.45" y="1261.03" width="8.15" height="8.09" fill="#a7cdff"/><rect x="577.00" y="1261.03" width="8.15" height="8.09" fill="#a9cdff"/><rect x="584.55" y="1261.03" width="8.15" height="8.09" fill="#accdff"/><rect x="592.10" y="1261.03" width="8.15" height="8.09" fill="#b0cdff"/><rect x="599.66" y="1261.03" width="8.15" height="8.09" fill="#b3cdff"/><rect x="607.21" y="1261.03" width="8.15" height="8.09" fill="#b7cdff"/><rect x="614.76" y="1261.03" width="8.15" height="8.09" fill="#bacdff"/><rect x="622.31" y="1261.03" width="8.15" height="8.09" fill="#bdcdff"/><rect x="629.86" y="1261.03" width="8.15" height="8.09" fill="#c1cdff"/><rect x="637.42" y="1261.03" width="8.15" height="8.09" fill="#c4cdff"/><rect x="644.97" y="1261.03" width="8.15" height="8.09" fill="#c8cdff"/><rect x="652.52" y="1261.03" width="8.15" height="8.09" fill="#cbcdff"/><rect x="660.07" y="1261.03" width="8.15" height="8.09" fill="#cecdff"/><rect x="667.62" y="1261.03" width="8.15" height="8.09" fill="#d2cdff"/><rect x="675.18" y="1261.03" width="8.15" height="8.09" fill="#d5cdff"/><rect x="682.73" y="1261.03" width="8.15" height="8.09" fill="#d9cdfe"/><rect x="690.28" y="1261.03" width="8.15" height="8.09" fill="#ddccfe"/><rect x="697.83" y="1261.03" width="8.15" height="8.09" fill="#e0ccfe"/><rect x="705.39" y="1261.03" width="8.15" height="8.09" fill="#e4ccfe"/><rect x="712.94" y="1261.03" width="8.15" height="8.09" fill="#e7cbfe"/><rect x="720.49" y="1261.03" width="8.15" height="8.09" fill="#ebcbfd"/><rect x="728.04" y="1261.03" width="8.15" height="8.09" fill="#efcbfd"/><rect x="735.59" y="1261.03" width="8.15" height="8.09" fill="#f2cafd"/><rect x="743.15" y="1261.03" width="8.15" height="8.09" fill="#f6cafd"/><rect x="750.70" y="1261.03" width="8.15" height="8.09" fill="#facafd"/><rect x="758.25" y="1261.03" width="8.15" height="8.09" fill="#fbc8fb"/><rect x="765.80" y="1261.03" width="8.15" height="8.09" fill="#fcc6f8"/><rect x="773.35" y="1261.03" width="8.15" height="8.09" fill="#fcc4f5"/><rect x="780.91" y="1261.03" width="8.15" height="8.09" fill="#fcc2f2"/><rect x="788.46" y="1261.03" width="8.15" height="8.09" fill="#fdbff0"/><rect x="796.01" y="1261.03" width="8.15" height="8.09" fill="#fdbded"/><rect x="803.56" y="1261.03" width="8.15" height="8.09" fill="#fdbbea"/><rect x="811.11" y="1261.03" width="8.15" height="8.09" fill="#feb8e7"/><rect x="818.67" y="1261.03" width="8.15" height="8.09" fill="#feb6e4"/><rect x="826.22" y="1261.03" width="8.15" height="8.09" fill="#feb4e1"/><rect x="833.77" y="1261.03" width="8.15" height="8.09" fill="#ffb2de"/><rect x="841.32" y="1261.03" width="8.15" height="8.09" fill="#ffafdb"/><rect x="848.88" y="1261.03" width="8.15" height="8.09" fill="#ffadd9"/><rect x="856.43" y="1261.03" width="8.15" height="8.09" fill="#ffaad6"/><rect x="863.98" y="1261.03" width="8.15" height="8.09" fill="#ffa8d3"/><rect x="871.53" y="1261.03" width="8.15" height="8.09" fill="#ffa6d1"/><rect x="879.08" y="1261.03" width="8.15" height="8.09" fill="#ffa3ce"/><rect x="886.64" y="1261.03" width="8.15" height="8.09" fill="#ffa1cb"/><rect x="894.19" y="1261.03" width="8.15" height="8.09" fill="#ff9ec8"/><rect x="901.74" y="1261.03" width="8.15" height="8.09" fill="#ff9cc6"/><rect x="909.29" y="1261.03" width="8.15" height="8.09" fill="#ff99c3"/><rect x="916.84" y="1261.03" width="8.15" height="8.09" fill="#ff97c0"/><rect x="924.40" y="1261.03" width="8.15" height="8.09" fill="#ff94bd"/><rect x="931.95" y="1261.03" width="8.15" height="8.09" fill="#ff92bb"/><rect x="939.50" y="1261.03" width="8.15" height="8.09" fill="#ff91b9"/><rect x="569.45" y="1268.51" width="8.15" height="8.09" fill="#a8caff"/><rect x="577.00" y="1268.51" width="8.15" height="8.09" fill="#a9caff"/><rect x="584.55" y="1268.51" width="8.15" height="8.09" fill="#adcaff"/><rect x="592.10" y="1268.51" width="8.15" height="8.09" fill="#b0caff"/><rect x="599.66" y="1268.51" width="8.15" height="8.09" fill="#b4caff"/><rect x="607.21" y="1268.51" width="8.15" height="8.09" fill="#b7caff"/><rect x="614.76" y="1268.51" width="8.15" height="8.09" fill="#bacaff"/><rect x="622.31" y="1268.51" width="8.15" height="8.09" fill="#becaff"/><rect x="629.86" y="1268.51" width="8.15" height="8.09" fill="#c1caff"/><rect x="637.42" y="1268.51" width="8.15" height="8.09" fill="#c4caff"/><rect x="644.97" y="1268.51" width="8.15" height="8.09" fill="#c8caff"/><rect x="652.52" y="1268.51" width="8.15" height="8.09" fill="#cbcaff"/><rect x="660.07" y="1268.51" width="8.15" height="8.09" fill="#cecaff"/><rect x="667.62" y="1268.51" width="8.15" height="8.09" fill="#d2caff"/><rect x="675.18" y="1268.51" width="8.15" height="8.09" fill="#d5c9ff"/><rect x="682.73" y="1268.51" width="8.15" height="8.09" fill="#d9c9fe"/><rect x="690.28" y="1268.51" width="8.15" height="8.09" fill="#ddc9fe"/><rect x="697.83" y="1268.51" width="8.15" height="8.09" fill="#e0c8fe"/><rect x="705.39" y="1268.51" width="8.15" height="8.09" fill="#e4c8fe"/><rect x="712.94" y="1268.51" width="8.15" height="8.09" fill="#e8c8fd"/><rect x="720.49" y="1268.51" width="8.15" height="8.09" fill="#ebc7fd"/><rect x="728.04" y="1268.51" width="8.15" height="8.09" fill="#efc7fd"/><rect x="735.59" y="1268.51" width="8.15" height="8.09" fill="#f3c7fd"/><rect x="743.15" y="1268.51" width="8.15" height="8.09" fill="#f6c6fd"/><rect x="750.70" y="1268.51" width="8.15" height="8.09" fill="#fac6fc"/><rect x="758.25" y="1268.51" width="8.15" height="8.09" fill="#fcc5fb"/><rect x="765.80" y="1268.51" width="8.15" height="8.09" fill="#fcc2f8"/><rect x="773.35" y="1268.51" width="8.15" height="8.09" fill="#fcc0f5"/><rect x="780.91" y="1268.51" width="8.15" height="8.09" fill="#fdbef2"/><rect x="788.46" y="1268.51" width="8.15" height="8.09" fill="#fdbbef"/><rect x="796.01" y="1268.51" width="8.15" height="8.09" fill="#fdb9ec"/><rect x="803.56" y="1268.51" width="8.15" height="8.09" fill="#feb7e9"/><rect x="811.11" y="1268.51" width="8.15" height="8.09" fill="#feb4e6"/><rect x="818.67" y="1268.51" width="8.15" height="8.09" fill="#feb2e3"/><rect x="826.22" y="1268.51" width="8.15" height="8.09" fill="#feb0e0"/><rect x="833.77" y="1268.51" width="8.15" height="8.09" fill="#ffaedd"/><rect x="841.32" y="1268.51" width="8.15" height="8.09" fill="#ffabda"/><rect x="848.88" y="1268.51" width="8.15" height="8.09" fill="#ffa9d7"/><rect x="856.43" y="1268.51" width="8.15" height="8.09" fill="#ffa6d5"/><rect x="863.98" y="1268.51" width="8.15" height="8.09" fill="#ffa4d2"/><rect x="871.53" y="1268.51" width="8.15" height="8.09" fill="#ffa2cf"/><rect x="879.08" y="1268.51" width="8.15" height="8.09" fill="#ff9fcd"/><rect x="886.64" y="1268.51" width="8.15" height="8.09" fill="#ff9dca"/><rect x="894.19" y="1268.51" width="8.15" height="8.09" fill="#ff9bc7"/><rect x="901.74" y="1268.51" width="8.15" height="8.09" fill="#ff98c5"/><rect x="909.29" y="1268.51" width="8.15" height="8.09" fill="#ff96c2"/><rect x="916.84" y="1268.51" width="8.15" height="8.09" fill="#ff94bf"/><rect x="924.40" y="1268.51" width="8.15" height="8.09" fill="#ff91bc"/><rect x="931.95" y="1268.51" width="8.15" height="8.09" fill="#ff8fba"/><rect x="939.50" y="1268.51" width="8.15" height="8.09" fill="#ff8eb8"/><rect x="569.45" y="1276.00" width="8.15" height="8.09" fill="#a8c8ff"/><rect x="577.00" y="1276.00" width="8.15" height="8.09" fill="#aac8ff"/><rect x="584.55" y="1276.00" width="8.15" height="8.09" fill="#adc8ff"/><rect x="592.10" y="1276.00" width="8.15" height="8.09" fill="#b0c8ff"/><rect x="599.66" y="1276.00" width="8.15" height="8.09" fill="#b4c8ff"/><rect x="607.21" y="1276.00" width="8.15" height="8.09" fill="#b7c8ff"/><rect x="614.76" y="1276.00" width="8.15" height="8.09" fill="#bac8ff"/><rect x="622.31" y="1276.00" width="8.15" height="8.09" fill="#bec8ff"/><rect x="629.86" y="1276.00" width="8.15" height="8.09" fill="#c1c8ff"/><rect x="637.42" y="1276.00" width="8.15" height="8.09" fill="#c4c8ff"/><rect x="644.97" y="1276.00" width="8.15" height="8.09" fill="#c8c8ff"/><rect x="652.52" y="1276.00" width="8.15" height="8.09" fill="#cbc8ff"/><rect x="660.07" y="1276.00" width="8.15" height="8.09" fill="#cec8ff"/><rect x="667.62" y="1276.00" width="8.15" height="8.09" fill="#d2c8ff"/><rect x="675.18" y="1276.00" width="8.15" height="8.09" fill="#d6c8ff"/><rect x="682.73" y="1276.00" width="8.15" height="8.09" fill="#d9c7fe"/><rect x="690.28" y="1276.00" width="8.15" height="8.09" fill="#ddc7fe"/><rect x="697.83" y="1276.00" width="8.15" height="8.09" fill="#e0c6fe"/><rect x="705.39" y="1276.00" width="8.15" height="8.09" fill="#e4c6fe"/><rect x="712.94" y="1276.00" width="8.15" height="8.09" fill="#e8c6fd"/><rect x="720.49" y="1276.00" width="8.15" height="8.09" fill="#ecc6fd"/><rect x="728.04" y="1276.00" width="8.15" height="8.09" fill="#efc5fd"/><rect x="735.59" y="1276.00" width="8.15" height="8.09" fill="#f3c5fd"/><rect x="743.15" y="1276.00" width="8.15" height="8.09" fill="#f6c4fc"/><rect x="750.70" y="1276.00" width="8.15" height="8.09" fill="#fac4fc"/><rect x="758.25" y="1276.00" width="8.15" height="8.09" fill="#fcc3fa"/><rect x="765.80" y="1276.00" width="8.15" height="8.09" fill="#fcc0f8"/><rect x="773.35" y="1276.00" width="8.15" height="8.09" fill="#fdbef4"/><rect x="780.91" y="1276.00" width="8.15" height="8.09" fill="#fdbcf2"/><rect x="788.46" y="1276.00" width="8.15" height="8.09" fill="#fdbaee"/><rect x="796.01" y="1276.00" width="8.15" height="8.09" fill="#fdb7ec"/><rect x="803.56" y="1276.00" width="8.15" height="8.09" fill="#feb5e8"/><rect x="811.11" y="1276.00" width="8.15" height="8.09" fill="#feb2e6"/><rect x="818.67" y="1276.00" width="8.15" height="8.09" fill="#feb0e2"/><rect x="826.22" y="1276.00" width="8.15" height="8.09" fill="#feaee0"/><rect x="833.77" y="1276.00" width="8.15" height="8.09" fill="#ffacdc"/><rect x="841.32" y="1276.00" width="8.15" height="8.09" fill="#ffa9da"/><rect x="848.88" y="1276.00" width="8.15" height="8.09" fill="#ffa7d7"/><rect x="856.43" y="1276.00" width="8.15" height="8.09" fill="#ffa4d4"/><rect x="863.98" y="1276.00" width="8.15" height="8.09" fill="#ffa2d1"/><rect x="871.53" y="1276.00" width="8.15" height="8.09" fill="#ffa0cf"/><rect x="879.08" y="1276.00" width="8.15" height="8.09" fill="#ff9ecc"/><rect x="886.64" y="1276.00" width="8.15" height="8.09" fill="#ff9bc9"/><rect x="894.19" y="1276.00" width="8.15" height="8.09" fill="#ff99c7"/><rect x="901.74" y="1276.00" width="8.15" height="8.09" fill="#ff96c4"/><rect x="909.29" y="1276.00" width="8.15" height="8.09" fill="#ff94c1"/><rect x="916.84" y="1276.00" width="8.15" height="8.09" fill="#ff92bf"/><rect x="924.40" y="1276.00" width="8.15" height="8.09" fill="#ff90bc"/><rect x="931.95" y="1276.00" width="8.15" height="8.09" fill="#ff8db9"/><rect x="939.50" y="1276.00" width="8.15" height="8.09" fill="#ff8cb8"/></g>
<path d="M612 1283 Q 745 1177 938 1056.5" fill="none" stroke="#000" stroke-width="4.6"/>
<circle cx="780.4" cy="1106.5" r="6.4" fill="#3a3a3a" stroke="#000" stroke-width="1.3"/>
<circle cx="778.6" cy="1108.6" r="6.4" fill="#6a6a6a" stroke="#000" stroke-width="1.3"/>
<circle cx="776.5" cy="1110.6" r="6.4" fill="#9a9a9a" stroke="#000" stroke-width="1.3"/>
<circle cx="773.8" cy="1113.3" r="6.4" fill="#c4c4c4" stroke="#000" stroke-width="1.3"/>
<circle cx="765.2" cy="1121.7" r="6.4" fill="#dedede" stroke="#000" stroke-width="1.3"/>
<rect x="749.2" y="1135.8" width="17.5" height="17.6" fill="#fff" stroke="#000" stroke-width="2.6"/>
<circle cx="742.5" cy="1153.3" r="6.6" fill="#1b1b1b" stroke="#000" stroke-width="1.3"/>
<circle cx="746.7" cy="1138.3" r="6.6" fill="#fff" stroke="#000" stroke-width="1.3"/>
</g>
<rect x="577.0" y="1014.0" width="362.5" height="262.0" fill="none" stroke="#8a8a8a" stroke-width="2.2"/>
<line x1="568.5" y1="1035.5" x2="577.0" y2="1035.5" stroke="#dcdcdc" stroke-width="2.0"/>
<text x="566.5" y="1042.5" font-size="20.0" fill="#e0e0e0" text-anchor="end" textLength="42.2" lengthAdjust="spacingAndGlyphs">0,35</text>
<line x1="568.5" y1="1087.9" x2="577.0" y2="1087.9" stroke="#dcdcdc" stroke-width="2.0"/>
<text x="566.5" y="1094.9" font-size="20.0" fill="#e0e0e0" text-anchor="end" textLength="42.2" lengthAdjust="spacingAndGlyphs">0,34</text>
<line x1="568.5" y1="1140.2" x2="577.0" y2="1140.2" stroke="#dcdcdc" stroke-width="2.0"/>
<text x="566.5" y="1147.2" font-size="20.0" fill="#e0e0e0" text-anchor="end" textLength="42.2" lengthAdjust="spacingAndGlyphs">0,33</text>
<line x1="568.5" y1="1192.6" x2="577.0" y2="1192.6" stroke="#dcdcdc" stroke-width="2.0"/>
<text x="566.5" y="1199.6" font-size="20.0" fill="#e0e0e0" text-anchor="end" textLength="42.2" lengthAdjust="spacingAndGlyphs">0,32</text>
<line x1="568.5" y1="1244.9" x2="577.0" y2="1244.9" stroke="#dcdcdc" stroke-width="2.0"/>
<text x="566.5" y="1251.9" font-size="20.0" fill="#e0e0e0" text-anchor="end" textLength="42.2" lengthAdjust="spacingAndGlyphs">0,31</text>
<line x1="591.2" y1="1277.0" x2="591.2" y2="1285.5" stroke="#dcdcdc" stroke-width="2.0"/>
<text x="591.2" y="1308.8" font-size="20.5" fill="#e0e0e0" text-anchor="middle" textLength="42.3" lengthAdjust="spacingAndGlyphs">0,29</text>
<line x1="663.6" y1="1277.0" x2="663.6" y2="1285.5" stroke="#dcdcdc" stroke-width="2.0"/>
<text x="663.6" y="1308.8" font-size="20.5" fill="#e0e0e0" text-anchor="middle" textLength="30.2" lengthAdjust="spacingAndGlyphs">0,3</text>
<line x1="736.0" y1="1277.0" x2="736.0" y2="1285.5" stroke="#dcdcdc" stroke-width="2.0"/>
<text x="736.0" y="1308.8" font-size="20.5" fill="#e0e0e0" text-anchor="middle" textLength="42.3" lengthAdjust="spacingAndGlyphs">0,31</text>
<line x1="808.4" y1="1277.0" x2="808.4" y2="1285.5" stroke="#dcdcdc" stroke-width="2.0"/>
<text x="808.4" y="1308.8" font-size="20.5" fill="#e0e0e0" text-anchor="middle" textLength="42.3" lengthAdjust="spacingAndGlyphs">0,32</text>
<line x1="880.8" y1="1277.0" x2="880.8" y2="1285.5" stroke="#dcdcdc" stroke-width="2.0"/>
<text x="880.8" y="1308.8" font-size="20.5" fill="#e0e0e0" text-anchor="middle" textLength="42.3" lengthAdjust="spacingAndGlyphs">0,33</text>
<rect x="965.3" y="978.4" width="1326.7" height="318.6" fill="#060606"/>
<rect x="967.3" y="980.4" width="1322.7" height="42.2" fill="url(#thead)"/>
<rect x="967.3" y="1022.6" width="1322.7" height="39.1" fill="#3e3e3e"/>
<text x="985.2" y="1052.3" font-size="24.5" fill="#f0f0f0" font-weight="bold" textLength="90.3" lengthAdjust="spacingAndGlyphs">x: CIE31</text>
<text x="1204.4" y="1052.3" font-size="24.4" fill="#f0f0f0" textLength="45.1" lengthAdjust="spacingAndGlyphs">0,26</text>
<text x="1316.0" y="1052.3" font-size="24.4" fill="#f0f0f0" textLength="45.1" lengthAdjust="spacingAndGlyphs">0,31</text>
<text x="1414.2" y="1052.3" font-size="24.4" fill="#f0f0f0" textLength="45.1" lengthAdjust="spacingAndGlyphs">0,32</text>
<text x="1512.5" y="1052.3" font-size="24.4" fill="#f0f0f0" textLength="45.1" lengthAdjust="spacingAndGlyphs">0,32</text>
<text x="1610.7" y="1052.3" font-size="24.4" fill="#f0f0f0" textLength="45.1" lengthAdjust="spacingAndGlyphs">0,32</text>
<text x="1708.8" y="1052.3" font-size="24.4" fill="#f0f0f0" textLength="45.1" lengthAdjust="spacingAndGlyphs">0,32</text>
<text x="1806.7" y="1052.3" font-size="24.4" fill="#f0f0f0" textLength="45.1" lengthAdjust="spacingAndGlyphs">0,32</text>
<text x="1904.6" y="1052.3" font-size="24.4" fill="#f0f0f0" textLength="45.1" lengthAdjust="spacingAndGlyphs">0,32</text>
<text x="2002.6" y="1052.3" font-size="24.4" fill="#f0f0f0" textLength="45.1" lengthAdjust="spacingAndGlyphs">0,32</text>
<text x="2100.5" y="1052.3" font-size="24.4" fill="#f0f0f0" textLength="45.1" lengthAdjust="spacingAndGlyphs">0,31</text>
<text x="2198.5" y="1052.3" font-size="24.4" fill="#f0f0f0" textLength="45.1" lengthAdjust="spacingAndGlyphs">0,31</text>
<rect x="967.3" y="1061.7" width="1322.7" height="39.3" fill="#7a7a7a"/>
<text x="985.2" y="1091.4" font-size="24.5" fill="#f0f0f0" font-weight="bold" textLength="90.1" lengthAdjust="spacingAndGlyphs">y: CIE31</text>
<text x="1204.4" y="1091.4" font-size="24.4" fill="#f0f0f0" textLength="45.1" lengthAdjust="spacingAndGlyphs">0,25</text>
<text x="1316.0" y="1091.4" font-size="24.4" fill="#f0f0f0" textLength="45.1" lengthAdjust="spacingAndGlyphs">0,33</text>
<text x="1414.2" y="1091.4" font-size="24.4" fill="#f0f0f0" textLength="45.1" lengthAdjust="spacingAndGlyphs">0,33</text>
<text x="1512.5" y="1091.4" font-size="24.4" fill="#f0f0f0" textLength="45.1" lengthAdjust="spacingAndGlyphs">0,34</text>
<text x="1610.7" y="1091.4" font-size="24.4" fill="#f0f0f0" textLength="45.1" lengthAdjust="spacingAndGlyphs">0,34</text>
<text x="1708.8" y="1091.4" font-size="24.4" fill="#f0f0f0" textLength="45.1" lengthAdjust="spacingAndGlyphs">0,34</text>
<text x="1806.7" y="1091.4" font-size="24.4" fill="#f0f0f0" textLength="45.1" lengthAdjust="spacingAndGlyphs">0,34</text>
<text x="1904.6" y="1091.4" font-size="24.4" fill="#f0f0f0" textLength="45.1" lengthAdjust="spacingAndGlyphs">0,34</text>
<text x="2002.6" y="1091.4" font-size="24.4" fill="#f0f0f0" textLength="45.1" lengthAdjust="spacingAndGlyphs">0,33</text>
<text x="2100.5" y="1091.4" font-size="24.4" fill="#f0f0f0" textLength="45.1" lengthAdjust="spacingAndGlyphs">0,33</text>
<text x="2198.5" y="1091.4" font-size="24.4" fill="#f0f0f0" textLength="45.1" lengthAdjust="spacingAndGlyphs">0,33</text>
<rect x="967.3" y="1101.0" width="1322.7" height="39.1" fill="#3e3e3e"/>
<text x="985.2" y="1130.7" font-size="24.5" fill="#f0f0f0" font-weight="bold" textLength="14.6" lengthAdjust="spacingAndGlyphs">Y</text>
<text x="1204.4" y="1130.7" font-size="24.4" fill="#f0f0f0" textLength="45.1" lengthAdjust="spacingAndGlyphs">0,31</text>
<text x="1316.0" y="1130.7" font-size="24.4" fill="#f0f0f0" textLength="45.1" lengthAdjust="spacingAndGlyphs">3,67</text>
<text x="1414.2" y="1130.7" font-size="24.4" fill="#f0f0f0" textLength="58.0" lengthAdjust="spacingAndGlyphs">14,59</text>
<text x="1512.5" y="1130.7" font-size="24.4" fill="#f0f0f0" textLength="58.0" lengthAdjust="spacingAndGlyphs">34,34</text>
<text x="1610.7" y="1130.7" font-size="24.4" fill="#f0f0f0" textLength="58.0" lengthAdjust="spacingAndGlyphs">65,87</text>
<text x="1708.8" y="1130.7" font-size="24.4" fill="#f0f0f0" textLength="70.9" lengthAdjust="spacingAndGlyphs">105,14</text>
<text x="1806.7" y="1130.7" font-size="24.4" fill="#f0f0f0" textLength="70.9" lengthAdjust="spacingAndGlyphs">150,84</text>
<text x="1904.6" y="1130.7" font-size="24.4" fill="#f0f0f0" textLength="70.9" lengthAdjust="spacingAndGlyphs">207,37</text>
<text x="2002.6" y="1130.7" font-size="24.4" fill="#f0f0f0" textLength="70.9" lengthAdjust="spacingAndGlyphs">279,30</text>
<text x="2100.5" y="1130.7" font-size="24.4" fill="#f0f0f0" textLength="70.9" lengthAdjust="spacingAndGlyphs">365,09</text>
<text x="2198.5" y="1130.7" font-size="24.4" fill="#f0f0f0" textLength="70.9" lengthAdjust="spacingAndGlyphs">437,27</text>
<rect x="967.3" y="1140.1" width="1322.7" height="39.2" fill="#7a7a7a"/>
<text x="985.2" y="1169.8" font-size="24.5" fill="#f0f0f0" font-weight="bold" textLength="95.7" lengthAdjust="spacingAndGlyphs">Target Y</text>
<text x="1204.4" y="1169.8" font-size="24.4" fill="#f0f0f0" textLength="45.1" lengthAdjust="spacingAndGlyphs">0,00</text>
<text x="1316.0" y="1169.8" font-size="24.4" fill="#f0f0f0" textLength="45.1" lengthAdjust="spacingAndGlyphs">4,52</text>
<text x="1414.2" y="1169.8" font-size="24.4" fill="#f0f0f0" textLength="58.0" lengthAdjust="spacingAndGlyphs">14,48</text>
<text x="1512.5" y="1169.8" font-size="24.4" fill="#f0f0f0" textLength="58.0" lengthAdjust="spacingAndGlyphs">31,60</text>
<text x="1610.7" y="1169.8" font-size="24.4" fill="#f0f0f0" textLength="58.0" lengthAdjust="spacingAndGlyphs">58,10</text>
<text x="1708.8" y="1169.8" font-size="24.4" fill="#f0f0f0" textLength="58.0" lengthAdjust="spacingAndGlyphs">94,39</text>
<text x="1806.7" y="1169.8" font-size="24.4" fill="#f0f0f0" textLength="70.9" lengthAdjust="spacingAndGlyphs">139,29</text>
<text x="1904.6" y="1169.8" font-size="24.4" fill="#f0f0f0" textLength="70.9" lengthAdjust="spacingAndGlyphs">194,67</text>
<text x="2002.6" y="1169.8" font-size="24.4" fill="#f0f0f0" textLength="70.9" lengthAdjust="spacingAndGlyphs">264,03</text>
<text x="2100.5" y="1169.8" font-size="24.4" fill="#f0f0f0" textLength="70.9" lengthAdjust="spacingAndGlyphs">346,01</text>
<text x="2198.5" y="1169.8" font-size="24.4" fill="#f0f0f0" textLength="70.9" lengthAdjust="spacingAndGlyphs">437,27</text>
<rect x="967.3" y="1179.3" width="1322.7" height="39.2" fill="#3e3e3e"/>
<text x="985.2" y="1209.0" font-size="24.5" fill="#f0f0f0" font-weight="bold" textLength="193.1" lengthAdjust="spacingAndGlyphs">Gamma Log/Log</text>
<text x="1204.4" y="1209.0" font-size="24.4" fill="#f0f0f0" textLength="45.1" lengthAdjust="spacingAndGlyphs">1,28</text>
<text x="1316.0" y="1209.0" font-size="24.4" fill="#f0f0f0" textLength="45.1" lengthAdjust="spacingAndGlyphs">2,09</text>
<text x="1414.2" y="1209.0" font-size="24.4" fill="#f0f0f0" textLength="43.4" lengthAdjust="spacingAndGlyphs">2,11</text>
<text x="1512.5" y="1209.0" font-size="24.4" fill="#f0f0f0" textLength="45.1" lengthAdjust="spacingAndGlyphs">2,10</text>
<text x="1610.7" y="1209.0" font-size="24.4" fill="#f0f0f0" textLength="45.1" lengthAdjust="spacingAndGlyphs">2,07</text>
<text x="1708.8" y="1209.0" font-size="24.4" fill="#f0f0f0" textLength="45.1" lengthAdjust="spacingAndGlyphs">2,07</text>
<text x="1806.7" y="1209.0" font-size="24.4" fill="#f0f0f0" textLength="45.1" lengthAdjust="spacingAndGlyphs">2,08</text>
<text x="1904.6" y="1209.0" font-size="24.4" fill="#f0f0f0" textLength="45.1" lengthAdjust="spacingAndGlyphs">2,08</text>
<text x="2002.6" y="1209.0" font-size="24.4" fill="#f0f0f0" textLength="45.1" lengthAdjust="spacingAndGlyphs">2,01</text>
<text x="2100.5" y="1209.0" font-size="24.4" fill="#f0f0f0" textLength="45.1" lengthAdjust="spacingAndGlyphs">1,75</text>
<text x="2198.5" y="1209.0" font-size="24.4" fill="#f0f0f0" textLength="45.1" lengthAdjust="spacingAndGlyphs">2,27</text>
<rect x="967.3" y="1218.5" width="1322.7" height="39.9" fill="#7a7a7a"/>
<text x="985.2" y="1248.2" font-size="24.5" fill="#f0f0f0" font-weight="bold" textLength="44.4" lengthAdjust="spacingAndGlyphs">CCT</text>
<text x="1204.4" y="1248.2" font-size="24.4" fill="#f0f0f0" textLength="97.7" lengthAdjust="spacingAndGlyphs">18905,00</text>
<text x="1316.0" y="1248.2" font-size="24.4" fill="#f0f0f0" textLength="84.7" lengthAdjust="spacingAndGlyphs">6623,00</text>
<text x="1414.2" y="1248.2" font-size="24.4" fill="#f0f0f0" textLength="84.7" lengthAdjust="spacingAndGlyphs">6343,00</text>
<text x="1512.5" y="1248.2" font-size="24.4" fill="#f0f0f0" textLength="84.7" lengthAdjust="spacingAndGlyphs">6298,00</text>
<text x="1610.7" y="1248.2" font-size="24.4" fill="#f0f0f0" textLength="84.7" lengthAdjust="spacingAndGlyphs">6290,00</text>
<text x="1708.8" y="1248.2" font-size="24.4" fill="#f0f0f0" textLength="84.7" lengthAdjust="spacingAndGlyphs">6292,00</text>
<text x="1806.7" y="1248.2" font-size="24.4" fill="#f0f0f0" textLength="84.7" lengthAdjust="spacingAndGlyphs">6299,00</text>
<text x="1904.6" y="1248.2" font-size="24.4" fill="#f0f0f0" textLength="84.7" lengthAdjust="spacingAndGlyphs">6314,00</text>
<text x="2002.6" y="1248.2" font-size="24.4" fill="#f0f0f0" textLength="84.7" lengthAdjust="spacingAndGlyphs">6343,00</text>
<text x="2100.5" y="1248.2" font-size="24.4" fill="#f0f0f0" textLength="84.7" lengthAdjust="spacingAndGlyphs">6413,00</text>
<text x="2198.5" y="1248.2" font-size="24.4" fill="#f0f0f0" textLength="84.7" lengthAdjust="spacingAndGlyphs">6581,00</text>
<rect x="967.3" y="1258.4" width="1322.7" height="38.6" fill="#3e3e3e"/>
<text x="985.2" y="1288.1" font-size="24.5" fill="#f0f0f0" font-weight="bold" textLength="93.8" lengthAdjust="spacingAndGlyphs">ΔE 2000</text>
<text x="1204.4" y="1288.1" font-size="24.4" fill="#f0f0f0" textLength="45.1" lengthAdjust="spacingAndGlyphs">1,05</text>
<text x="1316.0" y="1288.1" font-size="24.4" fill="#f0f0f0" textLength="45.1" lengthAdjust="spacingAndGlyphs">1,06</text>
<text x="1414.2" y="1288.1" font-size="24.4" fill="#f0f0f0" textLength="45.1" lengthAdjust="spacingAndGlyphs">1,02</text>
<text x="1512.5" y="1288.1" font-size="24.4" fill="#f0f0f0" textLength="45.1" lengthAdjust="spacingAndGlyphs">1,96</text>
<text x="1610.7" y="1288.1" font-size="24.4" fill="#f0f0f0" textLength="45.1" lengthAdjust="spacingAndGlyphs">3,16</text>
<text x="1708.8" y="1288.1" font-size="24.4" fill="#f0f0f0" textLength="45.1" lengthAdjust="spacingAndGlyphs">3,43</text>
<text x="1806.7" y="1288.1" font-size="24.4" fill="#f0f0f0" textLength="45.1" lengthAdjust="spacingAndGlyphs">3,22</text>
<text x="1904.6" y="1288.1" font-size="24.4" fill="#f0f0f0" textLength="45.1" lengthAdjust="spacingAndGlyphs">3,19</text>
<text x="2002.6" y="1288.1" font-size="24.4" fill="#f0f0f0" textLength="45.1" lengthAdjust="spacingAndGlyphs">3,19</text>
<text x="2100.5" y="1288.1" font-size="24.4" fill="#f0f0f0" textLength="45.1" lengthAdjust="spacingAndGlyphs">2,91</text>
<text x="2198.5" y="1288.1" font-size="24.4" fill="#f0f0f0" textLength="45.1" lengthAdjust="spacingAndGlyphs">1,81</text>
<text x="1253.5" y="1009.8" font-size="21.2" fill="#f4f4f4" text-anchor="middle" textLength="11.7" lengthAdjust="spacingAndGlyphs" stroke="#f4f4f4" stroke-width="0.35">0</text>
<text x="1358.4" y="1009.8" font-size="21.2" fill="#f4f4f4" text-anchor="middle" textLength="23.3" lengthAdjust="spacingAndGlyphs" stroke="#f4f4f4" stroke-width="0.35">10</text>
<text x="1456.7" y="1009.8" font-size="21.2" fill="#f4f4f4" text-anchor="middle" textLength="23.3" lengthAdjust="spacingAndGlyphs" stroke="#f4f4f4" stroke-width="0.35">20</text>
<text x="1555.0" y="1009.8" font-size="21.2" fill="#f4f4f4" text-anchor="middle" textLength="23.3" lengthAdjust="spacingAndGlyphs" stroke="#f4f4f4" stroke-width="0.35">30</text>
<text x="1652.6" y="1009.8" font-size="21.2" fill="#f4f4f4" text-anchor="middle" textLength="23.3" lengthAdjust="spacingAndGlyphs" stroke="#f4f4f4" stroke-width="0.35">40</text>
<text x="1750.7" y="1009.8" font-size="21.2" fill="#f4f4f4" text-anchor="middle" textLength="23.3" lengthAdjust="spacingAndGlyphs" stroke="#f4f4f4" stroke-width="0.35">50</text>
<text x="1848.5" y="1009.8" font-size="21.2" fill="#f4f4f4" text-anchor="middle" textLength="23.3" lengthAdjust="spacingAndGlyphs" stroke="#f4f4f4" stroke-width="0.35">60</text>
<text x="1947.2" y="1009.8" font-size="21.2" fill="#f4f4f4" text-anchor="middle" textLength="23.3" lengthAdjust="spacingAndGlyphs" stroke="#f4f4f4" stroke-width="0.35">70</text>
<text x="2044.6" y="1009.8" font-size="21.2" fill="#f4f4f4" text-anchor="middle" textLength="23.3" lengthAdjust="spacingAndGlyphs" stroke="#f4f4f4" stroke-width="0.35">80</text>
<text x="2143.0" y="1009.8" font-size="21.2" fill="#f4f4f4" text-anchor="middle" textLength="23.3" lengthAdjust="spacingAndGlyphs" stroke="#f4f4f4" stroke-width="0.35">90</text>
<text x="2241.0" y="1009.8" font-size="21.2" fill="#f4f4f4" text-anchor="middle" textLength="35.0" lengthAdjust="spacingAndGlyphs" stroke="#f4f4f4" stroke-width="0.35">100</text>
<rect x="0.0" y="1330.0" width="2237.0" height="62.0" fill="url(#bbar)"/>
<rect x="1.4" y="1330" width="149" height="70" rx="4" fill="url(#bbtn)" stroke="#4a4a4a" stroke-width="1"/>
<rect x="6.4" y="1335" width="139.5" height="36" rx="4" fill="#000000" stroke="#3a3a3a" stroke-width="1"/>
<text x="75.9" y="1387.0" font-size="11.5" fill="#2a2a2a" text-anchor="middle" font-weight="bold">0</text>
<rect x="153.4" y="1330" width="149" height="70" rx="4" fill="url(#bbtn)" stroke="#4a4a4a" stroke-width="1"/>
<rect x="158.4" y="1335" width="139.5" height="36" rx="4" fill="#1a1a1a" stroke="#3a3a3a" stroke-width="1"/>
<text x="227.9" y="1387.0" font-size="11.5" fill="#2a2a2a" text-anchor="middle" font-weight="bold">10</text>
<rect x="305.4" y="1330" width="149" height="70" rx="4" fill="url(#bbtn)" stroke="#4a4a4a" stroke-width="1"/>
<rect x="310.4" y="1335" width="139.5" height="36" rx="4" fill="#333333" stroke="#3a3a3a" stroke-width="1"/>
<text x="379.9" y="1387.0" font-size="11.5" fill="#2a2a2a" text-anchor="middle" font-weight="bold">20</text>
<rect x="457.4" y="1330" width="149" height="70" rx="4" fill="url(#bbtn)" stroke="#4a4a4a" stroke-width="1"/>
<rect x="462.4" y="1335" width="139.5" height="36" rx="4" fill="#4d4d4d" stroke="#3a3a3a" stroke-width="1"/>
<text x="531.9" y="1387.0" font-size="11.5" fill="#2a2a2a" text-anchor="middle" font-weight="bold">30</text>
<rect x="609.4" y="1330" width="149" height="70" rx="4" fill="url(#bbtn)" stroke="#4a4a4a" stroke-width="1"/>
<rect x="614.4" y="1335" width="139.5" height="36" rx="4" fill="#666666" stroke="#3a3a3a" stroke-width="1"/>
<text x="683.9" y="1387.0" font-size="11.5" fill="#2a2a2a" text-anchor="middle" font-weight="bold">40</text>
<rect x="761.4" y="1330" width="149" height="70" rx="4" fill="url(#bbtn)" stroke="#4a4a4a" stroke-width="1"/>
<rect x="766.4" y="1335" width="139.5" height="36" rx="4" fill="#808080" stroke="#3a3a3a" stroke-width="1"/>
<text x="835.9" y="1387.0" font-size="11.5" fill="#2a2a2a" text-anchor="middle" font-weight="bold">50</text>
<rect x="913.4" y="1330" width="149" height="70" rx="4" fill="url(#bbtn)" stroke="#4a4a4a" stroke-width="1"/>
<rect x="918.4" y="1335" width="139.5" height="36" rx="4" fill="#999999" stroke="#3a3a3a" stroke-width="1"/>
<text x="987.9" y="1387.0" font-size="11.5" fill="#2a2a2a" text-anchor="middle" font-weight="bold">60</text>
<rect x="1065.4" y="1330" width="149" height="70" rx="4" fill="url(#bbtn)" stroke="#4a4a4a" stroke-width="1"/>
<rect x="1070.4" y="1335" width="139.5" height="36" rx="4" fill="#b3b3b3" stroke="#3a3a3a" stroke-width="1"/>
<text x="1139.9" y="1387.0" font-size="11.5" fill="#2a2a2a" text-anchor="middle" font-weight="bold">70</text>
<rect x="1217.4" y="1330" width="149" height="70" rx="4" fill="url(#bbtn)" stroke="#4a4a4a" stroke-width="1"/>
<rect x="1222.4" y="1335" width="139.5" height="36" rx="4" fill="#cccccc" stroke="#3a3a3a" stroke-width="1"/>
<text x="1291.9" y="1387.0" font-size="11.5" fill="#2a2a2a" text-anchor="middle" font-weight="bold">80</text>
<rect x="1369.4" y="1330" width="149" height="70" rx="4" fill="url(#bbtn)" stroke="#4a4a4a" stroke-width="1"/>
<rect x="1374.4" y="1335" width="139.5" height="36" rx="4" fill="#e6e6e6" stroke="#3a3a3a" stroke-width="1"/>
<text x="1443.9" y="1387.0" font-size="11.5" fill="#2a2a2a" text-anchor="middle" font-weight="bold">90</text>
<rect x="1521.4" y="1330" width="149" height="70" rx="4" fill="url(#bsel)" stroke="#1a1a1a" stroke-width="1"/>
<rect x="1526.4" y="1335" width="139.5" height="36" rx="4" fill="#ffffff" stroke="#111" stroke-width="1"/>
<text x="1595.9" y="1387.0" font-size="11.5" fill="#f4f4f4" text-anchor="middle" font-weight="bold">100</text>
<rect x="2237.0" y="1330.0" width="320.0" height="62.0" fill="#2c2c2c"/>
<rect x="2237" y="1330" width="47.5" height="70" rx="4" fill="url(#cbtn)"/>
<line x1="2237.0" y1="1348.0" x2="2284.5" y2="1348.0" stroke="#555" stroke-width="1.2"/>
<circle cx="2261" cy="1339" r="7" fill="#9a9a9a"/>
<path d="M2256 1342h10l-5 -5z" fill="#1e1e1e"/>
<rect x="2246.5" y="1354.5" width="29" height="28" rx="3.5" fill="#bdbdbd" stroke="#111" stroke-width="2.6"/>
<rect x="2254.0" y="1363.0" width="14.0" height="13.0" fill="#000"/>
<rect x="2512.0" y="1330.0" width="45.0" height="30.0" fill="url(#dkbar)"/>
<rect x="2286.0" y="1330.0" width="226.0" height="30.0" fill="url(#cbtn)"/>
<line x1="2332.2" y1="1330.0" x2="2332.2" y2="1360.0" stroke="#151515" stroke-width="1.2"/>
<line x1="2377.2" y1="1330.0" x2="2377.2" y2="1360.0" stroke="#151515" stroke-width="1.2"/>
<line x1="2422.2" y1="1330.0" x2="2422.2" y2="1360.0" stroke="#151515" stroke-width="1.2"/>
<line x1="2467.5" y1="1330.0" x2="2467.5" y2="1360.0" stroke="#151515" stroke-width="1.2"/>
<circle cx="2309.1" cy="1345" r="9.6" fill="url(#bub)"/>
<circle cx="2354.7" cy="1345" r="9.6" fill="url(#bub)"/>
<circle cx="2399.7" cy="1345" r="9.6" fill="url(#bub)"/>
<circle cx="2444.8" cy="1345" r="9.6" fill="url(#bub)"/>
<circle cx="2489.8" cy="1345" r="9.6" fill="url(#bub)"/>
<rect x="2304.8" y="1340.7" width="8.6" height="8.6" fill="#2a2a2a"/>
<path d="M2351.5 1339.8l8.8 5.4l-8.8 5.4z" fill="#2a2a2a"/>
<path d="M2395.9 1340h-2.6v10.4h2.6M2403.5 1340h2.6v10.4h-2.6" fill="none" stroke="#2a2a2a" stroke-width="2"/>
<rect x="2397.4" y="1344.2" width="1.6" height="1.6" fill="#2a2a2a"/><rect x="2400.4" y="1344.2" width="1.6" height="1.6" fill="#2a2a2a"/>
<path d="M2444.8 1345c-1.8 -2.8 -6 -2.8 -6 0s4.2 2.8 6 0s6 -2.8 6 0s-4.2 2.8 -6 0" fill="none" stroke="#2a2a2a" stroke-width="1.9"/>
<path d="M2484.9 1346A4.8 4.8 0 0 1 2492.9 1341.2M2494.6 1344A4.8 4.8 0 0 1 2486.6 1348.8" fill="none" stroke="#2a2a2a" stroke-width="2"/>
<path d="M2491.3 1339l4.2 -0.6l-0.6 4.4z" fill="#2a2a2a"/>
<path d="M2488.2 1351l-4.2 0.6l0.6 -4.4z" fill="#2a2a2a"/>
<circle cx="2536" cy="1345.5" r="9.8" fill="#2e2e2e" stroke="#3c3c3c" stroke-width="1"/>
<rect x="2286.0" y="1360.5" width="272.0" height="32.0" fill="url(#cbtn)"/>
<line x1="2422.2" y1="1360.0" x2="2422.2" y2="1392.0" stroke="#151515" stroke-width="1.2"/>
<line x1="2286.0" y1="1360.2" x2="2558.0" y2="1360.2" stroke="#1a1a1a" stroke-width="1.2"/>
<circle cx="2316.7" cy="1376" r="9.6" fill="url(#bub)"/><circle cx="2529.8" cy="1376" r="9.6" fill="url(#bub)"/>
<text x="2316.7" y="1381.5" font-size="18.0" fill="#2a2a2a" text-anchor="middle" font-weight="bold">«</text>
<text x="2529.8" y="1381.5" font-size="18.0" fill="#2a2a2a" text-anchor="middle" font-weight="bold">»</text>
<text x="2344.0" y="1383.8" font-size="22.5" fill="#2e2e2e" font-weight="bold" textLength="50.5" lengthAdjust="spacingAndGlyphs">Back</text>
<text x="2450.0" y="1383.8" font-size="22.5" fill="#2e2e2e" font-weight="bold" textLength="51.5" lengthAdjust="spacingAndGlyphs">Next</text>
</svg>
</body></html>
